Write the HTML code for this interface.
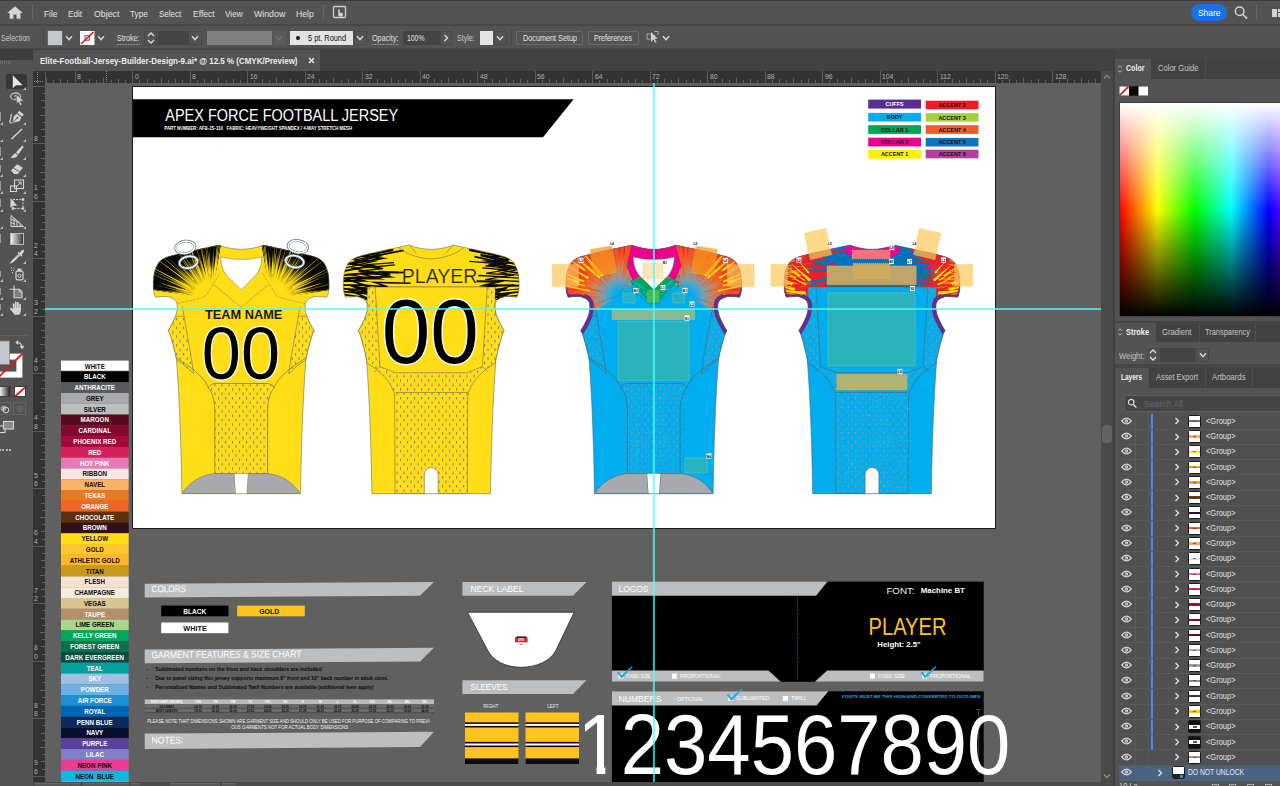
<!DOCTYPE html>
<html lang="en"><head><meta charset="utf-8"><title>Elite-Football-Jersey-Builder-Design-9.ai</title>
<style>
html,body{margin:0;padding:0}
body{width:1280px;height:786px;overflow:hidden;background:#535353;position:relative;font-family:"Liberation Sans",sans-serif}
.a{position:absolute;display:block}
.t{position:absolute;white-space:nowrap;transform-origin:0 50%;display:block}
svg{overflow:hidden}
svg text{white-space:pre}
</style></head>
<body>
<div class="a" style="left:0;top:0;width:1280px;height:1px;background:#3a3a3a"></div>
<div class="a" style="left:0;top:24px;width:1280px;height:2px;background:#474747"></div>
<div class="a" style="left:0;top:48px;width:1280px;height:1px;background:#484848"></div>
<svg class="a" style="left:6px;top:5px" width="18" height="15" viewBox="0 0 18 15"><path d="M9 1.2 L1.2 8 L3.6 8 L3.6 13.8 L7.4 13.8 L7.4 9.6 L10.6 9.6 L10.6 13.8 L14.4 13.8 L14.4 8 L16.8 8 Z" fill="#d6d6d6"/></svg>
<div class="a" style="left:32px;top:5px;width:1px;height:15px;background:#666"></div>
<span class="t" style="left:43.60px;top:7.56px;font-size:9.4px;line-height:11.28px;color:#e0e0e0;transform:scaleX(0.8847);">File</span>
<span class="t" style="left:68.30px;top:7.56px;font-size:9.4px;line-height:11.28px;color:#e0e0e0;transform:scaleX(0.8705);">Edit</span>
<span class="t" style="left:93.60px;top:7.56px;font-size:9.4px;line-height:11.28px;color:#e0e0e0;transform:scaleX(0.9349);">Object</span>
<span class="t" style="left:130.00px;top:7.56px;font-size:9.4px;line-height:11.28px;color:#e0e0e0;transform:scaleX(0.8833);">Type</span>
<span class="t" style="left:159.00px;top:7.56px;font-size:9.4px;line-height:11.28px;color:#e0e0e0;transform:scaleX(0.8574);">Select</span>
<span class="t" style="left:192.60px;top:7.56px;font-size:9.4px;line-height:11.28px;color:#e0e0e0;transform:scaleX(0.9094);">Effect</span>
<span class="t" style="left:225.00px;top:7.56px;font-size:9.4px;line-height:11.28px;color:#e0e0e0;transform:scaleX(0.8760);">View</span>
<span class="t" style="left:253.70px;top:7.56px;font-size:9.4px;line-height:11.28px;color:#e0e0e0;transform:scaleX(0.9362);">Window</span>
<span class="t" style="left:295.80px;top:7.56px;font-size:9.4px;line-height:11.28px;color:#e0e0e0;transform:scaleX(0.9207);">Help</span>
<div class="a" style="left:323px;top:5px;width:1px;height:15px;background:#666"></div>
<svg class="a" style="left:332px;top:5px" width="16" height="15" viewBox="0 0 16 15"><rect x="1.5" y="1.5" width="12" height="11" rx="1" fill="none" stroke="#cfcfcf" stroke-width="1.3"/><path d="M6.2 10.5 V5.2 q0-.9 .8-.9 q.8 0 .8 .9 V7.6 l2.3 .5 q.9 .2 .8 1.1 l-.3 2.3 H7.2 Z" fill="#cfcfcf"/></svg>
<div class="a" style="left:1190.5px;top:3.5px;width:36.5px;height:17.5px;border-radius:9px;background:#1473e6"></div>
<span class="t" style="left:1197.55px;top:7.24px;font-size:9.6px;line-height:11.52px;color:#fff;transform:scaleX(0.8783);">Share</span>
<svg class="a" style="left:1232px;top:4px" width="18" height="17" viewBox="0 0 18 17"><circle cx="7.6" cy="7.2" r="4.3" fill="none" stroke="#d0d0d0" stroke-width="1.5"/><path d="M10.8 10.5 L14.6 14.2" stroke="#d0d0d0" stroke-width="1.7" stroke-linecap="round"/></svg>
<div class="a" style="left:1256px;top:5px;width:1px;height:15px;background:#666"></div>
<div class="a" style="left:1272px;top:9px;width:5px;height:8px;background:#d0d0d0"></div>
<div class="a" style="left:1278px;top:9px;width:2px;height:3px;background:#d0d0d0"></div>
<div class="a" style="left:1278px;top:13px;width:2px;height:4px;background:#d0d0d0"></div>
<span class="t" style="left:1.00px;top:33.30px;font-size:9px;line-height:10.8px;color:#c8c8c8;transform:scaleX(0.7833);">Selection</span>
<div class="a" style="left:43px;top:29px;width:1px;height:17px;background:#484848"></div>
<div class="a" style="left:47.5px;top:30.5px;width:14.5px;height:14px;background:#c4c8cd;box-shadow:0 0 0 .5px #777"></div>
<svg class="a" style="left:64px;top:33px" width="10" height="10" viewBox="-5 -5 10 10"><path d="M-3.0 -1.7 L0 1.7 L3.0 -1.7" fill="none" stroke="#ddd" stroke-width="1.4"/></svg>
<svg class="a" style="left:80px;top:30.5px" width="14.5" height="14" viewBox="0 0 14.5 14"><rect width="14.5" height="14" fill="#fff"/><rect x="5" y="4.8" width="4.4" height="4.4" fill="none" stroke="#555" stroke-width="1"/><path d="M1 13 L13.5 1" stroke="#ee1111" stroke-width="1.6"/></svg>
<svg class="a" style="left:96px;top:33px" width="10" height="10" viewBox="-5 -5 10 10"><path d="M-3.0 -1.7 L0 1.7 L3.0 -1.7" fill="none" stroke="#ddd" stroke-width="1.4"/></svg>
<span class="t" style="left:116.70px;top:33.30px;font-size:9px;line-height:10.8px;color:#e0e0e0;transform:scaleX(0.7821);border-bottom:1px dotted #bbb;line-height:11px;">Stroke:</span>
<svg class="a" style="left:146px;top:30px" width="10" height="16" viewBox="0 0 10 16"><path d="M2 6 L5 3 L8 6 M2 10 L5 13 L8 10" fill="none" stroke="#ddd" stroke-width="1.3"/></svg>
<div class="a" style="left:144px;top:30.5px;width:13px;height:14px;border:1px solid #494949;box-sizing:border-box"></div>
<div class="a" style="left:157.5px;top:30.5px;width:31.5px;height:14px;background:#444"></div>
<div class="a" style="left:189.5px;top:30.5px;width:12px;height:14px;border:1px solid #494949;box-sizing:border-box"></div>
<svg class="a" style="left:190.4px;top:33px" width="10" height="10" viewBox="-5 -5 10 10"><path d="M-3.0 -1.7 L0 1.7 L3.0 -1.7" fill="none" stroke="#ddd" stroke-width="1.4"/></svg>
<div class="a" style="left:206.7px;top:30.5px;width:65.5px;height:14px;background:#808080"></div>
<div class="a" style="left:272.5px;top:30.5px;width:13px;height:14px;background:#5a5a5a"></div>
<svg class="a" style="left:274px;top:33px" width="10" height="10" viewBox="-5 -5 10 10"><path d="M-3.0 -1.7 L0 1.7 L3.0 -1.7" fill="none" stroke="#6e6e6e" stroke-width="1.4"/></svg>
<div class="a" style="left:290.2px;top:30.5px;width:62.5px;height:14px;background:#e2e2e2"></div>
<div class="a" style="left:296px;top:35.5px;width:4px;height:4px;border-radius:2px;background:#111"></div>
<span class="t" style="left:308.00px;top:33.30px;font-size:9px;line-height:10.8px;color:#111;transform:scaleX(0.8166);">5 pt. Round</span>
<div class="a" style="left:353.5px;top:30.5px;width:13px;height:14px;border:1px solid #494949;box-sizing:border-box"></div>
<svg class="a" style="left:355px;top:33px" width="10" height="10" viewBox="-5 -5 10 10"><path d="M-3.0 -1.7 L0 1.7 L3.0 -1.7" fill="none" stroke="#ddd" stroke-width="1.4"/></svg>
<span class="t" style="left:371.80px;top:33.30px;font-size:9px;line-height:10.8px;color:#e0e0e0;transform:scaleX(0.8027);border-bottom:1px dotted #bbb;line-height:11px;">Opacity:</span>
<div class="a" style="left:403.3px;top:30.5px;width:36.5px;height:14px;background:#444"></div>
<span class="t" style="left:406.50px;top:33.30px;font-size:9px;line-height:10.8px;color:#e0e0e0;transform:scaleX(0.7603);">100%</span>
<div class="a" style="left:440px;top:30.5px;width:12px;height:14px;border:1px solid #494949;box-sizing:border-box"></div>
<svg class="a" style="left:441px;top:33px" width="10" height="10" viewBox="-5 -5 10 10"><path d="M-1.5 -3 L1.5 0 L-1.5 3" fill="none" stroke="#ddd" stroke-width="1.4"/></svg>
<span class="t" style="left:457.30px;top:33.30px;font-size:9px;line-height:10.8px;color:#c8c8c8;transform:scaleX(0.7864);">Style:</span>
<div class="a" style="left:479.8px;top:30.5px;width:13.5px;height:14px;background:#e4e4e4"></div>
<div class="a" style="left:494px;top:30.5px;width:13px;height:14px;border:1px solid #494949;box-sizing:border-box"></div>
<svg class="a" style="left:495.3px;top:33px" width="10" height="10" viewBox="-5 -5 10 10"><path d="M-3.0 -1.7 L0 1.7 L3.0 -1.7" fill="none" stroke="#ddd" stroke-width="1.4"/></svg>
<div class="a" style="left:511px;top:29px;width:1px;height:17px;background:#484848"></div>
<div class="a" style="left:516.3px;top:30.5px;width:67px;height:14px;border:1px solid #6a6a6a;border-radius:2px;box-sizing:border-box"></div>
<span class="t" style="left:522.80px;top:33.30px;font-size:9px;line-height:10.8px;color:#e6e6e6;transform:scaleX(0.8055);">Document Setup</span>
<div class="a" style="left:587.5px;top:30.5px;width:51px;height:14px;border:1px solid #6a6a6a;border-radius:2px;box-sizing:border-box"></div>
<span class="t" style="left:594.00px;top:33.30px;font-size:9px;line-height:10.8px;color:#e6e6e6;transform:scaleX(0.7831);">Preferences</span>
<svg class="a" style="left:646px;top:31px" width="13" height="13" viewBox="0 0 13 13"><rect x="1" y="3" width="5" height="5" fill="none" stroke="#aaa" stroke-width="1"/><path d="M5 1 L5 11 L7.4 8.6 L9.4 12 L10.6 11.3 L8.8 8 L11.6 7.6 Z" fill="#cfcfcf"/><path d="M8.5 .5 h3.5 v3.5" fill="none" stroke="#aaa" stroke-width="1"/></svg>
<svg class="a" style="left:660.6px;top:33px" width="10" height="10" viewBox="-5 -5 10 10"><path d="M-3.0 -1.7 L0 1.7 L3.0 -1.7" fill="none" stroke="#ddd" stroke-width="1.4"/></svg>
<div class="a" style="left:0;top:49px;width:1280px;height:22px;background:#424242"></div>
<div class="a" style="left:0;top:49px;width:33px;height:11px;background:#3d3d3d"></div>
<div class="a" style="left:33px;top:50px;width:287px;height:21px;background:#535353"></div>
<span class="t" style="left:39.70px;top:55.50px;font-size:9px;line-height:10.8px;color:#ececec;font-weight:700;transform:scaleX(0.8869);">Elite-Football-Jersey-Builder-Design-9.ai* @ 12.5 % (CMYK/Preview)</span>
<svg class="a" style="left:307px;top:56px" width="9" height="9" viewBox="0 0 9 9"><path d="M2 2 L7 7 M7 2 L2 7" stroke="#e8e8e8" stroke-width="1.5"/></svg>
<div class="a" style="left:33px;top:71px;width:1068px;height:12px;background:#333"></div>
<div class="a" style="left:33px;top:83px;width:12px;height:699px;background:#333"></div>
<svg class="a" style="left:33px;top:71px" width="1068" height="12" viewBox="33 71 1068 12" shape-rendering="crispEdges"><path d="M46.3 78 V83" stroke="#626262" stroke-width="1"/><path d="M53.5 80 V83" stroke="#606060" stroke-width="1"/><path d="M60.7 79 V83" stroke="#626262" stroke-width="1"/><path d="M67.9 80 V83" stroke="#606060" stroke-width="1"/><path d="M75.1 71 V83" stroke="#5a5a5a" stroke-width="1"/><path d="M82.3 80 V83" stroke="#606060" stroke-width="1"/><path d="M89.5 79 V83" stroke="#626262" stroke-width="1"/><path d="M96.7 80 V83" stroke="#606060" stroke-width="1"/><path d="M103.8 78 V83" stroke="#626262" stroke-width="1"/><path d="M111.0 80 V83" stroke="#606060" stroke-width="1"/><path d="M118.2 79 V83" stroke="#626262" stroke-width="1"/><path d="M125.4 80 V83" stroke="#606060" stroke-width="1"/><path d="M132.6 71 V83" stroke="#5a5a5a" stroke-width="1"/><path d="M139.8 80 V83" stroke="#606060" stroke-width="1"/><path d="M147.0 79 V83" stroke="#626262" stroke-width="1"/><path d="M154.2 80 V83" stroke="#606060" stroke-width="1"/><path d="M161.3 78 V83" stroke="#626262" stroke-width="1"/><path d="M168.5 80 V83" stroke="#606060" stroke-width="1"/><path d="M175.7 79 V83" stroke="#626262" stroke-width="1"/><path d="M182.9 80 V83" stroke="#606060" stroke-width="1"/><path d="M190.1 71 V83" stroke="#5a5a5a" stroke-width="1"/><path d="M197.3 80 V83" stroke="#606060" stroke-width="1"/><path d="M204.5 79 V83" stroke="#626262" stroke-width="1"/><path d="M211.7 80 V83" stroke="#606060" stroke-width="1"/><path d="M218.8 78 V83" stroke="#626262" stroke-width="1"/><path d="M226.0 80 V83" stroke="#606060" stroke-width="1"/><path d="M233.2 79 V83" stroke="#626262" stroke-width="1"/><path d="M240.4 80 V83" stroke="#606060" stroke-width="1"/><path d="M247.6 71 V83" stroke="#5a5a5a" stroke-width="1"/><path d="M254.8 80 V83" stroke="#606060" stroke-width="1"/><path d="M262.0 79 V83" stroke="#626262" stroke-width="1"/><path d="M269.2 80 V83" stroke="#606060" stroke-width="1"/><path d="M276.4 78 V83" stroke="#626262" stroke-width="1"/><path d="M283.5 80 V83" stroke="#606060" stroke-width="1"/><path d="M290.7 79 V83" stroke="#626262" stroke-width="1"/><path d="M297.9 80 V83" stroke="#606060" stroke-width="1"/><path d="M305.1 71 V83" stroke="#5a5a5a" stroke-width="1"/><path d="M312.3 80 V83" stroke="#606060" stroke-width="1"/><path d="M319.5 79 V83" stroke="#626262" stroke-width="1"/><path d="M326.7 80 V83" stroke="#606060" stroke-width="1"/><path d="M333.9 78 V83" stroke="#626262" stroke-width="1"/><path d="M341.0 80 V83" stroke="#606060" stroke-width="1"/><path d="M348.2 79 V83" stroke="#626262" stroke-width="1"/><path d="M355.4 80 V83" stroke="#606060" stroke-width="1"/><path d="M362.6 71 V83" stroke="#5a5a5a" stroke-width="1"/><path d="M369.8 80 V83" stroke="#606060" stroke-width="1"/><path d="M377.0 79 V83" stroke="#626262" stroke-width="1"/><path d="M384.2 80 V83" stroke="#606060" stroke-width="1"/><path d="M391.4 78 V83" stroke="#626262" stroke-width="1"/><path d="M398.5 80 V83" stroke="#606060" stroke-width="1"/><path d="M405.7 79 V83" stroke="#626262" stroke-width="1"/><path d="M412.9 80 V83" stroke="#606060" stroke-width="1"/><path d="M420.1 71 V83" stroke="#5a5a5a" stroke-width="1"/><path d="M427.3 80 V83" stroke="#606060" stroke-width="1"/><path d="M434.5 79 V83" stroke="#626262" stroke-width="1"/><path d="M441.7 80 V83" stroke="#606060" stroke-width="1"/><path d="M448.9 78 V83" stroke="#626262" stroke-width="1"/><path d="M456.0 80 V83" stroke="#606060" stroke-width="1"/><path d="M463.2 79 V83" stroke="#626262" stroke-width="1"/><path d="M470.4 80 V83" stroke="#606060" stroke-width="1"/><path d="M477.6 71 V83" stroke="#5a5a5a" stroke-width="1"/><path d="M484.8 80 V83" stroke="#606060" stroke-width="1"/><path d="M492.0 79 V83" stroke="#626262" stroke-width="1"/><path d="M499.2 80 V83" stroke="#606060" stroke-width="1"/><path d="M506.4 78 V83" stroke="#626262" stroke-width="1"/><path d="M513.5 80 V83" stroke="#606060" stroke-width="1"/><path d="M520.7 79 V83" stroke="#626262" stroke-width="1"/><path d="M527.9 80 V83" stroke="#606060" stroke-width="1"/><path d="M535.1 71 V83" stroke="#5a5a5a" stroke-width="1"/><path d="M542.3 80 V83" stroke="#606060" stroke-width="1"/><path d="M549.5 79 V83" stroke="#626262" stroke-width="1"/><path d="M556.7 80 V83" stroke="#606060" stroke-width="1"/><path d="M563.9 78 V83" stroke="#626262" stroke-width="1"/><path d="M571.0 80 V83" stroke="#606060" stroke-width="1"/><path d="M578.2 79 V83" stroke="#626262" stroke-width="1"/><path d="M585.4 80 V83" stroke="#606060" stroke-width="1"/><path d="M592.6 71 V83" stroke="#5a5a5a" stroke-width="1"/><path d="M599.8 80 V83" stroke="#606060" stroke-width="1"/><path d="M607.0 79 V83" stroke="#626262" stroke-width="1"/><path d="M614.2 80 V83" stroke="#606060" stroke-width="1"/><path d="M621.4 78 V83" stroke="#626262" stroke-width="1"/><path d="M628.5 80 V83" stroke="#606060" stroke-width="1"/><path d="M635.7 79 V83" stroke="#626262" stroke-width="1"/><path d="M642.9 80 V83" stroke="#606060" stroke-width="1"/><path d="M650.1 71 V83" stroke="#5a5a5a" stroke-width="1"/><path d="M657.3 80 V83" stroke="#606060" stroke-width="1"/><path d="M664.5 79 V83" stroke="#626262" stroke-width="1"/><path d="M671.7 80 V83" stroke="#606060" stroke-width="1"/><path d="M678.9 78 V83" stroke="#626262" stroke-width="1"/><path d="M686.0 80 V83" stroke="#606060" stroke-width="1"/><path d="M693.2 79 V83" stroke="#626262" stroke-width="1"/><path d="M700.4 80 V83" stroke="#606060" stroke-width="1"/><path d="M707.6 71 V83" stroke="#5a5a5a" stroke-width="1"/><path d="M714.8 80 V83" stroke="#606060" stroke-width="1"/><path d="M722.0 79 V83" stroke="#626262" stroke-width="1"/><path d="M729.2 80 V83" stroke="#606060" stroke-width="1"/><path d="M736.4 78 V83" stroke="#626262" stroke-width="1"/><path d="M743.5 80 V83" stroke="#606060" stroke-width="1"/><path d="M750.7 79 V83" stroke="#626262" stroke-width="1"/><path d="M757.9 80 V83" stroke="#606060" stroke-width="1"/><path d="M765.1 71 V83" stroke="#5a5a5a" stroke-width="1"/><path d="M772.3 80 V83" stroke="#606060" stroke-width="1"/><path d="M779.5 79 V83" stroke="#626262" stroke-width="1"/><path d="M786.7 80 V83" stroke="#606060" stroke-width="1"/><path d="M793.9 78 V83" stroke="#626262" stroke-width="1"/><path d="M801.0 80 V83" stroke="#606060" stroke-width="1"/><path d="M808.2 79 V83" stroke="#626262" stroke-width="1"/><path d="M815.4 80 V83" stroke="#606060" stroke-width="1"/><path d="M822.6 71 V83" stroke="#5a5a5a" stroke-width="1"/><path d="M829.8 80 V83" stroke="#606060" stroke-width="1"/><path d="M837.0 79 V83" stroke="#626262" stroke-width="1"/><path d="M844.2 80 V83" stroke="#606060" stroke-width="1"/><path d="M851.4 78 V83" stroke="#626262" stroke-width="1"/><path d="M858.5 80 V83" stroke="#606060" stroke-width="1"/><path d="M865.7 79 V83" stroke="#626262" stroke-width="1"/><path d="M872.9 80 V83" stroke="#606060" stroke-width="1"/><path d="M880.1 71 V83" stroke="#5a5a5a" stroke-width="1"/><path d="M887.3 80 V83" stroke="#606060" stroke-width="1"/><path d="M894.5 79 V83" stroke="#626262" stroke-width="1"/><path d="M901.7 80 V83" stroke="#606060" stroke-width="1"/><path d="M908.9 78 V83" stroke="#626262" stroke-width="1"/><path d="M916.0 80 V83" stroke="#606060" stroke-width="1"/><path d="M923.2 79 V83" stroke="#626262" stroke-width="1"/><path d="M930.4 80 V83" stroke="#606060" stroke-width="1"/><path d="M937.6 71 V83" stroke="#5a5a5a" stroke-width="1"/><path d="M944.8 80 V83" stroke="#606060" stroke-width="1"/><path d="M952.0 79 V83" stroke="#626262" stroke-width="1"/><path d="M959.2 80 V83" stroke="#606060" stroke-width="1"/><path d="M966.4 78 V83" stroke="#626262" stroke-width="1"/><path d="M973.5 80 V83" stroke="#606060" stroke-width="1"/><path d="M980.7 79 V83" stroke="#626262" stroke-width="1"/><path d="M987.9 80 V83" stroke="#606060" stroke-width="1"/><path d="M995.1 71 V83" stroke="#5a5a5a" stroke-width="1"/><path d="M1002.3 80 V83" stroke="#606060" stroke-width="1"/><path d="M1009.5 79 V83" stroke="#626262" stroke-width="1"/><path d="M1016.7 80 V83" stroke="#606060" stroke-width="1"/><path d="M1023.9 78 V83" stroke="#626262" stroke-width="1"/><path d="M1031.0 80 V83" stroke="#606060" stroke-width="1"/><path d="M1038.2 79 V83" stroke="#626262" stroke-width="1"/><path d="M1045.4 80 V83" stroke="#606060" stroke-width="1"/><path d="M1052.6 71 V83" stroke="#5a5a5a" stroke-width="1"/><path d="M1059.8 80 V83" stroke="#606060" stroke-width="1"/><path d="M1067.0 79 V83" stroke="#626262" stroke-width="1"/><path d="M1074.2 80 V83" stroke="#606060" stroke-width="1"/><path d="M1081.3 78 V83" stroke="#626262" stroke-width="1"/><path d="M1088.5 80 V83" stroke="#606060" stroke-width="1"/><path d="M1095.7 79 V83" stroke="#626262" stroke-width="1"/><path d="M34 81.5 H44 M37.5 72 V83" stroke="#8a8a8a" stroke-width="1" stroke-dasharray="1 1"/><path d="M45.5 71 V83" stroke="#555" stroke-width="1"/><path d="M106.5 71 V83" stroke="#888" stroke-width="1" stroke-dasharray="1 1"/></svg>
<span class="t" style="left:77.30px;top:71.84px;font-size:7.6px;line-height:9.12px;color:#b0b0b0;transform:scaleX(0.9000);">8</span>
<span class="t" style="left:134.80px;top:71.84px;font-size:7.6px;line-height:9.12px;color:#b0b0b0;transform:scaleX(0.9000);">0</span>
<span class="t" style="left:192.30px;top:71.84px;font-size:7.6px;line-height:9.12px;color:#b0b0b0;transform:scaleX(0.9000);">8</span>
<span class="t" style="left:249.80px;top:71.84px;font-size:7.6px;line-height:9.12px;color:#b0b0b0;transform:scaleX(0.9000);">16</span>
<span class="t" style="left:307.30px;top:71.84px;font-size:7.6px;line-height:9.12px;color:#b0b0b0;transform:scaleX(0.9000);">24</span>
<span class="t" style="left:364.80px;top:71.84px;font-size:7.6px;line-height:9.12px;color:#b0b0b0;transform:scaleX(0.9000);">32</span>
<span class="t" style="left:422.30px;top:71.84px;font-size:7.6px;line-height:9.12px;color:#b0b0b0;transform:scaleX(0.9000);">40</span>
<span class="t" style="left:479.80px;top:71.84px;font-size:7.6px;line-height:9.12px;color:#b0b0b0;transform:scaleX(0.9000);">48</span>
<span class="t" style="left:537.30px;top:71.84px;font-size:7.6px;line-height:9.12px;color:#b0b0b0;transform:scaleX(0.9000);">56</span>
<span class="t" style="left:594.80px;top:71.84px;font-size:7.6px;line-height:9.12px;color:#b0b0b0;transform:scaleX(0.9000);">64</span>
<span class="t" style="left:652.30px;top:71.84px;font-size:7.6px;line-height:9.12px;color:#b0b0b0;transform:scaleX(0.9000);">72</span>
<span class="t" style="left:709.80px;top:71.84px;font-size:7.6px;line-height:9.12px;color:#b0b0b0;transform:scaleX(0.9000);">80</span>
<span class="t" style="left:767.30px;top:71.84px;font-size:7.6px;line-height:9.12px;color:#b0b0b0;transform:scaleX(0.9000);">88</span>
<span class="t" style="left:824.80px;top:71.84px;font-size:7.6px;line-height:9.12px;color:#b0b0b0;transform:scaleX(0.9000);">96</span>
<span class="t" style="left:882.30px;top:71.84px;font-size:7.6px;line-height:9.12px;color:#b0b0b0;transform:scaleX(0.9000);">104</span>
<span class="t" style="left:939.80px;top:71.84px;font-size:7.6px;line-height:9.12px;color:#b0b0b0;transform:scaleX(0.9000);">112</span>
<span class="t" style="left:997.30px;top:71.84px;font-size:7.6px;line-height:9.12px;color:#b0b0b0;transform:scaleX(0.9000);">120</span>
<span class="t" style="left:1054.80px;top:71.84px;font-size:7.6px;line-height:9.12px;color:#b0b0b0;transform:scaleX(0.9000);">128</span>
<svg class="a" style="left:33px;top:83px" width="12" height="699" viewBox="33 83 12 699" shape-rendering="crispEdges"><path d="M33 86.2 H45" stroke="#5a5a5a" stroke-width="1"/><path d="M42 93.4 H45" stroke="#606060" stroke-width="1"/><path d="M41 100.6 H45" stroke="#626262" stroke-width="1"/><path d="M42 107.8 H45" stroke="#606060" stroke-width="1"/><path d="M40 115.0 H45" stroke="#626262" stroke-width="1"/><path d="M42 122.1 H45" stroke="#606060" stroke-width="1"/><path d="M41 129.3 H45" stroke="#626262" stroke-width="1"/><path d="M42 136.5 H45" stroke="#606060" stroke-width="1"/><path d="M33 143.7 H45" stroke="#5a5a5a" stroke-width="1"/><path d="M42 150.9 H45" stroke="#606060" stroke-width="1"/><path d="M41 158.1 H45" stroke="#626262" stroke-width="1"/><path d="M42 165.3 H45" stroke="#606060" stroke-width="1"/><path d="M40 172.4 H45" stroke="#626262" stroke-width="1"/><path d="M42 179.6 H45" stroke="#606060" stroke-width="1"/><path d="M41 186.8 H45" stroke="#626262" stroke-width="1"/><path d="M42 194.0 H45" stroke="#606060" stroke-width="1"/><path d="M33 201.2 H45" stroke="#5a5a5a" stroke-width="1"/><path d="M42 208.4 H45" stroke="#606060" stroke-width="1"/><path d="M41 215.6 H45" stroke="#626262" stroke-width="1"/><path d="M42 222.8 H45" stroke="#606060" stroke-width="1"/><path d="M40 229.9 H45" stroke="#626262" stroke-width="1"/><path d="M42 237.1 H45" stroke="#606060" stroke-width="1"/><path d="M41 244.3 H45" stroke="#626262" stroke-width="1"/><path d="M42 251.5 H45" stroke="#606060" stroke-width="1"/><path d="M33 258.7 H45" stroke="#5a5a5a" stroke-width="1"/><path d="M42 265.9 H45" stroke="#606060" stroke-width="1"/><path d="M41 273.1 H45" stroke="#626262" stroke-width="1"/><path d="M42 280.3 H45" stroke="#606060" stroke-width="1"/><path d="M40 287.4 H45" stroke="#626262" stroke-width="1"/><path d="M42 294.6 H45" stroke="#606060" stroke-width="1"/><path d="M41 301.8 H45" stroke="#626262" stroke-width="1"/><path d="M42 309.0 H45" stroke="#606060" stroke-width="1"/><path d="M33 316.2 H45" stroke="#5a5a5a" stroke-width="1"/><path d="M42 323.4 H45" stroke="#606060" stroke-width="1"/><path d="M41 330.6 H45" stroke="#626262" stroke-width="1"/><path d="M42 337.8 H45" stroke="#606060" stroke-width="1"/><path d="M40 344.9 H45" stroke="#626262" stroke-width="1"/><path d="M42 352.1 H45" stroke="#606060" stroke-width="1"/><path d="M41 359.3 H45" stroke="#626262" stroke-width="1"/><path d="M42 366.5 H45" stroke="#606060" stroke-width="1"/><path d="M33 373.7 H45" stroke="#5a5a5a" stroke-width="1"/><path d="M42 380.9 H45" stroke="#606060" stroke-width="1"/><path d="M41 388.1 H45" stroke="#626262" stroke-width="1"/><path d="M42 395.3 H45" stroke="#606060" stroke-width="1"/><path d="M40 402.4 H45" stroke="#626262" stroke-width="1"/><path d="M42 409.6 H45" stroke="#606060" stroke-width="1"/><path d="M41 416.8 H45" stroke="#626262" stroke-width="1"/><path d="M42 424.0 H45" stroke="#606060" stroke-width="1"/><path d="M33 431.2 H45" stroke="#5a5a5a" stroke-width="1"/><path d="M42 438.4 H45" stroke="#606060" stroke-width="1"/><path d="M41 445.6 H45" stroke="#626262" stroke-width="1"/><path d="M42 452.8 H45" stroke="#606060" stroke-width="1"/><path d="M40 459.9 H45" stroke="#626262" stroke-width="1"/><path d="M42 467.1 H45" stroke="#606060" stroke-width="1"/><path d="M41 474.3 H45" stroke="#626262" stroke-width="1"/><path d="M42 481.5 H45" stroke="#606060" stroke-width="1"/><path d="M33 488.7 H45" stroke="#5a5a5a" stroke-width="1"/><path d="M42 495.9 H45" stroke="#606060" stroke-width="1"/><path d="M41 503.1 H45" stroke="#626262" stroke-width="1"/><path d="M42 510.3 H45" stroke="#606060" stroke-width="1"/><path d="M40 517.5 H45" stroke="#626262" stroke-width="1"/><path d="M42 524.6 H45" stroke="#606060" stroke-width="1"/><path d="M41 531.8 H45" stroke="#626262" stroke-width="1"/><path d="M42 539.0 H45" stroke="#606060" stroke-width="1"/><path d="M33 546.2 H45" stroke="#5a5a5a" stroke-width="1"/><path d="M42 553.4 H45" stroke="#606060" stroke-width="1"/><path d="M41 560.6 H45" stroke="#626262" stroke-width="1"/><path d="M42 567.8 H45" stroke="#606060" stroke-width="1"/><path d="M40 575.0 H45" stroke="#626262" stroke-width="1"/><path d="M42 582.1 H45" stroke="#606060" stroke-width="1"/><path d="M41 589.3 H45" stroke="#626262" stroke-width="1"/><path d="M42 596.5 H45" stroke="#606060" stroke-width="1"/><path d="M33 603.7 H45" stroke="#5a5a5a" stroke-width="1"/><path d="M42 610.9 H45" stroke="#606060" stroke-width="1"/><path d="M41 618.1 H45" stroke="#626262" stroke-width="1"/><path d="M42 625.3 H45" stroke="#606060" stroke-width="1"/><path d="M40 632.5 H45" stroke="#626262" stroke-width="1"/><path d="M42 639.6 H45" stroke="#606060" stroke-width="1"/><path d="M41 646.8 H45" stroke="#626262" stroke-width="1"/><path d="M42 654.0 H45" stroke="#606060" stroke-width="1"/><path d="M33 661.2 H45" stroke="#5a5a5a" stroke-width="1"/><path d="M42 668.4 H45" stroke="#606060" stroke-width="1"/><path d="M41 675.6 H45" stroke="#626262" stroke-width="1"/><path d="M42 682.8 H45" stroke="#606060" stroke-width="1"/><path d="M40 690.0 H45" stroke="#626262" stroke-width="1"/><path d="M42 697.1 H45" stroke="#606060" stroke-width="1"/><path d="M41 704.3 H45" stroke="#626262" stroke-width="1"/><path d="M42 711.5 H45" stroke="#606060" stroke-width="1"/><path d="M33 718.7 H45" stroke="#5a5a5a" stroke-width="1"/><path d="M42 725.9 H45" stroke="#606060" stroke-width="1"/><path d="M41 733.1 H45" stroke="#626262" stroke-width="1"/><path d="M42 740.3 H45" stroke="#606060" stroke-width="1"/><path d="M40 747.5 H45" stroke="#626262" stroke-width="1"/><path d="M42 754.6 H45" stroke="#606060" stroke-width="1"/><path d="M41 761.8 H45" stroke="#626262" stroke-width="1"/><path d="M42 769.0 H45" stroke="#606060" stroke-width="1"/><path d="M33 776.2 H45" stroke="#5a5a5a" stroke-width="1"/></svg>
<span class="t" style="left:33.80px;top:134.44px;font-size:7.6px;line-height:9.12px;color:#b0b0b0;transform:scaleX(0.9000);">8</span>
<span class="t" style="left:33.80px;top:183.14px;font-size:7.6px;line-height:9.12px;color:#b0b0b0;transform:scaleX(0.9000);">1</span>
<span class="t" style="left:33.80px;top:191.94px;font-size:7.6px;line-height:9.12px;color:#b0b0b0;transform:scaleX(0.9000);">6</span>
<span class="t" style="left:33.80px;top:240.64px;font-size:7.6px;line-height:9.12px;color:#b0b0b0;transform:scaleX(0.9000);">2</span>
<span class="t" style="left:33.80px;top:249.44px;font-size:7.6px;line-height:9.12px;color:#b0b0b0;transform:scaleX(0.9000);">4</span>
<span class="t" style="left:33.80px;top:298.14px;font-size:7.6px;line-height:9.12px;color:#b0b0b0;transform:scaleX(0.9000);">3</span>
<span class="t" style="left:33.80px;top:306.94px;font-size:7.6px;line-height:9.12px;color:#b0b0b0;transform:scaleX(0.9000);">2</span>
<span class="t" style="left:33.80px;top:355.64px;font-size:7.6px;line-height:9.12px;color:#b0b0b0;transform:scaleX(0.9000);">4</span>
<span class="t" style="left:33.80px;top:364.44px;font-size:7.6px;line-height:9.12px;color:#b0b0b0;transform:scaleX(0.9000);">0</span>
<span class="t" style="left:33.80px;top:413.14px;font-size:7.6px;line-height:9.12px;color:#b0b0b0;transform:scaleX(0.9000);">4</span>
<span class="t" style="left:33.80px;top:421.94px;font-size:7.6px;line-height:9.12px;color:#b0b0b0;transform:scaleX(0.9000);">8</span>
<span class="t" style="left:33.80px;top:470.64px;font-size:7.6px;line-height:9.12px;color:#b0b0b0;transform:scaleX(0.9000);">5</span>
<span class="t" style="left:33.80px;top:479.44px;font-size:7.6px;line-height:9.12px;color:#b0b0b0;transform:scaleX(0.9000);">6</span>
<span class="t" style="left:33.80px;top:528.14px;font-size:7.6px;line-height:9.12px;color:#b0b0b0;transform:scaleX(0.9000);">6</span>
<span class="t" style="left:33.80px;top:536.94px;font-size:7.6px;line-height:9.12px;color:#b0b0b0;transform:scaleX(0.9000);">4</span>
<span class="t" style="left:33.80px;top:585.64px;font-size:7.6px;line-height:9.12px;color:#b0b0b0;transform:scaleX(0.9000);">7</span>
<span class="t" style="left:33.80px;top:594.44px;font-size:7.6px;line-height:9.12px;color:#b0b0b0;transform:scaleX(0.9000);">2</span>
<span class="t" style="left:33.80px;top:643.14px;font-size:7.6px;line-height:9.12px;color:#b0b0b0;transform:scaleX(0.9000);">8</span>
<span class="t" style="left:33.80px;top:651.94px;font-size:7.6px;line-height:9.12px;color:#b0b0b0;transform:scaleX(0.9000);">0</span>
<span class="t" style="left:33.80px;top:700.64px;font-size:7.6px;line-height:9.12px;color:#b0b0b0;transform:scaleX(0.9000);">8</span>
<span class="t" style="left:33.80px;top:709.44px;font-size:7.6px;line-height:9.12px;color:#b0b0b0;transform:scaleX(0.9000);">8</span>
<span class="t" style="left:33.80px;top:758.14px;font-size:7.6px;line-height:9.12px;color:#b0b0b0;transform:scaleX(0.9000);">9</span>
<span class="t" style="left:33.80px;top:766.94px;font-size:7.6px;line-height:9.12px;color:#b0b0b0;transform:scaleX(0.9000);">6</span>
<svg class="a" id="cv" style="left:45px;top:83px" width="1056" height="699" viewBox="45 83 1056 699" font-family="Liberation Sans, sans-serif">
<defs><pattern id="mY" width="7" height="8.8" patternUnits="userSpaceOnUse"><rect width="7" height="8.8" fill="#ffde17"/><rect x="1" y="1" width="1.15" height="2.4" fill="#7b7f9e"/><rect x="4.5" y="5.4" width="1.15" height="2.4" fill="#7b7f9e"/></pattern><pattern id="mB" width="7" height="8.8" patternUnits="userSpaceOnUse"><rect width="7" height="8.8" fill="#00aeef"/><rect x="1" y="1" width="1.3" height="2" rx=".5" fill="#c0896a"/><rect x="4.5" y="5.4" width="1.3" height="2" rx=".5" fill="#c0896a"/></pattern></defs>
<rect x="45" y="83" width="1056" height="699" fill="#606060"/>
<rect x="132.5" y="86.5" width="863" height="442" fill="#fff" stroke="#1c1c1c" stroke-width="1"/>
<path d="M133 99.2H573.6L543 137.3H133Z" fill="#000"/>
<text transform="translate(165.30 121.00) scale(0.8945 1)" font-size="16.2" fill="#fff" >APEX FORCE FOOTBALL JERSEY</text>
<text transform="translate(164.30 129.70) scale(0.8392 1)" font-size="5.2" fill="#fff" font-weight="700" >PART NUMBER: AFB-JS-110   FABRIC: HEAVYWEIGHT SPANDEX / 4-WAY STRETCH MESH</text>
<rect x="868.2" y="99.6" width="52.8" height="9.0" fill="#5c2d91"/>
<text transform="translate(885.46 106.20) scale(0.9300 1)" font-size="5.9" fill="#fff" font-weight="700" >CUFFS</text>
<rect x="868.2" y="112.9" width="52.8" height="8.6" fill="#00aeef"/>
<text transform="translate(886.67 119.30) scale(0.9300 1)" font-size="5.9" fill="#111" font-weight="700" >BODY</text>
<rect x="868.2" y="125.2" width="52.8" height="8.7" fill="#00a651"/>
<text transform="translate(880.88 131.65) scale(0.9300 1)" font-size="5.9" fill="#111" font-weight="700" >COLLAR 1</text>
<rect x="868.2" y="137.7" width="52.8" height="8.7" fill="#ec008c"/>
<text transform="translate(880.88 144.15) scale(0.9300 1)" font-size="5.9" fill="#111" font-weight="700" >COLLAR 2</text>
<rect x="868.2" y="150" width="52.8" height="8.7" fill="#fff200"/>
<text transform="translate(880.88 156.45) scale(0.9300 1)" font-size="5.9" fill="#111" font-weight="700" >ACCENT 1</text>
<rect x="925.7" y="100.7" width="52.8" height="8.6" fill="#ed1c24"/>
<text transform="translate(938.38 107.10) scale(0.9300 1)" font-size="5.9" fill="#111" font-weight="700" >ACCENT 2</text>
<rect x="925.7" y="113.2" width="52.8" height="8.4" fill="#a6ce39"/>
<text transform="translate(938.38 119.50) scale(0.9300 1)" font-size="5.9" fill="#111" font-weight="700" >ACCENT 3</text>
<rect x="925.7" y="125.2" width="52.8" height="8.7" fill="#f15a29"/>
<text transform="translate(938.38 131.65) scale(0.9300 1)" font-size="5.9" fill="#111" font-weight="700" >ACCENT 4</text>
<rect x="925.7" y="137.9" width="52.8" height="8.6" fill="#0e76bc"/>
<text transform="translate(938.38 144.30) scale(0.9300 1)" font-size="5.9" fill="#111" font-weight="700" >ACCENT 5</text>
<rect x="925.7" y="149.7" width="52.8" height="8.6" fill="#b0409a"/>
<text transform="translate(938.38 156.10) scale(0.9300 1)" font-size="5.9" fill="#111" font-weight="700" >ACCENT 6</text>
<clipPath id="cba"><path d="M241.2 249.3C233.2 249.3 225.2 247.6 219.1 245.1C211.2 246.8 201.2 249 194 250.4C183.2 252.6 173.2 255 166 257.4C161.2 259.5 158.7 262 157.6 264.4C155.2 268.5 154 273 153.7 277C153.3 281 153.2 285 153.4 288.8C153.7 292 154.4 295 155.5 297.2C159.2 296.8 163.2 296.4 167.4 296.5C169.2 297 171.2 297.8 173 298.6C175.7 300 177 302.5 177.2 305C177.4 310 176.6 314 175 317.5C173.2 322 170.7 326.5 168 330.8L169.5 333C170.8 337 172 341 173 345C174.4 350 175.6 355 176.5 360C179.7 400 181.2 450 181.9 493.7L300.5 493.7C301.2 450 302.7 400 305.9 360C306.8 355 308 350 309.4 345C310.4 341 311.6 337 312.9 333L314.4 330.8C311.7 326.5 309.2 322 307.4 317.5C305.8 314 305 310 305.2 305C305.4 302.5 306.7 300 309.4 298.6C311.2 297.8 313.2 297 315 296.5C319.2 296.4 323.2 296.8 326.9 297.2C328 295 328.7 292 329 288.8C329.2 285 329.1 281 328.7 277C328.4 273 327.2 268.5 324.8 264.4C323.7 262 321.2 259.5 316.4 257.4C309.2 255 299.2 252.6 288.4 250.4C281.2 249 271.2 246.8 263.3 245.1C257.2 247.6 249.2 249.3 241.2 249.3Z"/></clipPath>
<path d="M241.2 249.3C233.2 249.3 225.2 247.6 219.1 245.1C211.2 246.8 201.2 249 194 250.4C183.2 252.6 173.2 255 166 257.4C161.2 259.5 158.7 262 157.6 264.4C155.2 268.5 154 273 153.7 277C153.3 281 153.2 285 153.4 288.8C153.7 292 154.4 295 155.5 297.2C159.2 296.8 163.2 296.4 167.4 296.5C169.2 297 171.2 297.8 173 298.6C175.7 300 177 302.5 177.2 305C177.4 310 176.6 314 175 317.5C173.2 322 170.7 326.5 168 330.8L169.5 333C170.8 337 172 341 173 345C174.4 350 175.6 355 176.5 360C179.7 400 181.2 450 181.9 493.7L300.5 493.7C301.2 450 302.7 400 305.9 360C306.8 355 308 350 309.4 345C310.4 341 311.6 337 312.9 333L314.4 330.8C311.7 326.5 309.2 322 307.4 317.5C305.8 314 305 310 305.2 305C305.4 302.5 306.7 300 309.4 298.6C311.2 297.8 313.2 297 315 296.5C319.2 296.4 323.2 296.8 326.9 297.2C328 295 328.7 292 329 288.8C329.2 285 329.1 281 328.7 277C328.4 273 327.2 268.5 324.8 264.4C323.7 262 321.2 259.5 316.4 257.4C309.2 255 299.2 252.6 288.4 250.4C281.2 249 271.2 246.8 263.3 245.1C257.2 247.6 249.2 249.3 241.2 249.3Z" fill="#ffde17"/>
<g clip-path="url(#cba)">
<radialGradient id="rgal" gradientUnits="userSpaceOnUse" cx="211.2" cy="299" r="66"><stop offset="0" stop-color="#1a1a10" stop-opacity="0"/><stop offset="0.27" stop-color="#1a1a10" stop-opacity="0"/><stop offset="0.5" stop-color="#15150f" stop-opacity="0.6"/><stop offset="0.72" stop-color="#000" stop-opacity="1"/><stop offset="1" stop-color="#000" stop-opacity="1"/></radialGradient>
<path d="M211.2 299 L102.6 281.8 L105.5 268.7 L109.9 256 L115.9 244 L123.4 232.8 L132.1 222.6 L142 213.5 L152.9 205.7 L164.7 199.3 L177.2 194.4 L190.2 191 L203.5 189.3 L217 189.2 L230.3 190.7Z" fill="url(#rgal)"/>
<g clip-path="url(#csa0)">
<clipPath id="csa0"><path d="M211.2 299 L102.6 281.8 L105.5 268.7 L109.9 256 L115.9 244 L123.4 232.8 L132.1 222.6 L142 213.5 L152.9 205.7 L164.7 199.3 L177.2 194.4 L190.2 191 L203.5 189.3 L217 189.2 L230.3 190.7Z"/></clipPath>
<path d="M176.5 293L102 286.2L104 274.2ZM177.9 291.3L103 279.4L105.3 269.2ZM178.2 290L103.8 275.3L106.6 264.9ZM186.9 290.1L106.5 265.4L109.6 256.8ZM173.7 284.5L106.8 264.5L110.7 254.2ZM171.4 281.2L108.5 259.7L113.5 248.5ZM179.5 281.4L113.1 249.3L117.2 241.9ZM181.3 281.6L114.2 247.1L118.2 240.2ZM187.3 282.9L117.7 241L122.1 234.5ZM185.3 278.9L120.8 236.3L128 227.1ZM183.4 274.8L125 230.6L131.6 223ZM187.6 275.7L129.8 225.1L136.1 218.6ZM182.2 266L134.3 220.4L143.1 212.6ZM192.1 275.5L138.5 216.4L145.3 210.9ZM195.8 278.8L140.2 215L149.3 208.1ZM188.4 265L146.1 210.3L154 205ZM191.3 263.2L154.5 204.7L161.2 201ZM191.3 261.8L154.9 204.5L163.7 199.8ZM198.8 269.5L165 199.2L172.4 196.1ZM197.2 262L168.1 197.8L176.5 194.6ZM201.1 270.1L169.2 197.3L180.8 193.3ZM204.8 273.4L180.1 193.5L188.7 191.3ZM205.5 274.4L180.9 193.3L192.1 190.7ZM205.3 264.3L187.9 191.5L197.6 189.8ZM206.8 260.6L194.6 190.3L202.8 189.3ZM210.2 272.7L202.4 189.4L212.1 189ZM211.1 269.6L204.5 189.2L216.9 189.1ZM213.6 269L214.1 189L226 190ZM214.5 267.3L216.7 189.1L228.4 190.4ZM215.9 273.4L224.8 189.8L237 192.1ZM217.3 270.5L228.7 190.4L239.9 192.8Z" fill="#0a0a0a" opacity="1"/>
<path d="M202.4 275.8L184.2 233.7L201 276.4ZM207.7 280.2L195.9 223.3L207.1 280.3ZM214 284.3L220.2 232.2L212.4 284.1ZM199.4 282.3L179.4 256.7L198.4 283ZM187.2 294.2L160.2 289.8L187 295.1ZM209.6 283.8L203.4 249.9L208 284.1ZM202.1 276.8L192.3 254.3L201.6 277ZM190.6 286.7L165.8 274.2L189.7 288.3ZM194.1 285.7L147.8 252.6L193.3 286.7ZM189.4 286.5L142.6 262.1L188.7 287.7ZM212.5 283.5L214.1 244.3L211.5 283.4ZM192.2 290.5L168.4 281.1L191.8 291.4ZM194.2 295.7L143.7 287.9L194.1 296.7ZM210.3 279.7L206.9 237.8L209.3 279.8ZM208.5 285.4L199.5 254.5L206.8 285.8ZM207.3 276.4L197.6 225.8L206.7 276.5ZM201.1 289L164.1 254.4L200.7 289.5ZM191.1 288.7L140.8 264.6L190.7 289.5ZM213.7 281.3L219.9 221.6L212.7 281.2ZM199.7 279.7L173.4 237.8L199.1 280ZM208.9 274.2L203.3 224.5L208.3 274.3ZM188 291L157.6 282L187.6 292.2ZM198.5 287.2L152.8 248.4L197.7 288.1ZM199.4 289.1L171.9 267.4L199 289.6ZM207.6 285.3L188.9 222.3L206.9 285.5ZM215.1 283L224.1 237.1L214 282.8ZM203.8 281.9L179.8 232.3L202.8 282.4ZM192.4 293.9L136.6 280.1L192.2 294.5ZM211 274.1L209.3 250.3L209.5 274.1ZM204.6 281.4L184.4 231.8L203.9 281.7ZM193.9 291.1L142.7 269.9L193.5 292ZM216.3 280.7L227.9 226.2L214.6 280.3ZM201.9 284.7L170.8 241.5L200.9 285.4ZM194.3 280.1L177.6 263L193.5 280.8ZM214.6 281.7L221.9 233.3L213.4 281.5ZM188.6 291.1L159.9 282.9L188.1 292.6Z" fill="#ffde17"/>
</g>
<radialGradient id="rgar" gradientUnits="userSpaceOnUse" cx="271.2" cy="299" r="66"><stop offset="0" stop-color="#1a1a10" stop-opacity="0"/><stop offset="0.27" stop-color="#1a1a10" stop-opacity="0"/><stop offset="0.5" stop-color="#15150f" stop-opacity="0.6"/><stop offset="0.72" stop-color="#000" stop-opacity="1"/><stop offset="1" stop-color="#000" stop-opacity="1"/></radialGradient>
<path d="M271.2 299 L379.8 281.8 L376.9 268.7 L372.5 256 L366.5 244 L359 232.8 L350.3 222.6 L340.4 213.5 L329.5 205.7 L317.7 199.3 L305.2 194.4 L292.2 191 L278.9 189.3 L265.4 189.2 L252.1 190.7Z" fill="url(#rgar)"/>
<g clip-path="url(#csa1)">
<clipPath id="csa1"><path d="M271.2 299 L379.8 281.8 L376.9 268.7 L372.5 256 L366.5 244 L359 232.8 L350.3 222.6 L340.4 213.5 L329.5 205.7 L317.7 199.3 L305.2 194.4 L292.2 191 L278.9 189.3 L265.4 189.2 L252.1 190.7Z"/></clipPath>
<path d="M305.9 293L380.4 286.2L378.4 274.2ZM304.5 291.3L379.4 279.4L377.1 269.2ZM304.2 290L378.6 275.3L375.8 264.9ZM295.5 290.1L375.9 265.4L372.8 256.8ZM308.7 284.5L375.6 264.5L371.7 254.2ZM311 281.2L373.9 259.7L368.9 248.5ZM302.9 281.4L369.3 249.3L365.2 241.9ZM301.1 281.6L368.2 247.1L364.2 240.2ZM295.1 282.9L364.7 241L360.3 234.5ZM297.1 278.9L361.6 236.3L354.4 227.1ZM299 274.8L357.4 230.6L350.8 223ZM294.8 275.7L352.6 225.1L346.3 218.6ZM300.2 266L348.1 220.4L339.3 212.6ZM290.3 275.5L343.9 216.4L337.1 210.9ZM286.6 278.8L342.2 215L333.1 208.1ZM294 265L336.3 210.3L328.4 205ZM291.1 263.2L327.9 204.7L321.2 201ZM291.1 261.8L327.5 204.5L318.7 199.8ZM283.6 269.5L317.4 199.2L310 196.1ZM285.2 262L314.3 197.8L305.9 194.6ZM281.3 270.1L313.2 197.3L301.6 193.3ZM277.6 273.4L302.3 193.5L293.7 191.3ZM276.9 274.4L301.5 193.3L290.3 190.7ZM277.1 264.3L294.5 191.5L284.8 189.8ZM275.6 260.6L287.8 190.3L279.6 189.3ZM272.2 272.7L280 189.4L270.3 189ZM271.3 269.6L277.9 189.2L265.5 189.1ZM268.8 269L268.3 189L256.4 190ZM267.9 267.3L265.7 189.1L254 190.4ZM266.5 273.4L257.6 189.8L245.4 192.1ZM265.1 270.5L253.7 190.4L242.5 192.8Z" fill="#0a0a0a" opacity="1"/>
<path d="M280 275.8L298.2 233.7L281.4 276.4ZM274.7 280.2L286.5 223.3L275.3 280.3ZM268.4 284.3L262.2 232.2L270 284.1ZM283 282.3L303 256.7L284 283ZM295.2 294.2L322.2 289.8L295.4 295.1ZM272.8 283.8L279 249.9L274.4 284.1ZM280.3 276.8L290.1 254.3L280.8 277ZM291.8 286.7L316.6 274.2L292.7 288.3ZM288.3 285.7L334.6 252.6L289.1 286.7ZM293 286.5L339.8 262.1L293.7 287.7ZM269.9 283.5L268.3 244.3L270.9 283.4ZM290.2 290.5L314 281.1L290.6 291.4ZM288.2 295.7L338.7 287.9L288.3 296.7ZM272.1 279.7L275.5 237.8L273.1 279.8ZM273.9 285.4L282.9 254.5L275.6 285.8ZM275.1 276.4L284.8 225.8L275.7 276.5ZM281.3 289L318.3 254.4L281.7 289.5ZM291.3 288.7L341.6 264.6L291.7 289.5ZM268.7 281.3L262.5 221.6L269.7 281.2ZM282.7 279.7L309 237.8L283.3 280ZM273.5 274.2L279.1 224.5L274.1 274.3ZM294.4 291L324.8 282L294.8 292.2ZM283.9 287.2L329.6 248.4L284.7 288.1ZM283 289.1L310.5 267.4L283.4 289.6ZM274.8 285.3L293.5 222.3L275.5 285.5ZM267.3 283L258.3 237.1L268.4 282.8ZM278.6 281.9L302.6 232.3L279.6 282.4ZM290 293.9L345.8 280.1L290.2 294.5ZM271.4 274.1L273.1 250.3L272.9 274.1ZM277.8 281.4L298 231.8L278.5 281.7ZM288.5 291.1L339.7 269.9L288.9 292ZM266.1 280.7L254.5 226.2L267.8 280.3ZM280.5 284.7L311.6 241.5L281.5 285.4ZM288.1 280.1L304.8 263L288.9 280.8ZM267.8 281.7L260.5 233.3L269 281.5ZM293.8 291.1L322.5 282.9L294.3 292.6Z" fill="#ffde17"/>
</g>
<path d="M175.6 316.2C173.2 322 170.7 326.5 168 330.8L169.5 333C170.8 337 172 341 173 345C174.4 350 175.6 355 176.5 360C183.2 364 189.2 369 193.7 374L191.2 357L184 316.2Z" fill="url(#mY)" stroke="#6f6f5a" stroke-width=".6"/>
<path d="M306.8 316.2C309.2 322 311.7 326.5 314.4 330.8L312.9 333C311.6 337 310.4 341 309.4 345C308 350 306.8 355 305.9 360C299.2 364 293.2 369 288.7 374L291.2 357L298.4 316.2Z" fill="url(#mY)" stroke="#6f6f5a" stroke-width=".6"/>
<path d="M214.8 473.6L214.8 410C214.6 400 212.2 392 208.4 388C209.2 385 212.2 383.5 215.2 383.5L267.2 383.5C270.2 383.5 273.2 385 274 388C270.2 392 267.8 400 267.6 410L267.6 473.6Z" fill="url(#mY)" stroke="#6f6f5a" stroke-width=".7"/>
<path d="M176.5 358C191.2 367 205.2 378 208.4 388" fill="none" stroke="#6f6f5a" stroke-width=".7"/>
<path d="M177.2 303.5C186.2 302 197.2 299 205.2 296.5L220.2 273" fill="none" stroke="#6f6f5a" stroke-width=".5" stroke-dasharray="3 1" opacity=".8"/>
<path d="M182.2 306.5L184 316.2" fill="none" stroke="#6f6f5a" stroke-width=".6"/>
<path d="M213.2 284L241.2 307.5" fill="none" stroke="#6f6f5a" stroke-width=".5" opacity=".8"/>
<path d="M305.9 358C291.2 367 277.2 378 274 388" fill="none" stroke="#6f6f5a" stroke-width=".7"/>
<path d="M305.2 303.5C296.2 302 285.2 299 277.2 296.5L262.2 273" fill="none" stroke="#6f6f5a" stroke-width=".5" stroke-dasharray="3 1" opacity=".8"/>
<path d="M300.2 306.5L298.4 316.2" fill="none" stroke="#6f6f5a" stroke-width=".6"/>
<path d="M269.2 284L241.2 307.5" fill="none" stroke="#6f6f5a" stroke-width=".5" opacity=".8"/>
<path d="M181.9 493.7C189.2 482 201.2 475 214.2 473.6L234.4 473.6C234.6 480 235.2 487 235.9 493.7Z" fill="#a7a9ac" stroke="#6f6f5a" stroke-width=".5"/>
<path d="M300.5 493.7C293.2 482 281.2 475 268.2 473.6L248 473.6C247.8 480 247.2 487 246.5 493.7Z" fill="#a7a9ac" stroke="#6f6f5a" stroke-width=".5"/>
<path d="M234.6 473.8L247.8 473.8L246.4 494.5L236 494.5Z" fill="#fff"/>
<path d="M220.6 257C220.9 264 222.2 270 227.2 276L241.2 289.7L255.2 276C260.2 270 261.5 264 261.8 257Q241.2 262 220.6 257Z" fill="#fff" stroke="#6f6f5a" stroke-width=".5"/>
</g>
<path d="M241.2 249.3C233.2 249.3 225.2 247.6 219.1 245.1C211.2 246.8 201.2 249 194 250.4C183.2 252.6 173.2 255 166 257.4C161.2 259.5 158.7 262 157.6 264.4C155.2 268.5 154 273 153.7 277C153.3 281 153.2 285 153.4 288.8C153.7 292 154.4 295 155.5 297.2C159.2 296.8 163.2 296.4 167.4 296.5C169.2 297 171.2 297.8 173 298.6C175.7 300 177 302.5 177.2 305C177.4 310 176.6 314 175 317.5C173.2 322 170.7 326.5 168 330.8L169.5 333C170.8 337 172 341 173 345C174.4 350 175.6 355 176.5 360C179.7 400 181.2 450 181.9 493.7L300.5 493.7C301.2 450 302.7 400 305.9 360C306.8 355 308 350 309.4 345C310.4 341 311.6 337 312.9 333L314.4 330.8C311.7 326.5 309.2 322 307.4 317.5C305.8 314 305 310 305.2 305C305.4 302.5 306.7 300 309.4 298.6C311.2 297.8 313.2 297 315 296.5C319.2 296.4 323.2 296.8 326.9 297.2C328 295 328.7 292 329 288.8C329.2 285 329.1 281 328.7 277C328.4 273 327.2 268.5 324.8 264.4C323.7 262 321.2 259.5 316.4 257.4C309.2 255 299.2 252.6 288.4 250.4C281.2 249 271.2 246.8 263.3 245.1C257.2 247.6 249.2 249.3 241.2 249.3Z" fill="none" stroke="#6f6f5a" stroke-width=".6"/>
<clipPath id="cbb"><path d="M431.2 249.3C423.2 249.3 415.2 247.6 409.1 245.1C401.2 246.8 391.2 249 384 250.4C373.2 252.6 363.2 255 356 257.4C351.2 259.5 348.7 262 347.6 264.4C345.2 268.5 344 273 343.7 277C343.3 281 343.2 285 343.4 288.8C343.7 292 344.4 295 345.5 297.2C349.2 296.8 353.2 296.4 357.4 296.5C359.2 297 361.2 297.8 363 298.6C365.7 300 367 302.5 367.2 305C367.4 310 366.6 314 365 317.5C363.2 322 360.7 326.5 358 330.8L359.5 333C360.8 337 362 341 363 345C364.4 350 365.6 355 366.5 360C369.7 400 371.2 450 371.9 493.7L490.5 493.7C491.2 450 492.7 400 495.9 360C496.8 355 498 350 499.4 345C500.4 341 501.6 337 502.9 333L504.4 330.8C501.7 326.5 499.2 322 497.4 317.5C495.8 314 495 310 495.2 305C495.4 302.5 496.7 300 499.4 298.6C501.2 297.8 503.2 297 505 296.5C509.2 296.4 513.2 296.8 516.9 297.2C518 295 518.7 292 519 288.8C519.2 285 519.1 281 518.7 277C518.4 273 517.2 268.5 514.8 264.4C513.7 262 511.2 259.5 506.4 257.4C499.2 255 489.2 252.6 478.4 250.4C471.2 249 461.2 246.8 453.3 245.1C447.2 247.6 439.2 249.3 431.2 249.3Z"/></clipPath>
<path d="M431.2 249.3C423.2 249.3 415.2 247.6 409.1 245.1C401.2 246.8 391.2 249 384 250.4C373.2 252.6 363.2 255 356 257.4C351.2 259.5 348.7 262 347.6 264.4C345.2 268.5 344 273 343.7 277C343.3 281 343.2 285 343.4 288.8C343.7 292 344.4 295 345.5 297.2C349.2 296.8 353.2 296.4 357.4 296.5C359.2 297 361.2 297.8 363 298.6C365.7 300 367 302.5 367.2 305C367.4 310 366.6 314 365 317.5C363.2 322 360.7 326.5 358 330.8L359.5 333C360.8 337 362 341 363 345C364.4 350 365.6 355 366.5 360C369.7 400 371.2 450 371.9 493.7L490.5 493.7C491.2 450 492.7 400 495.9 360C496.8 355 498 350 499.4 345C500.4 341 501.6 337 502.9 333L504.4 330.8C501.7 326.5 499.2 322 497.4 317.5C495.8 314 495 310 495.2 305C495.4 302.5 496.7 300 499.4 298.6C501.2 297.8 503.2 297 505 296.5C509.2 296.4 513.2 296.8 516.9 297.2C518 295 518.7 292 519 288.8C519.2 285 519.1 281 518.7 277C518.4 273 517.2 268.5 514.8 264.4C513.7 262 511.2 259.5 506.4 257.4C499.2 255 489.2 252.6 478.4 250.4C471.2 249 461.2 246.8 453.3 245.1C447.2 247.6 439.2 249.3 431.2 249.3Z" fill="#ffde17"/>
<g clip-path="url(#cbb)">
<clipPath id="czb"><path d="M331.2 240H531.2V300H495.2V287H367.2V300H331.2Z"/></clipPath>
<path d="M366.7 287L367.2 305C367.4 310 366.6 314 365 317.5C363.2 322 360.7 326.5 358 330.8L359.5 333C360.8 337 362 341 363 345C364.4 350 365.6 355 367 363C379.2 370 392.2 382 394.7 396L395 493.7L467.4 493.7L467.7 396C470.2 382 483.2 370 495.4 363C496.8 355 498 350 499.4 345C500.4 341 501.6 337 502.9 333L504.4 330.8C501.7 326.5 499.2 322 497.4 317.5C495.8 314 495 310 495.2 305L495.7 287Z" fill="url(#mY)" stroke="#6f6f5a" stroke-width=".6"/>
<path d="M431.2 287L375.2 287L380 366.5L395.2 372.7L431.2 372.7L431.2 372.7L467.2 372.7L482.4 366.5L487.2 287L431.2 287Z" fill="#ffde17" stroke="#6f6f5a" stroke-width=".6"/>
<g clip-path="url(#czb)" fill="none" stroke="#0a0a0a" stroke-linejoin="miter" stroke-miterlimit="8"><path d="M339.2 257.6L360.6 248.8L345.1 251.3L373.3 240.7L357.2 243.3L378.9 234.5L358.9 237.6L382.5 227.6L361.2 230.3L387 218.6L374.6 219.9L399.5 210.4L386.4 212.3L419.1 199.6" stroke-width="1.6"/><path d="M339.2 261.3L361.2 254.4L347.1 255.2L374.5 246.2L356.7 247.5L381.8 238.2L362.9 239.9L392.4 229.6L371.6 230.8L396.5 221.2L383.3 222.3L415.8 211.9" stroke-width="1.5"/><path d="M339.2 263.1L369 253.9L353.9 253.9L384.2 245.3L367.6 245L403.4 235.1" stroke-width="1.7"/><path d="M339.2 266.1L375.9 256.7L361.1 256.4L393.2 250L376.5 249.9L400 245.2L380.3 245L405.6 239.4" stroke-width="1.9"/><path d="M339.2 269.2L374.4 261.1L353.8 260.2L381.9 254.7L361.1 252.8L385.2 248.4L370.9 247.8L400 241.6" stroke-width="1.3"/><path d="M339.2 272L369.7 266L350.9 264.1L382.2 258.5L369.8 256.9L403.7 250.4" stroke-width="1.8"/><path d="M339.2 275.8L371.2 272.8L358.6 271.3L383.1 268.5L370.6 267.2L394.9 264.9" stroke-width="1.4"/><path d="M339.2 278.1L363.6 277.3L348.4 274.2L372.3 272.4L350.9 267.8L380.6 267.2L367.8 264.6L394 262.7" stroke-width="1.2"/><path d="M339.2 281L363.5 280.9L351.7 277.7L389.3 276.7L370.9 272.2L398.8 272.7" stroke-width="1.8"/><path d="M339.2 285.1L364.8 285.2L344 278.5L378.9 278.7L360.2 273.5L390.4 274.6L378.6 271.5L405 272.7" stroke-width="1.7"/><path d="M339.2 288.9L377 289.5L362 285L387.6 286.7L374.2 282.4L410.6 283.2" stroke-width="1.5"/><path d="M339.2 291.3L371.7 294L353.3 286.5L382.7 290.4" stroke-width="1.8"/><path d="M339.2 293.7L367.2 298.2L347.7 289.2L372 293.6L359.8 287.8L394.1 294" stroke-width="1.8"/><path d="M339.2 298L369.3 304.4L358.5 298.8L390.4 304.7" stroke-width="1.9"/></g>
<g clip-path="url(#czb)" fill="none" stroke="#0a0a0a" stroke-linejoin="miter" stroke-miterlimit="8"><path d="M523.2 257.6L501.8 248.8L517.3 251.3L489.1 240.7L505.2 243.3L483.5 234.5L503.5 237.6L479.9 227.6L501.2 230.3L475.4 218.6L487.8 219.9L462.9 210.4L476 212.3L443.3 199.6" stroke-width="1.6"/><path d="M523.2 261.3L501.2 254.4L515.3 255.2L487.9 246.2L505.7 247.5L480.6 238.2L499.5 239.9L470 229.6L490.8 230.8L465.9 221.2L479.1 222.3L446.6 211.9" stroke-width="1.5"/><path d="M523.2 263.1L493.4 253.9L508.5 253.9L478.2 245.3L494.8 245L459 235.1" stroke-width="1.7"/><path d="M523.2 266.1L486.5 256.7L501.3 256.4L469.2 250L485.9 249.9L462.4 245.2L482.1 245L456.8 239.4" stroke-width="1.9"/><path d="M523.2 269.2L488 261.1L508.6 260.2L480.5 254.7" stroke-width="1.9"/><path d="M523.2 273.9L497.8 269.7L514.6 268.3L488.7 264.4L504.9 263.3L474.5 256.7" stroke-width="1.7"/><path d="M523.2 276L500.5 272.9L520 269.4L485.4 265.9L501.3 263.9L469.3 261.4" stroke-width="1.1"/><path d="M523.2 278.4L500.4 277L513.8 275.1L486 273.3L506.5 269.8L482.2 267.8" stroke-width="1.3"/><path d="M523.2 281.7L485.4 279.6L502 276.7L478.4 275.5" stroke-width="1.3"/><path d="M523.2 285.7L486 285L499 281.7L476.6 281.3" stroke-width="2.0"/><path d="M523.2 288.7L495.4 291.1L514.1 284.8L479.7 287.4" stroke-width="1.2"/><path d="M523.2 291.6L488.5 295.2L506.6 288.2L476.6 292.3L488.1 288.1L461.9 291.8" stroke-width="1.7"/><path d="M523.2 294.9L485.6 298.6L500.1 292.9L474.8 296.8L487.7 291.3L451.5 295.1" stroke-width="1.5"/><path d="M523.2 297.3L491.1 302.7L508.7 293.7L479.8 300.1" stroke-width="1.8"/></g>
<path d="M394.9 392.5 H467.5" stroke="#6f6f5a" stroke-width=".6"/>
<path d="M380 366.5L374.2 372" stroke="#6f6f5a" stroke-width=".6"/>
<path d="M482.4 366.5L488.2 372" stroke="#6f6f5a" stroke-width=".6"/>
<path d="M398.3 247.4C407.2 255 421.2 258.8 431.2 258.8C441.2 258.8 455.2 255 464.1 247.4" fill="none" stroke="#6f6f5a" stroke-width=".6"/>
<path d="M409.1 245.1L416.7 253.5" fill="none" stroke="#6f6f5a" stroke-width=".6"/>
<path d="M453.3 245.1L445.7 253.5" fill="none" stroke="#6f6f5a" stroke-width=".6"/>
<path d="M424.3 495 V474.5 A6.9 6.9 0 0 1 438.09999999999997 474.5 V495 Z" fill="#fff" stroke="#6f6f5a" stroke-width=".6"/>
</g>
<path d="M431.2 249.3C423.2 249.3 415.2 247.6 409.1 245.1C401.2 246.8 391.2 249 384 250.4C373.2 252.6 363.2 255 356 257.4C351.2 259.5 348.7 262 347.6 264.4C345.2 268.5 344 273 343.7 277C343.3 281 343.2 285 343.4 288.8C343.7 292 344.4 295 345.5 297.2C349.2 296.8 353.2 296.4 357.4 296.5C359.2 297 361.2 297.8 363 298.6C365.7 300 367 302.5 367.2 305C367.4 310 366.6 314 365 317.5C363.2 322 360.7 326.5 358 330.8L359.5 333C360.8 337 362 341 363 345C364.4 350 365.6 355 366.5 360C369.7 400 371.2 450 371.9 493.7L490.5 493.7C491.2 450 492.7 400 495.9 360C496.8 355 498 350 499.4 345C500.4 341 501.6 337 502.9 333L504.4 330.8C501.7 326.5 499.2 322 497.4 317.5C495.8 314 495 310 495.2 305C495.4 302.5 496.7 300 499.4 298.6C501.2 297.8 503.2 297 505 296.5C509.2 296.4 513.2 296.8 516.9 297.2C518 295 518.7 292 519 288.8C519.2 285 519.1 281 518.7 277C518.4 273 517.2 268.5 514.8 264.4C513.7 262 511.2 259.5 506.4 257.4C499.2 255 489.2 252.6 478.4 250.4C471.2 249 461.2 246.8 453.3 245.1C447.2 247.6 439.2 249.3 431.2 249.3Z" fill="none" stroke="#6f6f5a" stroke-width=".6"/>
<clipPath id="cbc"><path d="M653.8 249.3C645.8 249.3 637.8 247.6 631.7 245.1C623.8 246.8 613.8 249 606.6 250.4C595.8 252.6 585.8 255 578.6 257.4C573.8 259.5 571.3 262 570.2 264.4C567.8 268.5 566.6 273 566.3 277C565.9 281 565.8 285 566 288.8C566.3 292 567 295 568.1 297.2C571.8 296.8 575.8 296.4 580 296.5C581.8 297 583.8 297.8 585.6 298.6C588.3 300 589.6 302.5 589.8 305C590 310 589.2 314 587.6 317.5C585.8 322 583.3 326.5 580.6 330.8L582.1 333C583.4 337 584.6 341 585.6 345C587 350 588.2 355 589.1 360C592.3 400 593.8 450 594.5 493.7L713.1 493.7C713.8 450 715.3 400 718.5 360C719.4 355 720.6 350 722 345C723 341 724.2 337 725.5 333L727 330.8C724.3 326.5 721.8 322 720 317.5C718.4 314 717.6 310 717.8 305C718 302.5 719.3 300 722 298.6C723.8 297.8 725.8 297 727.6 296.5C731.8 296.4 735.8 296.8 739.5 297.2C740.6 295 741.3 292 741.6 288.8C741.8 285 741.7 281 741.3 277C741 273 739.8 268.5 737.4 264.4C736.3 262 733.8 259.5 729 257.4C721.8 255 711.8 252.6 701 250.4C693.8 249 683.8 246.8 675.9 245.1C669.8 247.6 661.8 249.3 653.8 249.3Z"/></clipPath>
<path d="M653.8 249.3C645.8 249.3 637.8 247.6 631.7 245.1C623.8 246.8 613.8 249 606.6 250.4C595.8 252.6 585.8 255 578.6 257.4C573.8 259.5 571.3 262 570.2 264.4C567.8 268.5 566.6 273 566.3 277C565.9 281 565.8 285 566 288.8C566.3 292 567 295 568.1 297.2C571.8 296.8 575.8 296.4 580 296.5C581.8 297 583.8 297.8 585.6 298.6C588.3 300 589.6 302.5 589.8 305C590 310 589.2 314 587.6 317.5C585.8 322 583.3 326.5 580.6 330.8L582.1 333C583.4 337 584.6 341 585.6 345C587 350 588.2 355 589.1 360C592.3 400 593.8 450 594.5 493.7L713.1 493.7C713.8 450 715.3 400 718.5 360C719.4 355 720.6 350 722 345C723 341 724.2 337 725.5 333L727 330.8C724.3 326.5 721.8 322 720 317.5C718.4 314 717.6 310 717.8 305C718 302.5 719.3 300 722 298.6C723.8 297.8 725.8 297 727.6 296.5C731.8 296.4 735.8 296.8 739.5 297.2C740.6 295 741.3 292 741.6 288.8C741.8 285 741.7 281 741.3 277C741 273 739.8 268.5 737.4 264.4C736.3 262 733.8 259.5 729 257.4C721.8 255 711.8 252.6 701 250.4C693.8 249 683.8 246.8 675.9 245.1C669.8 247.6 661.8 249.3 653.8 249.3Z" fill="#00aeef"/>
<g clip-path="url(#cbc)">
<radialGradient id="rgcl" gradientUnits="userSpaceOnUse" cx="619.8" cy="296" r="60"><stop offset="0" stop-color="#5aa6cc" stop-opacity="0"/><stop offset="0.08" stop-color="#5aa6cc" stop-opacity="0.0"/><stop offset="0.26" stop-color="#7f9cae" stop-opacity="0.95"/><stop offset="0.46" stop-color="#c48a64" stop-opacity="1"/><stop offset="0.6" stop-color="#f26522" stop-opacity="1"/><stop offset="0.76" stop-color="#ed1c24" stop-opacity="1"/><stop offset="1" stop-color="#ed1c24" stop-opacity="1"/></radialGradient>
<path d="M619.8 296 L524.5 351 L518.5 339 L514.1 326.3 L511.2 313.2 L509.9 299.8 L510.2 286.4 L512.2 273.1 L515.8 260.2 L520.9 247.8 L527.5 236.1 L535.5 225.3 L544.8 215.6 L555.1 207 L566.5 199.8 L578.6 194 L591.3 189.7 L604.5 187.1 L617.9 186 L631.3 186.6 L644.5 188.8 L657.4 192.6 L669.7 198 L681.3 204.8 L692 213 L701.5 222.4Z" fill="url(#rgcl)"/>
<g clip-path="url(#csc0)">
<clipPath id="csc0"><path d="M619.8 296 L524.5 351 L518.5 339 L514.1 326.3 L511.2 313.2 L509.9 299.8 L510.2 286.4 L512.2 273.1 L515.8 260.2 L520.9 247.8 L527.5 236.1 L535.5 225.3 L544.8 215.6 L555.1 207 L566.5 199.8 L578.6 194 L591.3 189.7 L604.5 187.1 L617.9 186 L631.3 186.6 L644.5 188.8 L657.4 192.6 L669.7 198 L681.3 204.8 L692 213 L701.5 222.4Z"/></clipPath>
<path d="M600.5 306.8L526.8 354.8L520.9 344.2ZM600.8 305.3L523.3 348.9L518.7 339.5ZM600.4 304.5L521.4 345.1L517.1 335.3ZM606.8 300.4L517.2 335.8L514.3 327.1ZM594.5 304.1L516.9 334.9L513.5 324.4ZM591.1 303.6L515.2 330.1L512.1 318.2ZM597.1 300L512.3 319.1L510.8 310.8ZM598.5 299.3L511.8 316.7L510.5 308.8ZM603.5 297.5L510.7 309.7L510 301.9ZM599.9 296.4L510.1 304.2L509.9 292.5ZM596.3 295.2L509.8 297.1L510.2 287ZM599.7 294L510 289.8L510.9 280.8ZM590.3 291L510.5 283.3L512.5 271.7ZM602.5 292.3L511.4 277.6L513.2 269ZM606.9 292.8L511.8 275.4L514.5 264.3ZM593.8 287.9L513.4 268.1L516.2 258.9ZM594.5 285.8L516.4 258.4L519.3 251.3ZM593.6 285L516.6 257.9L520.4 248.8ZM602.9 286.9L521.1 247.5L524.9 240.4ZM597.3 282.9L522.6 244.4L527.2 236.7ZM604.5 286.5L523.2 243.4L529.7 233ZM608.5 287.5L529.2 233.6L534.5 226.5ZM609.5 287.9L529.7 232.9L536.8 223.8ZM603.2 281.4L534 227.1L540.5 219.7ZM601.8 278.4L538.5 222L544.3 216ZM610.5 285.4L543.9 216.3L551.3 210ZM609.1 282.9L545.5 214.9L555.1 207.1ZM609.9 281.6L552.8 208.7L562.7 202ZM609.4 280L554.9 207.2L564.8 200.7ZM613.2 283.9L561.7 202.6L572.6 196.7ZM612.3 281.1L565.1 200.6L575.2 195.4ZM612.9 280.1L572.4 196.7L579.8 193.5ZM611.7 275L576.2 195L584.5 191.8ZM614.5 278.1L584.1 192L593.5 189.2ZM615.4 275.8L591.4 189.7L601.6 187.5ZM617.3 280.9L597.7 188.2L606 186.9ZM616.9 269.4L603.6 187.2L612.4 186.2ZM617.5 270.8L603.7 187.2L615.9 186.1ZM618.7 266.9L609.8 186.5L621.7 186ZM620.6 276.4L620 186L628.1 186.3ZM621.6 266.7L622.3 186L631.1 186.6ZM622.3 279.6L630.7 186.5L642.2 188.3ZM623.2 279.1L637.5 187.4L645.9 189.1ZM623.2 283.2L643.9 188.7L652.4 190.9ZM628.1 269.9L647.9 189.7L658 192.9ZM629.5 269.2L653 191.1L661.2 194.1ZM626.2 280.4L656.7 192.4L665.8 196.1ZM626.3 282.3L662.6 194.7L671.2 198.7ZM627 283.6L670.7 198.5L678.9 203.2ZM636.4 271.4L676.9 202L685.8 208ZM633.2 277.9L681.9 205.2L688.7 210.2ZM627.3 286.3L682.2 205.4L691.7 212.8ZM639.7 274.5L691.6 212.7L697.3 218ZM634.6 281.6L694.5 215.3L702.3 223.3ZM642 275.9L698.6 219.3L704 225.2Z" fill="#f15a29" opacity=".9"/>
<path d="M576.3 318.9L524.7 351.4L520.3 342.9ZM580.4 314.5L521.9 346.2L518.6 339.2ZM585.6 307.6L516.8 334.5L514.6 328ZM583.4 305L514 326.2L512.1 318.5ZM585 302.2L512.3 319.5L510.8 310.8ZM577.7 298.8L510.4 307.6L509.8 298.7ZM584.9 295.3L509.8 298.3L510 289.2ZM575.6 290.6L510.2 286.9L511.2 278.4ZM581 286.9L511.8 275.3L513.8 266.5ZM578.4 283.7L513.2 268.9L515.6 260.6ZM586.9 283.1L516 259.5L518.9 252.1ZM581.3 275.8L520.7 248.3L524.3 241.3ZM588.7 276.1L525.4 239.6L529 233.8ZM582.1 267.8L529.7 232.9L533.8 227.4ZM593 272.5L535 225.9L539.2 221.1ZM590.3 264.5L541.2 219L548 212.7ZM595.3 264.5L549.4 211.5L555.1 207ZM594.6 257L556.7 205.9L563.6 201.5ZM603.1 264.4L564.3 201L572.4 196.7ZM602.5 252L576.3 195L582.8 192.4ZM605.7 249.4L583.9 192L591.9 189.6ZM613.1 259.9L594.8 188.9L604.5 187.1ZM614 255.7L601.2 187.6L607.3 186.7ZM619.2 251L613.4 186.2L623.3 186.1ZM623.5 247L624 186.1L632.2 186.7ZM627.8 250.7L635.1 187.1L642.5 188.4ZM630.2 257.3L645 188.9L651.6 190.7ZM632.2 256.4L649.4 190.1L656 192.1ZM640.7 251.4L663.3 195L669.6 197.9ZM639.5 258.4L667.9 197.1L673.9 200.2ZM646.2 257.1L678.5 203L684.4 207ZM650.2 258.3L685.7 207.9L691.8 212.9ZM653.2 261.1L692.4 213.4L699.1 219.8ZM654.5 267.4L702.2 223.1L707.1 229Z" fill="#ed1c24"/>
<path d="M585.1 269.2L561 253.1L583.8 271.1ZM594.6 273.4L561.1 244.9L594 274.2ZM603.7 275.1L574.3 242.5L601.8 276.7ZM588.9 277.3L568.6 266.8L588 279ZM577.4 287.4L562.7 285.4L577.2 288.8ZM600.6 277.1L577.9 258.1L599.1 278.8ZM585.8 270.8L574.8 263.4L585.3 271.5ZM580.2 281.1L564.9 277.3L579.3 283.6ZM584.7 280.7L546.7 266.2L584 282.5ZM578.2 280.9L545.5 271L577.5 282.9ZM601.8 275.2L579 251.5L600.7 276.2ZM584.8 285.1L568.1 281.1L584.4 286.5ZM589.9 289.9L549.9 283.5L589.6 291.4Z" fill="#ffe600"/>
</g>
<radialGradient id="rgcr" gradientUnits="userSpaceOnUse" cx="687.8" cy="296" r="60"><stop offset="0" stop-color="#5aa6cc" stop-opacity="0"/><stop offset="0.08" stop-color="#5aa6cc" stop-opacity="0.0"/><stop offset="0.26" stop-color="#7f9cae" stop-opacity="0.95"/><stop offset="0.46" stop-color="#c48a64" stop-opacity="1"/><stop offset="0.6" stop-color="#f26522" stop-opacity="1"/><stop offset="0.76" stop-color="#ed1c24" stop-opacity="1"/><stop offset="1" stop-color="#ed1c24" stop-opacity="1"/></radialGradient>
<path d="M687.8 296 L783.1 351 L789.1 339 L793.5 326.3 L796.4 313.2 L797.7 299.8 L797.4 286.4 L795.4 273.1 L791.8 260.2 L786.7 247.8 L780.1 236.1 L772.1 225.3 L762.8 215.6 L752.5 207 L741.1 199.8 L729 194 L716.3 189.7 L703.1 187.1 L689.7 186 L676.3 186.6 L663.1 188.8 L650.2 192.6 L637.9 198 L626.3 204.8 L615.6 213 L606.1 222.4Z" fill="url(#rgcr)"/>
<g clip-path="url(#csc1)">
<clipPath id="csc1"><path d="M687.8 296 L783.1 351 L789.1 339 L793.5 326.3 L796.4 313.2 L797.7 299.8 L797.4 286.4 L795.4 273.1 L791.8 260.2 L786.7 247.8 L780.1 236.1 L772.1 225.3 L762.8 215.6 L752.5 207 L741.1 199.8 L729 194 L716.3 189.7 L703.1 187.1 L689.7 186 L676.3 186.6 L663.1 188.8 L650.2 192.6 L637.9 198 L626.3 204.8 L615.6 213 L606.1 222.4Z"/></clipPath>
<path d="M707.1 306.8L780.8 354.8L786.7 344.2ZM706.8 305.3L784.3 348.9L788.9 339.5ZM707.2 304.5L786.2 345.1L790.5 335.3ZM700.8 300.4L790.4 335.8L793.3 327.1ZM713.1 304.1L790.7 334.9L794.1 324.4ZM716.5 303.6L792.4 330.1L795.5 318.2ZM710.5 300L795.3 319.1L796.8 310.8ZM709.1 299.3L795.8 316.7L797.1 308.8ZM704.1 297.5L796.9 309.7L797.6 301.9ZM707.7 296.4L797.5 304.2L797.7 292.5ZM711.3 295.2L797.8 297.1L797.4 287ZM707.9 294L797.6 289.8L796.7 280.8ZM717.3 291L797.1 283.3L795.1 271.7ZM705.1 292.3L796.2 277.6L794.4 269ZM700.7 292.8L795.8 275.4L793.1 264.3ZM713.8 287.9L794.2 268.1L791.4 258.9ZM713.1 285.8L791.2 258.4L788.3 251.3ZM714 285L791 257.9L787.2 248.8ZM704.7 286.9L786.5 247.5L782.7 240.4ZM710.3 282.9L785 244.4L780.4 236.7ZM703.1 286.5L784.4 243.4L777.9 233ZM699.1 287.5L778.4 233.6L773.1 226.5ZM698.1 287.9L777.9 232.9L770.8 223.8ZM704.4 281.4L773.6 227.1L767.1 219.7ZM705.8 278.4L769.1 222L763.3 216ZM697.1 285.4L763.7 216.3L756.3 210ZM698.5 282.9L762.1 214.9L752.5 207.1ZM697.7 281.6L754.8 208.7L744.9 202ZM698.2 280L752.7 207.2L742.8 200.7ZM694.4 283.9L745.9 202.6L735 196.7ZM695.3 281.1L742.5 200.6L732.4 195.4ZM694.7 280.1L735.2 196.7L727.8 193.5ZM695.9 275L731.4 195L723.1 191.8ZM693.1 278.1L723.5 192L714.1 189.2ZM692.2 275.8L716.2 189.7L706 187.5ZM690.3 280.9L709.9 188.2L701.6 186.9ZM690.7 269.4L704 187.2L695.2 186.2ZM690.1 270.8L703.9 187.2L691.7 186.1ZM688.9 266.9L697.8 186.5L685.9 186ZM687 276.4L687.6 186L679.5 186.3ZM686 266.7L685.3 186L676.5 186.6ZM685.3 279.6L676.9 186.5L665.4 188.3ZM684.4 279.1L670.1 187.4L661.7 189.1ZM684.4 283.2L663.7 188.7L655.2 190.9ZM679.5 269.9L659.7 189.7L649.6 192.9ZM678.1 269.2L654.6 191.1L646.4 194.1ZM681.4 280.4L650.9 192.4L641.8 196.1ZM681.3 282.3L645 194.7L636.4 198.7ZM680.6 283.6L636.9 198.5L628.7 203.2ZM671.2 271.4L630.7 202L621.8 208ZM674.4 277.9L625.7 205.2L618.9 210.2ZM680.3 286.3L625.4 205.4L615.9 212.8ZM667.9 274.5L616 212.7L610.3 218ZM673 281.6L613.1 215.3L605.3 223.3ZM665.6 275.9L609 219.3L603.6 225.2Z" fill="#f15a29" opacity=".9"/>
<path d="M731.3 318.9L782.9 351.4L787.3 342.9ZM727.2 314.5L785.7 346.2L789 339.2ZM722 307.6L790.8 334.5L793 328ZM724.2 305L793.6 326.2L795.5 318.5ZM722.6 302.2L795.3 319.5L796.8 310.8ZM729.9 298.8L797.2 307.6L797.8 298.7ZM722.7 295.3L797.8 298.3L797.6 289.2ZM732 290.6L797.4 286.9L796.4 278.4ZM726.6 286.9L795.8 275.3L793.8 266.5ZM729.2 283.7L794.4 268.9L792 260.6ZM720.7 283.1L791.6 259.5L788.7 252.1ZM726.3 275.8L786.9 248.3L783.3 241.3ZM718.9 276.1L782.2 239.6L778.6 233.8ZM725.5 267.8L777.9 232.9L773.8 227.4ZM714.6 272.5L772.6 225.9L768.4 221.1ZM717.3 264.5L766.4 219L759.6 212.7ZM712.3 264.5L758.2 211.5L752.5 207ZM713 257L750.9 205.9L744 201.5ZM704.5 264.4L743.3 201L735.2 196.7ZM705.1 252L731.3 195L724.8 192.4ZM701.9 249.4L723.7 192L715.7 189.6ZM694.5 259.9L712.8 188.9L703.1 187.1ZM693.6 255.7L706.4 187.6L700.3 186.7ZM688.4 251L694.2 186.2L684.3 186.1ZM684.1 247L683.6 186.1L675.4 186.7ZM679.8 250.7L672.5 187.1L665.1 188.4ZM677.4 257.3L662.6 188.9L656 190.7ZM675.4 256.4L658.2 190.1L651.6 192.1ZM666.9 251.4L644.3 195L638 197.9ZM668.1 258.4L639.7 197.1L633.7 200.2ZM661.4 257.1L629.1 203L623.2 207ZM657.4 258.3L621.9 207.9L615.8 212.9ZM654.4 261.1L615.2 213.4L608.5 219.8ZM653.1 267.4L605.4 223.1L600.5 229Z" fill="#ed1c24"/>
<path d="M722.5 269.2L746.6 253.1L723.8 271.1ZM713 273.4L746.5 244.9L713.6 274.2ZM703.9 275.1L733.3 242.5L705.8 276.7ZM718.7 277.3L739 266.8L719.6 279ZM730.2 287.4L744.9 285.4L730.4 288.8ZM707 277.1L729.7 258.1L708.5 278.8ZM721.8 270.8L732.8 263.4L722.3 271.5ZM727.4 281.1L742.7 277.3L728.3 283.6ZM722.9 280.7L760.9 266.2L723.6 282.5ZM729.4 280.9L762.1 271L730.1 282.9ZM705.8 275.2L728.6 251.5L706.9 276.2ZM722.8 285.1L739.5 281.1L723.2 286.5ZM717.7 289.9L757.7 283.5L718 291.4Z" fill="#ffe600"/>
</g>
<path d="M588.2 316.2C585.8 322 583.3 326.5 580.6 330.8L582.1 333C583.4 337 584.6 341 585.6 345C587 350 588.2 355 589.1 360C595.8 364 601.8 369 606.3 374L603.8 357L596.6 316.2Z" fill="url(#mB)" stroke="#4d6470" stroke-width=".6"/>
<path d="M719.4 316.2C721.8 322 724.3 326.5 727 330.8L725.5 333C724.2 337 723 341 722 345C720.6 350 719.4 355 718.5 360C711.8 364 705.8 369 701.3 374L703.8 357L711 316.2Z" fill="url(#mB)" stroke="#4d6470" stroke-width=".6"/>
<path d="M627.4 473.6L627.4 410C627.2 400 624.8 392 621 388C621.8 385 624.8 383.5 627.8 383.5L679.8 383.5C682.8 383.5 685.8 385 686.6 388C682.8 392 680.4 400 680.2 410L680.2 473.6Z" fill="url(#mB)" stroke="#4d6470" stroke-width=".7"/>
<path d="M589.1 358C603.8 367 617.8 378 621 388" fill="none" stroke="#4d6470" stroke-width=".7"/>
<path d="M589.8 303.5C598.8 302 609.8 299 617.8 296.5L632.8 273" fill="none" stroke="#4d6470" stroke-width=".5" stroke-dasharray="3 1" opacity=".8"/>
<path d="M594.8 306.5L596.6 316.2" fill="none" stroke="#4d6470" stroke-width=".6"/>
<path d="M625.8 284L653.8 307.5" fill="none" stroke="#4d6470" stroke-width=".5" opacity=".8"/>
<path d="M718.5 358C703.8 367 689.8 378 686.6 388" fill="none" stroke="#4d6470" stroke-width=".7"/>
<path d="M717.8 303.5C708.8 302 697.8 299 689.8 296.5L674.8 273" fill="none" stroke="#4d6470" stroke-width=".5" stroke-dasharray="3 1" opacity=".8"/>
<path d="M712.8 306.5L711 316.2" fill="none" stroke="#4d6470" stroke-width=".6"/>
<path d="M681.8 284L653.8 307.5" fill="none" stroke="#4d6470" stroke-width=".5" opacity=".8"/>
<path d="M564.3 287C565.3 292 566.3 295 568.1 297.2C571.8 296.8 575.8 296.4 580 296.5C581.8 297 583.8 297.8 585.6 298.6C587.3 299.5 588.3 300.5 589 301.8" fill="none" stroke="#662d91" stroke-width="4.6"/><path d="M583.3 297.6C584.3 298 584.8 298.2 585.6 298.6C588.3 300 589.6 302.5 589.8 305C590 310 589.2 314 587.6 317.5C585.8 322 583.3 326.5 579.6 332.3" fill="none" stroke="#662d91" stroke-width="8"/>
<path d="M743.3 287C742.3 292 741.3 295 739.5 297.2C735.8 296.8 731.8 296.4 727.6 296.5C725.8 297 723.8 297.8 722 298.6C720.3 299.5 719.3 300.5 718.6 301.8" fill="none" stroke="#662d91" stroke-width="4.6"/><path d="M724.3 297.6C723.3 298 722.8 298.2 722 298.6C719.3 300 718 302.5 717.8 305C717.6 310 718.4 314 720 317.5C721.8 322 724.3 326.5 728 332.3" fill="none" stroke="#662d91" stroke-width="8"/>
<path d="M594.5 493.7C601.8 482 613.8 475 626.8 473.6L647 473.6C647.2 480 647.8 487 648.5 493.7Z" fill="#a7a9ac" stroke="#4d6470" stroke-width=".5"/>
<path d="M713.1 493.7C705.8 482 693.8 475 680.8 473.6L660.6 473.6C660.4 480 659.8 487 659.1 493.7Z" fill="#a7a9ac" stroke="#4d6470" stroke-width=".5"/>
<path d="M647.2 473.8L660.4 473.8L659 494.5L648.6 494.5Z" fill="#fff"/>
<path d="M653.8 249.3C645.8 249.3 637.8 247.6 631.7 245.1L626.3 266L632.8 281L639.8 276C634.8 270 633.5 264 633.2 257Q653.8 262 674.4 257C674.1 264 672.8 270 667.8 276L674.8 281L681.3 266L675.9 245.1C669.8 247.6 661.8 249.3 653.8 249.3Z" fill="#ec008c"/>
<path d="M629.8 281L641.8 277L653.8 289.7L665.8 277L677.8 281L653.8 306.8Z" fill="#00a651"/>
<g fill="#00a651"><circle cx="638.1" cy="281.4" r="0.8"/><circle cx="627.7" cy="264.4" r="1.2"/><circle cx="639.4" cy="271.5" r="1.3"/><circle cx="632.8" cy="284.3" r="1.2"/><circle cx="669.3" cy="282.9" r="0.7"/><circle cx="625.7" cy="291.7" r="0.9"/><circle cx="666.9" cy="292.1" r="1.1"/><circle cx="679.1" cy="276.6" r="1.1"/><circle cx="676.5" cy="267.1" r="0.6"/><circle cx="636.8" cy="294.9" r="0.8"/><circle cx="644.9" cy="282.7" r="1.0"/><circle cx="678.1" cy="285.8" r="1.2"/><circle cx="675.2" cy="295.7" r="1.0"/><circle cx="633.6" cy="291.5" r="1.3"/></g><g fill="#ec008c"><circle cx="678.1" cy="282.2" r="1.1"/><circle cx="636.5" cy="290.6" r="1.0"/><circle cx="675" cy="295.7" r="0.6"/></g>
<g fill="#00aeef"><ellipse cx="635.9" cy="284.9" rx="0.6" ry="0.9" transform="rotate(-40 635.9 284.9)"/><ellipse cx="654.5" cy="297.5" rx="0.9" ry="1.1" transform="rotate(40 654.5 297.5)"/><ellipse cx="642.6" cy="289.7" rx="0.5" ry="0.9" transform="rotate(-40 642.6 289.7)"/><ellipse cx="641.9" cy="288.4" rx="0.6" ry="1.6" transform="rotate(-40 641.9 288.4)"/><ellipse cx="639" cy="284.9" rx="0.7" ry="0.7" transform="rotate(-40 639 284.9)"/><ellipse cx="657.1" cy="296.1" rx="0.6" ry="1.7" transform="rotate(40 657.1 296.1)"/><ellipse cx="663.6" cy="291.1" rx="0.9" ry="1.3" transform="rotate(40 663.6 291.1)"/><ellipse cx="643.1" cy="288" rx="0.6" ry="1.3" transform="rotate(-40 643.1 288)"/><ellipse cx="644.2" cy="292.4" rx="1.3" ry="1.2" transform="rotate(-40 644.2 292.4)"/><ellipse cx="670.2" cy="282.2" rx="1.1" ry="1.6" transform="rotate(40 670.2 282.2)"/><ellipse cx="657.1" cy="298.9" rx="0.8" ry="0.9" transform="rotate(40 657.1 298.9)"/><ellipse cx="633.1" cy="281.5" rx="1.3" ry="0.8" transform="rotate(-40 633.1 281.5)"/><ellipse cx="668.6" cy="289.1" rx="0.5" ry="1.8" transform="rotate(40 668.6 289.1)"/><ellipse cx="669.6" cy="283.8" rx="0.8" ry="0.8" transform="rotate(40 669.6 283.8)"/><ellipse cx="664.6" cy="288.5" rx="0.9" ry="0.7" transform="rotate(40 664.6 288.5)"/><ellipse cx="671.5" cy="281.4" rx="1.2" ry="1.2" transform="rotate(40 671.5 281.4)"/><ellipse cx="636.8" cy="284.7" rx="0.6" ry="0.6" transform="rotate(-40 636.8 284.7)"/><ellipse cx="636.3" cy="280.2" rx="0.8" ry="1.0" transform="rotate(-40 636.3 280.2)"/><ellipse cx="639" cy="288.6" rx="0.5" ry="1.8" transform="rotate(-40 639 288.6)"/><ellipse cx="658.4" cy="297.2" rx="0.9" ry="0.7" transform="rotate(40 658.4 297.2)"/><ellipse cx="646.1" cy="293.1" rx="0.8" ry="0.7" transform="rotate(-40 646.1 293.1)"/><ellipse cx="661.3" cy="294.1" rx="0.6" ry="1.7" transform="rotate(40 661.3 294.1)"/><ellipse cx="643.9" cy="288.6" rx="0.5" ry="0.7" transform="rotate(-40 643.9 288.6)"/><ellipse cx="671.4" cy="284.1" rx="0.5" ry="1.0" transform="rotate(40 671.4 284.1)"/><ellipse cx="668.1" cy="289.3" rx="1.0" ry="1.6" transform="rotate(40 668.1 289.3)"/><ellipse cx="662.7" cy="290.3" rx="1.0" ry="0.8" transform="rotate(40 662.7 290.3)"/><ellipse cx="640.3" cy="286.4" rx="1.3" ry="1.8" transform="rotate(-40 640.3 286.4)"/><ellipse cx="635.6" cy="283.4" rx="1.2" ry="1.6" transform="rotate(-40 635.6 283.4)"/><ellipse cx="647.6" cy="295.1" rx="1.4" ry="1.5" transform="rotate(-40 647.6 295.1)"/><ellipse cx="667.6" cy="284.6" rx="1.4" ry="1.6" transform="rotate(40 667.6 284.6)"/><ellipse cx="638.7" cy="285" rx="1.3" ry="1.2" transform="rotate(-40 638.7 285)"/><ellipse cx="647.9" cy="294" rx="0.8" ry="1.1" transform="rotate(-40 647.9 294)"/><ellipse cx="664.1" cy="287.1" rx="1.2" ry="0.9" transform="rotate(40 664.1 287.1)"/><ellipse cx="666.9" cy="289.5" rx="1.4" ry="0.9" transform="rotate(40 666.9 289.5)"/></g>
<path d="M633.2 257C633.5 264 634.8 270 639.8 276L653.8 289.7L667.8 276C672.8 270 674.1 264 674.4 257Q653.8 262 633.2 257Z" fill="#fff" stroke="#4d6470" stroke-width=".5"/>
</g>
<path d="M653.8 249.3C645.8 249.3 637.8 247.6 631.7 245.1C623.8 246.8 613.8 249 606.6 250.4C595.8 252.6 585.8 255 578.6 257.4C573.8 259.5 571.3 262 570.2 264.4C567.8 268.5 566.6 273 566.3 277C565.9 281 565.8 285 566 288.8C566.3 292 567 295 568.1 297.2C571.8 296.8 575.8 296.4 580 296.5C581.8 297 583.8 297.8 585.6 298.6C588.3 300 589.6 302.5 589.8 305C590 310 589.2 314 587.6 317.5C585.8 322 583.3 326.5 580.6 330.8L582.1 333C583.4 337 584.6 341 585.6 345C587 350 588.2 355 589.1 360C592.3 400 593.8 450 594.5 493.7L713.1 493.7C713.8 450 715.3 400 718.5 360C719.4 355 720.6 350 722 345C723 341 724.2 337 725.5 333L727 330.8C724.3 326.5 721.8 322 720 317.5C718.4 314 717.6 310 717.8 305C718 302.5 719.3 300 722 298.6C723.8 297.8 725.8 297 727.6 296.5C731.8 296.4 735.8 296.8 739.5 297.2C740.6 295 741.3 292 741.6 288.8C741.8 285 741.7 281 741.3 277C741 273 739.8 268.5 737.4 264.4C736.3 262 733.8 259.5 729 257.4C721.8 255 711.8 252.6 701 250.4C693.8 249 683.8 246.8 675.9 245.1C669.8 247.6 661.8 249.3 653.8 249.3Z" fill="none" stroke="#4d6470" stroke-width=".6"/>
<clipPath id="cbd"><path d="M872 249.3C864 249.3 856 247.6 849.9 245.1C842 246.8 832 249 824.8 250.4C814 252.6 804 255 796.8 257.4C792 259.5 789.5 262 788.4 264.4C786 268.5 784.8 273 784.5 277C784.1 281 784 285 784.2 288.8C784.5 292 785.2 295 786.3 297.2C790 296.8 794 296.4 798.2 296.5C800 297 802 297.8 803.8 298.6C806.5 300 807.8 302.5 808 305C808.2 310 807.4 314 805.8 317.5C804 322 801.5 326.5 798.8 330.8L800.3 333C801.6 337 802.8 341 803.8 345C805.2 350 806.4 355 807.3 360C810.5 400 812 450 812.7 493.7L931.3 493.7C932 450 933.5 400 936.7 360C937.6 355 938.8 350 940.2 345C941.2 341 942.4 337 943.7 333L945.2 330.8C942.5 326.5 940 322 938.2 317.5C936.6 314 935.8 310 936 305C936.2 302.5 937.5 300 940.2 298.6C942 297.8 944 297 945.8 296.5C950 296.4 954 296.8 957.7 297.2C958.8 295 959.5 292 959.8 288.8C960 285 959.9 281 959.5 277C959.2 273 958 268.5 955.6 264.4C954.5 262 952 259.5 947.2 257.4C940 255 930 252.6 919.2 250.4C912 249 902 246.8 894.1 245.1C888 247.6 880 249.3 872 249.3Z"/></clipPath>
<path d="M872 249.3C864 249.3 856 247.6 849.9 245.1C842 246.8 832 249 824.8 250.4C814 252.6 804 255 796.8 257.4C792 259.5 789.5 262 788.4 264.4C786 268.5 784.8 273 784.5 277C784.1 281 784 285 784.2 288.8C784.5 292 785.2 295 786.3 297.2C790 296.8 794 296.4 798.2 296.5C800 297 802 297.8 803.8 298.6C806.5 300 807.8 302.5 808 305C808.2 310 807.4 314 805.8 317.5C804 322 801.5 326.5 798.8 330.8L800.3 333C801.6 337 802.8 341 803.8 345C805.2 350 806.4 355 807.3 360C810.5 400 812 450 812.7 493.7L931.3 493.7C932 450 933.5 400 936.7 360C937.6 355 938.8 350 940.2 345C941.2 341 942.4 337 943.7 333L945.2 330.8C942.5 326.5 940 322 938.2 317.5C936.6 314 935.8 310 936 305C936.2 302.5 937.5 300 940.2 298.6C942 297.8 944 297 945.8 296.5C950 296.4 954 296.8 957.7 297.2C958.8 295 959.5 292 959.8 288.8C960 285 959.9 281 959.5 277C959.2 273 958 268.5 955.6 264.4C954.5 262 952 259.5 947.2 257.4C940 255 930 252.6 919.2 250.4C912 249 902 246.8 894.1 245.1C888 247.6 880 249.3 872 249.3Z" fill="#00aeef"/>
<g clip-path="url(#cbd)">
<rect x="777" y="240" width="190" height="47" fill="#0072bc"/>
<linearGradient id="lgd0" x1="0" x2="1" y1="0" y2="0"><stop offset="0" stop-color="#ed1c24"/><stop offset=".35" stop-color="#f7941d"/><stop offset=".75" stop-color="#f15a29"/><stop offset="1" stop-color="#f15a29" stop-opacity="0"/></linearGradient>
<rect x="777" y="244" width="37" height="60" fill="url(#lgd0)"/>
<linearGradient id="lgd1" x1="1" x2="0" y1="0" y2="0"><stop offset="0" stop-color="#ed1c24"/><stop offset=".35" stop-color="#f7941d"/><stop offset=".75" stop-color="#f15a29"/><stop offset="1" stop-color="#f15a29" stop-opacity="0"/></linearGradient>
<rect x="930" y="244" width="37" height="60" fill="url(#lgd1)"/>
<clipPath id="czd"><path d="M772 240H972V300H936V287H808V300H772Z"/></clipPath>
<path d="M807.5 287L808 305C808.2 310 807.4 314 805.8 317.5C804 322 801.5 326.5 798.8 330.8L800.3 333C801.6 337 802.8 341 803.8 345C805.2 350 806.4 355 807.8 363C820 370 833 382 835.5 396L835.8 493.7L908.2 493.7L908.5 396C911 382 924 370 936.2 363C937.6 355 938.8 350 940.2 345C941.2 341 942.4 337 943.7 333L945.2 330.8C942.5 326.5 940 322 938.2 317.5C936.6 314 935.8 310 936 305L936.5 287Z" fill="url(#mB)" stroke="#4d6470" stroke-width=".6"/>
<path d="M872 287L816 287L820.8 366.5L836 372.7L872 372.7L872 372.7L908 372.7L923.2 366.5L928 287L872 287Z" fill="#00aeef" stroke="#4d6470" stroke-width=".6"/>
<g clip-path="url(#czd)" fill="none" stroke="#e8212a" stroke-linejoin="miter" stroke-miterlimit="8"><path d="M780 257.6L801.4 248.8L785.9 251.3L814.1 240.7L798 243.3L819.7 234.5L799.7 237.6L823.3 227.6L802 230.3L827.8 218.6L815.4 219.9L840.3 210.4L827.2 212.3L859.9 199.6" stroke-width="1.6"/><path d="M780 261.3L802 254.4L787.9 255.2L815.3 246.2L797.5 247.5L822.6 238.2L803.7 239.9L833.2 229.6L812.4 230.8L837.3 221.2L824.1 222.3L856.6 211.9" stroke-width="1.5"/><path d="M780 263.1L809.8 253.9L794.7 253.9L825 245.3L808.4 245L844.2 235.1" stroke-width="1.7"/><path d="M780 266.1L816.7 256.7L801.9 256.4L834 250L817.3 249.9L840.8 245.2L821.1 245L846.4 239.4" stroke-width="1.9"/><path d="M780 269.2L815.2 261.1L794.6 260.2L822.7 254.7L801.9 252.8L826 248.4L811.7 247.8L840.8 241.6" stroke-width="1.3"/><path d="M780 272L810.5 266L791.7 264.1L823 258.5L810.6 256.9L844.5 250.4" stroke-width="1.8"/><path d="M780 275.8L812 272.8L799.4 271.3L823.9 268.5L811.4 267.2L835.7 264.9" stroke-width="1.4"/><path d="M780 278.1L804.4 277.3L789.2 274.2L813.1 272.4L791.7 267.8L821.4 267.2L808.6 264.6L834.8 262.7" stroke-width="1.2"/><path d="M780 281L804.3 280.9L792.5 277.7L830.1 276.7L811.7 272.2L839.6 272.7" stroke-width="1.8"/><path d="M780 285.1L805.6 285.2L784.8 278.5L819.7 278.7L801 273.5L831.2 274.6L819.4 271.5L845.8 272.7" stroke-width="1.7"/><path d="M780 288.9L817.8 289.5L802.8 285L828.4 286.7L815 282.4L851.4 283.2" stroke-width="1.5"/><path d="M780 291.3L812.5 294L794.1 286.5L823.5 290.4" stroke-width="1.8"/><path d="M780 293.7L808 298.2L788.5 289.2L812.8 293.6L800.6 287.8L834.9 294" stroke-width="1.8"/><path d="M780 298L810.1 304.4L799.3 298.8L831.2 304.7" stroke-width="1.9"/></g>
<g clip-path="url(#czd)"><path d="M796.4 277.6L783.9 271.4L795.7 278.8ZM806 292L776.3 290.3L805.7 295.1ZM805.3 280.1L783.6 266.4L804.6 281.1ZM811.1 279.4L789.3 262.1L809.3 281.4ZM792.5 283.4L783 281.5L791.9 285.5ZM800.6 275.2L783 263.9L799.5 276.8ZM794.9 288.2L779.4 286.5L794.4 290.7ZM806.5 284L786.1 274.6L805.7 285.5ZM793.6 282.6L775.7 276.9L793 284.1ZM809.6 272.6L798 260.3L808.1 273.8ZM805.5 291.6L777.3 289.6L805.1 294.7Z" fill="#ffe600"/></g>
<g clip-path="url(#czd)" fill="none" stroke="#e8212a" stroke-linejoin="miter" stroke-miterlimit="8"><path d="M964 257.6L942.6 248.8L958.1 251.3L929.9 240.7L946 243.3L924.3 234.5L944.3 237.6L920.7 227.6L942 230.3L916.2 218.6L928.6 219.9L903.7 210.4L916.8 212.3L884.1 199.6" stroke-width="1.6"/><path d="M964 261.3L942 254.4L956.1 255.2L928.7 246.2L946.5 247.5L921.4 238.2L940.3 239.9L910.8 229.6L931.6 230.8L906.7 221.2L919.9 222.3L887.4 211.9" stroke-width="1.5"/><path d="M964 263.1L934.2 253.9L949.3 253.9L919 245.3L935.6 245L899.8 235.1" stroke-width="1.7"/><path d="M964 266.1L927.3 256.7L942.1 256.4L910 250L926.7 249.9L903.2 245.2L922.9 245L897.6 239.4" stroke-width="1.9"/><path d="M964 269.2L928.8 261.1L949.4 260.2L921.3 254.7" stroke-width="1.9"/><path d="M964 273.9L938.6 269.7L955.4 268.3L929.5 264.4L945.7 263.3L915.3 256.7" stroke-width="1.7"/><path d="M964 276L941.3 272.9L960.8 269.4L926.2 265.9L942.1 263.9L910.1 261.4" stroke-width="1.1"/><path d="M964 278.4L941.2 277L954.6 275.1L926.8 273.3L947.3 269.8L923 267.8" stroke-width="1.3"/><path d="M964 281.7L926.2 279.6L942.8 276.7L919.2 275.5" stroke-width="1.3"/><path d="M964 285.7L926.8 285L939.8 281.7L917.4 281.3" stroke-width="2.0"/><path d="M964 288.7L936.2 291.1L954.9 284.8L920.5 287.4" stroke-width="1.2"/><path d="M964 291.6L929.3 295.2L947.4 288.2L917.4 292.3L928.9 288.1L902.7 291.8" stroke-width="1.7"/><path d="M964 294.9L926.4 298.6L940.9 292.9L915.6 296.8L928.5 291.3L892.3 295.1" stroke-width="1.5"/><path d="M964 297.3L931.9 302.7L949.5 293.7L920.6 300.1" stroke-width="1.8"/></g>
<g clip-path="url(#czd)"><path d="M947.6 277.6L960.1 271.4L948.3 278.8ZM938 292L967.7 290.3L938.3 295.1ZM938.7 280.1L960.4 266.4L939.4 281.1ZM932.9 279.4L954.7 262.1L934.7 281.4ZM951.5 283.4L961 281.5L952.1 285.5ZM943.4 275.2L961 263.9L944.5 276.8ZM949.1 288.2L964.6 286.5L949.6 290.7ZM937.5 284L957.9 274.6L938.3 285.5ZM950.4 282.6L968.3 276.9L951 284.1ZM934.4 272.6L946 260.3L935.9 273.8ZM938.5 291.6L966.7 289.6L938.9 294.7Z" fill="#ffe600"/></g>
<path d="M835.7 392.5 H908.3" stroke="#4d6470" stroke-width=".6"/>
<path d="M820.8 366.5L815 372" stroke="#4d6470" stroke-width=".6"/>
<path d="M923.2 366.5L929 372" stroke="#4d6470" stroke-width=".6"/>
<path d="M782.5 287C783.5 292 784.5 295 786.3 297.2C790 296.8 794 296.4 798.2 296.5C800 297 802 297.8 803.8 298.6C805.5 299.5 806.5 300.5 807.2 301.8" fill="none" stroke="#662d91" stroke-width="4.6"/><path d="M801.5 297.6C802.5 298 803 298.2 803.8 298.6C806.5 300 807.8 302.5 808 305C808.2 310 807.4 314 805.8 317.5C804 322 801.5 326.5 797.8 332.3" fill="none" stroke="#662d91" stroke-width="8"/>
<path d="M961.5 287C960.5 292 959.5 295 957.7 297.2C954 296.8 950 296.4 945.8 296.5C944 297 942 297.8 940.2 298.6C938.5 299.5 937.5 300.5 936.8 301.8" fill="none" stroke="#662d91" stroke-width="4.6"/><path d="M942.5 297.6C941.5 298 941 298.2 940.2 298.6C937.5 300 936.2 302.5 936 305C935.8 310 936.6 314 938.2 317.5C940 322 942.5 326.5 946.2 332.3" fill="none" stroke="#662d91" stroke-width="8"/>
<path d="M872 249.3C864 249.3 856 247.6 849.9 245.1L842 250L852 257L892 257L902 250L894.1 245.1C888 247.6 880 249.3 872 249.3Z" fill="#ec008c"/>
<path d="M865.1 495 V474.5 A6.9 6.9 0 0 1 878.9 474.5 V495 Z" fill="#fff" stroke="#4d6470" stroke-width=".6"/>
</g>
<path d="M872 249.3C864 249.3 856 247.6 849.9 245.1C842 246.8 832 249 824.8 250.4C814 252.6 804 255 796.8 257.4C792 259.5 789.5 262 788.4 264.4C786 268.5 784.8 273 784.5 277C784.1 281 784 285 784.2 288.8C784.5 292 785.2 295 786.3 297.2C790 296.8 794 296.4 798.2 296.5C800 297 802 297.8 803.8 298.6C806.5 300 807.8 302.5 808 305C808.2 310 807.4 314 805.8 317.5C804 322 801.5 326.5 798.8 330.8L800.3 333C801.6 337 802.8 341 803.8 345C805.2 350 806.4 355 807.3 360C810.5 400 812 450 812.7 493.7L931.3 493.7C932 450 933.5 400 936.7 360C937.6 355 938.8 350 940.2 345C941.2 341 942.4 337 943.7 333L945.2 330.8C942.5 326.5 940 322 938.2 317.5C936.6 314 935.8 310 936 305C936.2 302.5 937.5 300 940.2 298.6C942 297.8 944 297 945.8 296.5C950 296.4 954 296.8 957.7 297.2C958.8 295 959.5 292 959.8 288.8C960 285 959.9 281 959.5 277C959.2 273 958 268.5 955.6 264.4C954.5 262 952 259.5 947.2 257.4C940 255 930 252.6 919.2 250.4C912 249 902 246.8 894.1 245.1C888 247.6 880 249.3 872 249.3Z" fill="none" stroke="#4d6470" stroke-width=".6"/>
<ellipse cx="185.3" cy="247.3" rx="9.6" ry="6" transform="rotate(-8 185.3 247.3)" fill="none" stroke="#64788a" stroke-width="3"/>
<ellipse cx="185.3" cy="247.3" rx="9.6" ry="6" transform="rotate(-8 185.3 247.3)" fill="none" stroke="#fff" stroke-width="1.5"/>
<ellipse cx="188.5" cy="262.2" rx="9.2" ry="5.8" transform="rotate(-10 188.5 262.2)" fill="none" stroke="#64788a" stroke-width="3"/>
<ellipse cx="188.5" cy="262.2" rx="9.2" ry="5.8" transform="rotate(-10 188.5 262.2)" fill="none" stroke="#fff" stroke-width="1.5"/>
<ellipse cx="297.8" cy="246.6" rx="9.6" ry="6" transform="rotate(8 297.8 246.6)" fill="none" stroke="#64788a" stroke-width="3"/>
<ellipse cx="297.8" cy="246.6" rx="9.6" ry="6" transform="rotate(8 297.8 246.6)" fill="none" stroke="#fff" stroke-width="1.5"/>
<ellipse cx="294.6" cy="261.5" rx="9.2" ry="5.8" transform="rotate(10 294.6 261.5)" fill="none" stroke="#64788a" stroke-width="3"/>
<ellipse cx="294.6" cy="261.5" rx="9.2" ry="5.8" transform="rotate(10 294.6 261.5)" fill="none" stroke="#fff" stroke-width="1.5"/>
<ellipse cx="185.3" cy="247.3" rx="8.3" ry="4.7" transform="rotate(-8 185.3 247.3)" fill="#fff"/>
<ellipse cx="297.8" cy="246.6" rx="8.3" ry="4.7" transform="rotate(8 297.8 246.6)" fill="#fff"/>
<text transform="translate(205.00 319.40) scale(0.9845 1)" font-size="13" fill="#131a22" font-weight="700" >TEAM NAME</text>
<text transform="translate(201.8 378.7) scale(0.955 1)" font-size="73.6" fill="#000" stroke="#fff" stroke-width="2.4" paint-order="stroke" >00</text>
<text transform="translate(401.80 283.40) scale(0.9399 1)" font-size="20.8" fill="#1e2328" stroke="#ffde17" stroke-width=".25">PLAYER</text>
<text transform="translate(381.7 363.2) scale(0.957 1)" font-size="91.3" fill="#000" stroke="#fff" stroke-width="2.8" paint-order="stroke" >00</text>
<rect x="552.1" y="264.4" width="26.6" height="22.1" fill="#fdc75a" fill-opacity="0.7" stroke="#f7c84a" stroke-width=".6" stroke-dasharray="1 1"/>
<rect x="727.3" y="264.4" width="26.7" height="22.1" fill="#fdc75a" fill-opacity="0.7" stroke="#f7c84a" stroke-width=".6" stroke-dasharray="1 1"/>
<rect x="592.2" y="247.4" width="21.9" height="27.0" fill="#f7941d" fill-opacity="0.72" stroke="#f7c84a" stroke-width=".6" stroke-dasharray="1 1" transform="rotate(-9 603.2 260.9)"/>
<rect x="693.5" y="247.4" width="21.9" height="27.0" fill="#f7941d" fill-opacity="0.72" stroke="#f7c84a" stroke-width=".6" stroke-dasharray="1 1" transform="rotate(9 704.4 260.9)"/>
<rect x="643.0" y="263.4" width="20.0" height="15.2" fill="#fdc75a" fill-opacity="0.45" stroke="#f7c84a" stroke-width=".6" stroke-dasharray="1 1"/>
<rect x="623.0" y="293.0" width="12.0" height="10.0" fill="#3fb6b0" fill-opacity="0.6" stroke="#c8d86a" stroke-width=".6" stroke-dasharray="1 1"/>
<rect x="672.7" y="293.0" width="11.8" height="10.0" fill="#3fb6b0" fill-opacity="0.6" stroke="#c8d86a" stroke-width=".6" stroke-dasharray="1 1"/>
<rect x="647.5" y="290.0" width="11.5" height="12.0" fill="#6cbf4b" fill-opacity="0.7" stroke="#8cc63f" stroke-width=".6" stroke-dasharray="1 1"/>
<rect x="612.0" y="309.4" width="82.8" height="10.2" fill="#a9bd7a" fill-opacity="0.8" stroke="#d8d070" stroke-width=".6" stroke-dasharray="1 1"/>
<rect x="618.3" y="321.6" width="70.7" height="58.7" fill="#2ab3b8" fill-opacity="0.95" stroke="#b8d880" stroke-width=".6" stroke-dasharray="1 1"/>
<rect x="685.0" y="458.0" width="22.0" height="14.8" fill="#2ab3b8" fill-opacity="0.9" stroke="#b8d880" stroke-width=".6" stroke-dasharray="1 1"/>
<rect x="609.6" y="240.9" width="4.8" height="5.2" fill="#fff"/><text transform="translate(610.10 245.10) scale(0.7753 1)" font-size="4.2" fill="#000" font-weight="700" >L4</text>
<rect x="578.6" y="257.9" width="4.8" height="5.2" fill="#fff"/><text transform="translate(579.10 262.10) scale(0.7753 1)" font-size="4.2" fill="#000" font-weight="700" >L3</text>
<rect x="662.6" y="259.9" width="4.8" height="5.2" fill="#fff"/><text transform="translate(663.10 264.10) scale(0.7078 1)" font-size="4.2" fill="#000" font-weight="700" >B1</text>
<rect x="660.6" y="284.9" width="4.8" height="5.2" fill="#fff"/><text transform="translate(661.10 289.10) scale(0.7753 1)" font-size="4.2" fill="#000" font-weight="700" >L1</text>
<rect x="633.6" y="287.9" width="4.8" height="5.2" fill="#fff"/><text transform="translate(634.10 292.10) scale(0.7078 1)" font-size="4.2" fill="#000" font-weight="700" >B2</text>
<rect x="682.6" y="287.9" width="4.8" height="5.2" fill="#fff"/><text transform="translate(683.10 292.10) scale(0.7078 1)" font-size="4.2" fill="#000" font-weight="700" >B3</text>
<rect x="689.6" y="301.4" width="4.8" height="5.2" fill="#fff"/><text transform="translate(690.10 305.60) scale(0.7753 1)" font-size="4.2" fill="#000" font-weight="700" >L2</text>
<rect x="684.6" y="315.4" width="4.8" height="5.2" fill="#fff"/><text transform="translate(685.10 319.60) scale(0.7078 1)" font-size="4.2" fill="#000" font-weight="700" >N1</text>
<rect x="693.1" y="240.9" width="4.8" height="5.2" fill="#fff"/><text transform="translate(693.60 245.10) scale(0.7753 1)" font-size="4.2" fill="#000" font-weight="700" >L5</text>
<rect x="723.1" y="257.9" width="4.8" height="5.2" fill="#fff"/><text transform="translate(723.60 262.10) scale(0.7753 1)" font-size="4.2" fill="#000" font-weight="700" >L6</text>
<rect x="706.6" y="453.4" width="4.8" height="5.2" fill="#fff"/><text transform="translate(707.10 457.60) scale(0.7078 1)" font-size="4.2" fill="#000" font-weight="700" >B4</text>
<rect x="771.0" y="264.5" width="16.5" height="21.7" fill="#fdc75a" fill-opacity="0.7" stroke="#f7c84a" stroke-width=".6" stroke-dasharray="1 1"/>
<rect x="954.4" y="264.5" width="18.3" height="21.7" fill="#fdc75a" fill-opacity="0.7" stroke="#f7c84a" stroke-width=".6" stroke-dasharray="1 1"/>
<rect x="807.0" y="230.5" width="22.0" height="27.0" fill="#fdc75a" fill-opacity="0.7" stroke="#f7c84a" stroke-width=".6" stroke-dasharray="1 1" transform="rotate(-13 818.0 244.0)"/>
<rect x="916.3" y="230.5" width="22.0" height="27.0" fill="#fdc75a" fill-opacity="0.7" stroke="#f7c84a" stroke-width=".6" stroke-dasharray="1 1" transform="rotate(13 927.3 244.0)"/>
<rect x="852.0" y="250.0" width="38.0" height="8.8" fill="#f7777f" fill-opacity="0.95" stroke="#fbb03b" stroke-width=".6" stroke-dasharray="1 1"/>
<rect x="827.0" y="265.9" width="89.3" height="18.9" fill="#c9a766" fill-opacity="0.95" stroke="#fbb03b" stroke-width=".6" stroke-dasharray="1 1"/>
<rect x="853.0" y="263.4" width="37.0" height="15.1" fill="#d2ac5c" fill-opacity="0.9" stroke="#fbb03b" stroke-width=".6" stroke-dasharray="1 1"/>
<rect x="828.0" y="293.0" width="87.0" height="72.6" fill="#2ab3b8" fill-opacity="0.95" stroke="#d8c860" stroke-width=".6" stroke-dasharray="1 1"/>
<rect x="836.7" y="374.3" width="70.3" height="15.7" fill="#c9b662" fill-opacity="0.85" stroke="#fbb03b" stroke-width=".6" stroke-dasharray="1 1"/>
<rect x="827.6" y="240.9" width="4.8" height="5.2" fill="#fff"/><text transform="translate(828.10 245.10) scale(0.7753 1)" font-size="4.2" fill="#000" font-weight="700" >L5</text>
<rect x="796.6" y="257.4" width="4.8" height="5.2" fill="#fff"/><text transform="translate(797.10 261.60) scale(0.7753 1)" font-size="4.2" fill="#000" font-weight="700" >L6</text>
<rect x="889.6" y="244.9" width="4.8" height="5.2" fill="#fff"/><text transform="translate(890.10 249.10) scale(0.7753 1)" font-size="4.2" fill="#000" font-weight="700" >L9</text>
<rect x="889.1" y="258.9" width="4.8" height="5.2" fill="#fff"/><text transform="translate(889.60 263.10) scale(0.7078 1)" font-size="4.2" fill="#000" font-weight="700" >B5</text>
<rect x="907.1" y="258.9" width="4.8" height="5.2" fill="#fff"/><text transform="translate(907.60 263.10) scale(0.7753 1)" font-size="4.2" fill="#000" font-weight="700" >L7</text>
<rect x="912.1" y="240.9" width="4.8" height="5.2" fill="#fff"/><text transform="translate(912.60 245.10) scale(0.7753 1)" font-size="4.2" fill="#000" font-weight="700" >L4</text>
<rect x="941.1" y="257.4" width="4.8" height="5.2" fill="#fff"/><text transform="translate(941.60 261.60) scale(0.7753 1)" font-size="4.2" fill="#000" font-weight="700" >L3</text>
<rect x="910.1" y="285.9" width="4.8" height="5.2" fill="#fff"/><text transform="translate(910.60 290.10) scale(0.7078 1)" font-size="4.2" fill="#000" font-weight="700" >N2</text>
<rect x="897.6" y="368.9" width="4.8" height="5.2" fill="#fff"/><text transform="translate(898.10 373.10) scale(0.7753 1)" font-size="4.2" fill="#000" font-weight="700" >L8</text>
<rect x="61" y="360.60" width="67.7" height="10.14" fill="#ffffff"/>
<text transform="translate(84.76 368.50) scale(0.9300 1)" font-size="6.7" fill="#0a0a0a" font-weight="700" >WHITE</text>
<rect x="61" y="371.39" width="67.7" height="10.84" fill="#000000"/>
<text transform="translate(83.90 379.29) scale(0.9300 1)" font-size="6.7" fill="#fff" font-weight="700" >BLACK</text>
<rect x="61" y="382.18" width="67.7" height="10.84" fill="#58595b"/>
<text transform="translate(74.55 390.07) scale(0.9300 1)" font-size="6.7" fill="#fff" font-weight="700" >ANTHRACITE</text>
<rect x="61" y="392.97" width="67.7" height="10.84" fill="#a7a9ac"/>
<text transform="translate(85.97 400.87) scale(0.9300 1)" font-size="6.7" fill="#0a0a0a" font-weight="700" >GREY</text>
<rect x="61" y="403.76" width="67.7" height="10.84" fill="#bcbec0"/>
<text transform="translate(83.78 411.65) scale(0.9300 1)" font-size="6.7" fill="#0a0a0a" font-weight="700" >SILVER</text>
<rect x="61" y="414.55" width="67.7" height="10.84" fill="#5a0a1f"/>
<text transform="translate(80.61 422.44) scale(0.9300 1)" font-size="6.7" fill="#fff" font-weight="700" >MAROON</text>
<rect x="61" y="425.34" width="67.7" height="10.84" fill="#85082e"/>
<text transform="translate(78.53 433.24) scale(0.9300 1)" font-size="6.7" fill="#fff" font-weight="700" >CARDINAL</text>
<rect x="61" y="436.13" width="67.7" height="10.84" fill="#a30a3c"/>
<text transform="translate(73.33 444.02) scale(0.9300 1)" font-size="6.7" fill="#fff" font-weight="700" >PHOENIX RED</text>
<rect x="61" y="446.92" width="67.7" height="10.84" fill="#d71f5c"/>
<text transform="translate(88.22 454.81) scale(0.9300 1)" font-size="6.7" fill="#fff" font-weight="700" >RED</text>
<rect x="61" y="457.71" width="67.7" height="10.84" fill="#e47ab6"/>
<text transform="translate(79.91 465.61) scale(0.9300 1)" font-size="6.7" fill="#fff" font-weight="700" >HOT PINK</text>
<rect x="61" y="468.50" width="67.7" height="10.84" fill="#fce4e8"/>
<text transform="translate(82.51 476.39) scale(0.9300 1)" font-size="6.7" fill="#0a0a0a" font-weight="700" >RIBBON</text>
<rect x="61" y="479.29" width="67.7" height="10.84" fill="#fbb263"/>
<text transform="translate(84.47 487.19) scale(0.9300 1)" font-size="6.7" fill="#0a0a0a" font-weight="700" >NAVEL</text>
<rect x="61" y="490.08" width="67.7" height="10.84" fill="#e87a24"/>
<text transform="translate(84.41 497.98) scale(0.9300 1)" font-size="6.7" fill="#fff" font-weight="700" >TEXAS</text>
<rect x="61" y="500.87" width="67.7" height="10.84" fill="#f26522"/>
<text transform="translate(81.13 508.76) scale(0.9300 1)" font-size="6.7" fill="#fff" font-weight="700" >ORANGE</text>
<rect x="61" y="511.66" width="67.7" height="10.84" fill="#5d3010"/>
<text transform="translate(75.30 519.56) scale(0.9300 1)" font-size="6.7" fill="#fff" font-weight="700" >CHOCOLATE</text>
<rect x="61" y="522.45" width="67.7" height="10.84" fill="#341016"/>
<text transform="translate(82.69 530.35) scale(0.9300 1)" font-size="6.7" fill="#fff" font-weight="700" >BROWN</text>
<rect x="61" y="533.24" width="67.7" height="10.84" fill="#ffde17"/>
<text transform="translate(81.47 541.13) scale(0.9300 1)" font-size="6.7" fill="#0a0a0a" font-weight="700" >YELLOW</text>
<rect x="61" y="544.03" width="67.7" height="10.84" fill="#fdc82f"/>
<text transform="translate(85.80 551.92) scale(0.9300 1)" font-size="6.7" fill="#0a0a0a" font-weight="700" >GOLD</text>
<rect x="61" y="554.82" width="67.7" height="10.84" fill="#fdb92a"/>
<text transform="translate(69.76 562.71) scale(0.9300 1)" font-size="6.7" fill="#0a0a0a" font-weight="700" >ATHLETIC GOLD</text>
<rect x="61" y="565.61" width="67.7" height="10.84" fill="#c99b1d"/>
<text transform="translate(85.86 573.50) scale(0.9300 1)" font-size="6.7" fill="#0a0a0a" font-weight="700" >TITAN</text>
<rect x="61" y="576.40" width="67.7" height="10.84" fill="#f5e2ce"/>
<text transform="translate(84.59 584.29) scale(0.9300 1)" font-size="6.7" fill="#0a0a0a" font-weight="700" >FLESH</text>
<rect x="61" y="587.19" width="67.7" height="10.84" fill="#f3ebdb"/>
<text transform="translate(74.61 595.09) scale(0.9300 1)" font-size="6.7" fill="#0a0a0a" font-weight="700" >CHAMPAGNE</text>
<rect x="61" y="597.98" width="67.7" height="10.84" fill="#d9c591"/>
<text transform="translate(83.89 605.88) scale(0.9300 1)" font-size="6.7" fill="#0a0a0a" font-weight="700" >VEGAS</text>
<rect x="61" y="608.77" width="67.7" height="10.84" fill="#b48f6c"/>
<text transform="translate(84.47 616.66) scale(0.9300 1)" font-size="6.7" fill="#fff" font-weight="700" >TAUPE</text>
<rect x="61" y="619.56" width="67.7" height="10.84" fill="#a9d68b"/>
<text transform="translate(75.41 627.45) scale(0.9300 1)" font-size="6.7" fill="#0a0a0a" font-weight="700" >LIME GREEN</text>
<rect x="61" y="630.35" width="67.7" height="10.84" fill="#00a85a"/>
<text transform="translate(72.99 638.25) scale(0.9300 1)" font-size="6.7" fill="#fff" font-weight="700" >KELLY GREEN</text>
<rect x="61" y="641.14" width="67.7" height="10.84" fill="#0b6f50"/>
<text transform="translate(70.22 649.03) scale(0.9300 1)" font-size="6.7" fill="#fff" font-weight="700" >FOREST GREEN</text>
<rect x="61" y="651.93" width="67.7" height="10.84" fill="#0d4b40"/>
<text transform="translate(65.37 659.83) scale(0.9300 1)" font-size="6.7" fill="#fff" font-weight="700" >DARK EVERGREEN</text>
<rect x="61" y="662.72" width="67.7" height="10.84" fill="#00a29b"/>
<text transform="translate(86.67 670.62) scale(0.9300 1)" font-size="6.7" fill="#fff" font-weight="700" >TEAL</text>
<rect x="61" y="673.51" width="67.7" height="10.84" fill="#9ec0e1"/>
<text transform="translate(88.39 681.40) scale(0.9300 1)" font-size="6.7" fill="#fff" font-weight="700" >SKY</text>
<rect x="61" y="684.30" width="67.7" height="10.84" fill="#6db1e1"/>
<text transform="translate(80.78 692.19) scale(0.9300 1)" font-size="6.7" fill="#fff" font-weight="700" >POWDER</text>
<rect x="61" y="695.09" width="67.7" height="10.84" fill="#1c90d3"/>
<text transform="translate(77.66 702.98) scale(0.9300 1)" font-size="6.7" fill="#fff" font-weight="700" >AIR FORCE</text>
<rect x="61" y="705.88" width="67.7" height="10.84" fill="#0066b3"/>
<text transform="translate(84.18 713.77) scale(0.9300 1)" font-size="6.7" fill="#fff" font-weight="700" >ROYAL</text>
<rect x="61" y="716.67" width="67.7" height="10.84" fill="#0a2b5d"/>
<text transform="translate(76.80 724.57) scale(0.9300 1)" font-size="6.7" fill="#fff" font-weight="700" >PENN BLUE</text>
<rect x="61" y="727.46" width="67.7" height="10.84" fill="#0a0f2d"/>
<text transform="translate(86.38 735.36) scale(0.9300 1)" font-size="6.7" fill="#fff" font-weight="700" >NAVY</text>
<rect x="61" y="738.25" width="67.7" height="10.84" fill="#5b409d"/>
<text transform="translate(82.16 746.14) scale(0.9300 1)" font-size="6.7" fill="#fff" font-weight="700" >PURPLE</text>
<rect x="61" y="749.04" width="67.7" height="10.84" fill="#8080c4"/>
<text transform="translate(85.63 756.93) scale(0.9300 1)" font-size="6.7" fill="#fff" font-weight="700" >LILAC</text>
<rect x="61" y="759.83" width="67.7" height="10.84" fill="#ec3c95"/>
<text transform="translate(77.49 767.72) scale(0.9300 1)" font-size="6.7" fill="#0a0a0a" font-weight="700" >NEON PINK</text>
<rect x="61" y="770.62" width="67.7" height="10.84" fill="#13b6de"/>
<text transform="translate(75.59 778.51) scale(0.9300 1)" font-size="6.7" fill="#0a0a0a" font-weight="700" >NEON  BLUE</text>
<rect x="61" y="781.41" width="67.7" height="0.94" fill="#b5d334"/>
<g transform="rotate(-0.37 144.7 590.5)">
<path d="M144.7 583.8H434L420 597.5H144.7Z" fill="#bcbec0"/>
<text transform="translate(151.50 592.40) scale(0.8336 1)" font-size="9.8" fill="#fff" >COLORS</text>
</g>
<rect x="161.2" y="605.6" width="67.2" height="10.7" fill="#000"/>
<rect x="237.2" y="605.6" width="67.6" height="10.7" fill="#fdc41f"/>
<rect x="161.2" y="622.5" width="67.2" height="10.7" fill="#fff"/>
<text transform="translate(183.30 613.80) scale(0.8648 1)" font-size="7.6" fill="#fff" font-weight="700" >BLACK</text>
<text transform="translate(259.20 613.80) scale(0.9110 1)" font-size="7.6" fill="#111" font-weight="700" >GOLD</text>
<text transform="translate(183.30 630.70) scale(0.9598 1)" font-size="7.6" fill="#111" font-weight="700" >WHITE</text>
<g transform="rotate(-0.37 144.7 656)">
<path d="M144.7 649.6H434L420 663.2H144.7Z" fill="#bcbec0"/>
<text transform="translate(151.50 658.30) scale(0.8663 1)" font-size="9.8" fill="#fff" >GARMENT FEATURES &amp; SIZE CHART</text>
</g>
<circle cx="147.2" cy="669.6" r=".55" fill="#111"/>
<text transform="translate(155.20 671.20) scale(1.0157 1)" font-size="5.2" fill="#0c0c0c" font-weight="700" >Sublimated numbers on the front and back shoulders are included</text>
<circle cx="147.2" cy="678.5" r=".55" fill="#111"/>
<text x="155.20" y="680.05" font-size="5.2" fill="#0c0c0c" font-weight="700" >Due to panel sizing this jersey supports maximum 8" front and 10" back number in adult sizes.</text>
<circle cx="147.2" cy="687.3" r=".55" fill="#111"/>
<text transform="translate(155.20 688.90) scale(1.0100 1)" font-size="5.2" fill="#0c0c0c" font-weight="700" >Personalized Names and Sublimated Twill Numbers are available (additional fees apply)</text>
<rect x="144.7" y="699.4" width="289.3" height="4.6" fill="#b9bbbd"/>
<rect x="144.7" y="704" width="289.3" height="8.6" fill="#6a6a6a"/>
<path d="M144.7 708.2H434M144.7 712.6H434" stroke="#333" stroke-width=".5"/>
<text transform="translate(150.78 703.20) scale(0.9000 1)" font-size="3.3" fill="#fff" font-weight="700" >SIZE CHART (INCHES)</text>
<text transform="translate(195.03 703.20) scale(0.9000 1)" font-size="3.3" fill="#fff" font-weight="700" >YXS</text>
<text transform="translate(213.47 703.20) scale(0.9000 1)" font-size="3.3" fill="#fff" font-weight="700" >YS</text>
<text transform="translate(230.67 703.20) scale(0.9000 1)" font-size="3.3" fill="#fff" font-weight="700" >YM</text>
<text transform="translate(248.45 703.20) scale(0.9000 1)" font-size="3.3" fill="#fff" font-weight="700" >YL</text>
<text transform="translate(264.91 703.20) scale(0.9000 1)" font-size="3.3" fill="#fff" font-weight="700" >YXL</text>
<text transform="translate(283.27 703.20) scale(0.9000 1)" font-size="3.3" fill="#fff" font-weight="700" >XS</text>
<text transform="translate(301.71 703.20) scale(0.9000 1)" font-size="3.3" fill="#fff" font-weight="700" >S</text>
<text transform="translate(318.91 703.20) scale(0.9000 1)" font-size="3.3" fill="#fff" font-weight="700" >M</text>
<text transform="translate(336.69 703.20) scale(0.9000 1)" font-size="3.3" fill="#fff" font-weight="700" >L</text>
<text transform="translate(353.15 703.20) scale(0.9000 1)" font-size="3.3" fill="#fff" font-weight="700" >XL</text>
<text transform="translate(369.78 703.20) scale(0.9000 1)" font-size="3.3" fill="#fff" font-weight="700" >2XL</text>
<text transform="translate(387.23 703.20) scale(0.9000 1)" font-size="3.3" fill="#fff" font-weight="700" >3XL</text>
<text transform="translate(404.68 703.20) scale(0.9000 1)" font-size="3.3" fill="#fff" font-weight="700" >4XL</text>
<text transform="translate(422.13 703.20) scale(0.9000 1)" font-size="3.3" fill="#fff" font-weight="700" >5XL</text>
<text transform="translate(159.19 707.60) scale(0.9000 1)" font-size="3.3" fill="#0a0a0a" font-weight="700" >1/2 CHEST</text>
<text transform="translate(194.28 707.60) scale(0.9000 1)" font-size="3.3" fill="#0a0a0a" font-weight="700" >14.75</text>
<text transform="translate(211.73 707.60) scale(0.9000 1)" font-size="3.3" fill="#0a0a0a" font-weight="700" >15.50</text>
<text transform="translate(229.18 707.60) scale(0.9000 1)" font-size="3.3" fill="#0a0a0a" font-weight="700" >16.25</text>
<text transform="translate(246.63 707.60) scale(0.9000 1)" font-size="3.3" fill="#0a0a0a" font-weight="700" >17.25</text>
<text transform="translate(264.08 707.60) scale(0.9000 1)" font-size="3.3" fill="#0a0a0a" font-weight="700" >18.00</text>
<text transform="translate(281.53 707.60) scale(0.9000 1)" font-size="3.3" fill="#0a0a0a" font-weight="700" >18.25</text>
<text transform="translate(298.98 707.60) scale(0.9000 1)" font-size="3.3" fill="#0a0a0a" font-weight="700" >19.75</text>
<text transform="translate(316.43 707.60) scale(0.9000 1)" font-size="3.3" fill="#0a0a0a" font-weight="700" >21.25</text>
<text transform="translate(333.88 707.60) scale(0.9000 1)" font-size="3.3" fill="#0a0a0a" font-weight="700" >22.75</text>
<text transform="translate(351.33 707.60) scale(0.9000 1)" font-size="3.3" fill="#0a0a0a" font-weight="700" >24.50</text>
<text transform="translate(368.78 707.60) scale(0.9000 1)" font-size="3.3" fill="#0a0a0a" font-weight="700" >26.75</text>
<text transform="translate(386.23 707.60) scale(0.9000 1)" font-size="3.3" fill="#0a0a0a" font-weight="700" >28.25</text>
<text transform="translate(403.68 707.60) scale(0.9000 1)" font-size="3.3" fill="#0a0a0a" font-weight="700" >29.50</text>
<text transform="translate(421.13 707.60) scale(0.9000 1)" font-size="3.3" fill="#0a0a0a" font-weight="700" >31.25</text>
<text transform="translate(155.92 711.90) scale(0.9000 1)" font-size="3.3" fill="#0a0a0a" font-weight="700" >BODY LENGTH</text>
<text transform="translate(194.28 711.90) scale(0.9000 1)" font-size="3.3" fill="#0a0a0a" font-weight="700" >18.50</text>
<text transform="translate(211.73 711.90) scale(0.9000 1)" font-size="3.3" fill="#0a0a0a" font-weight="700" >20.25</text>
<text transform="translate(229.18 711.90) scale(0.9000 1)" font-size="3.3" fill="#0a0a0a" font-weight="700" >22.00</text>
<text transform="translate(246.63 711.90) scale(0.9000 1)" font-size="3.3" fill="#0a0a0a" font-weight="700" >23.50</text>
<text transform="translate(264.08 711.90) scale(0.9000 1)" font-size="3.3" fill="#0a0a0a" font-weight="700" >24.50</text>
<text transform="translate(281.53 711.90) scale(0.9000 1)" font-size="3.3" fill="#0a0a0a" font-weight="700" >26.25</text>
<text transform="translate(298.98 711.90) scale(0.9000 1)" font-size="3.3" fill="#0a0a0a" font-weight="700" >27.25</text>
<text transform="translate(316.43 711.90) scale(0.9000 1)" font-size="3.3" fill="#0a0a0a" font-weight="700" >28.25</text>
<text transform="translate(333.88 711.90) scale(0.9000 1)" font-size="3.3" fill="#0a0a0a" font-weight="700" >29.25</text>
<text transform="translate(351.33 711.90) scale(0.9000 1)" font-size="3.3" fill="#0a0a0a" font-weight="700" >30.25</text>
<text transform="translate(368.78 711.90) scale(0.9000 1)" font-size="3.3" fill="#0a0a0a" font-weight="700" >31.25</text>
<text transform="translate(386.23 711.90) scale(0.9000 1)" font-size="3.3" fill="#0a0a0a" font-weight="700" >32.25</text>
<text transform="translate(403.68 711.90) scale(0.9000 1)" font-size="3.3" fill="#0a0a0a" font-weight="700" >33.00</text>
<text transform="translate(421.13 711.90) scale(0.9000 1)" font-size="3.3" fill="#0a0a0a" font-weight="700" >34.00</text>
<text transform="translate(147.20 722.60) scale(0.9417 1)" font-size="4.6" fill="#f4f4f4" >PLEASE NOTE THAT DIMENSIONS SHOWN ARE GARMENT SIZE AND SHOULD ONLY BE USED FOR PURPOSE OF COMPARING TO PREVI-</text>
<text transform="translate(231.30 728.60) scale(0.9523 1)" font-size="4.6" fill="#f4f4f4" >OUS GARMENTS NOT FOR ACTUAL BODY DIMENSIONS</text>
<g transform="rotate(-0.37 144.7 741)">
<path d="M144.7 733.6H434L420 748.9H144.7Z" fill="#bcbec0"/>
<text transform="translate(151.50 743.60) scale(0.8771 1)" font-size="9.8" fill="#fff" >NOTES:</text>
</g>
<path d="M462.4 582H586.5L573 595.7H462.4Z" fill="#bcbec0"/>
<text transform="translate(470.50 591.90) scale(0.8766 1)" font-size="9.8" fill="#fff" >NECK LABEL</text>
<path d="M467.5 612.2H574.2L555.8 650.5C550.5 661 536.5 667.3 521 667.3C506 667.3 493.2 661 487.8 650.5Z" fill="#fff" stroke="#1e2a36" stroke-width=".8"/>
<rect x="515" y="637.3" width="12.6" height="5" fill="#e0222a"/>
<rect x="516.3" y="636.4" width="10" height="1.6" fill="#222"/>
<text transform="translate(518.20 641.20) scale(0.7115 1)" font-size="3.2" fill="#fff" font-weight="700" >APEX</text>
<text transform="translate(519.40 645.40) scale(0.7042 1)" font-size="2.3" fill="#111" font-weight="700" >SIZE</text>
<path d="M462.4 680.2H586.5L573 694H462.4Z" fill="#bcbec0"/>
<text transform="translate(470.50 690.10) scale(0.8283 1)" font-size="9.8" fill="#fff" >SLEEVES</text>
<text transform="translate(483.20 708.00) scale(1.0832 1)" font-size="4.6" fill="#e8e8e8" >RIGHT</text>
<text transform="translate(547.20 708.00) scale(1.0226 1)" font-size="4.6" fill="#e8e8e8" >LEFT</text>
<rect x="465" y="712.5" width="53.5" height="51.5" fill="#fdc41f"/>
<rect x="465" y="722.3" width="53.5" height="5.2" fill="#0a0a0a"/><rect x="465" y="723.9" width="53.5" height="2" fill="#fff"/>
<rect x="465" y="741.9" width="53.5" height="5.2" fill="#0a0a0a"/><rect x="465" y="743.5" width="53.5" height="2" fill="#fff"/>
<rect x="465" y="758.4" width="53.5" height="5.6" fill="#0a0a0a"/>
<rect x="525.5" y="712.5" width="53.5" height="51.5" fill="#fdc41f"/>
<rect x="525.5" y="722.3" width="53.5" height="5.2" fill="#0a0a0a"/><rect x="525.5" y="723.9" width="53.5" height="2" fill="#fff"/>
<rect x="525.5" y="741.9" width="53.5" height="5.2" fill="#0a0a0a"/><rect x="525.5" y="743.5" width="53.5" height="2" fill="#fff"/>
<rect x="525.5" y="758.4" width="53.5" height="5.6" fill="#0a0a0a"/>
<rect x="611.9" y="581.6" width="371.8" height="100.2" fill="#000"/>
<path d="M611.9 581.6H827.6L816 595.7H611.9Z" fill="#bcbec0"/>
<text transform="translate(618.50 592.40) scale(0.8607 1)" font-size="9.8" fill="#fff" >LOGOS</text>
<path d="M611.9 670.6H768.4L780.8 681.8H611.9Z" fill="#bcbec0"/>
<path d="M827.2 670.6H983.7V681.8H814.8Z" fill="#bcbec0"/>
<path d="M797.4 597V681" stroke="#2f9fc4" stroke-width=".7" stroke-dasharray="1.2 1.2"/>
<text transform="translate(886.40 594.20) scale(1.0169 1)" font-size="9.6" fill="#f2f2f2" >FONT:</text>
<text transform="translate(920.80 593.40) scale(1.0644 1)" font-size="7.4" fill="#fff" font-weight="700" >Machine BT</text>
<text transform="translate(868.60 635.40) scale(0.8598 1)" font-size="23.4" fill="#fdc41f" >PLAYER</text>
<text transform="translate(877.30 646.90) scale(1.0816 1)" font-size="7.2" fill="#fff" font-weight="700" >Height: 2.5"</text>
<rect x="618.3" y="673.6" width="5" height="5" fill="#fff"/><path d="M616.9 672.7L618.9 671.6L621.5 675.2L631.9 666.2L632.6999999999999 667.0L621.5 678.6Z" fill="#27a9e1"/><text transform="translate(626.30 677.80) scale(0.9581 1)" font-size="4.6" fill="#fff" >FIXED SIZE</text>
<rect x="672" y="673.6" width="5" height="5" fill="#fff"/><text transform="translate(680.00 677.80) scale(1.1243 1)" font-size="4.6" fill="#fff" >PROPORTIONAL</text>
<rect x="870" y="673.6" width="5" height="5" fill="#fff"/><text transform="translate(878.00 677.80) scale(1.0779 1)" font-size="4.6" fill="#fff" >FIXED SIZE</text>
<rect x="922" y="673.6" width="5" height="5" fill="#fff"/><path d="M920.6 672.7L922.6 671.6L925.2 675.2L935.6 666.2L936.4 667.0L925.2 678.6Z" fill="#27a9e1"/><text transform="translate(930.00 677.80) scale(1.1243 1)" font-size="4.6" fill="#fff" >PROPORTIONAL</text>
<rect x="611.9" y="691.3" width="371.8" height="91" fill="#000"/>
<path d="M611.9 691.3H828.4L816.5 705.4H611.9Z" fill="#bcbec0"/>
<text transform="translate(618.50 702.30) scale(0.8775 1)" font-size="9.8" fill="#fff" >NUMBERS</text>
<text transform="translate(674.00 700.70) scale(1.1315 1)" font-size="4.6" fill="#fff" >- OPTIONAL</text>
<rect x="728" y="696" width="5" height="5" fill="#fff"/><path d="M726.6 695.1L728.6 694L731.2 697.6L741.6 688.6L742.4 689.4L731.2 701Z" fill="#27a9e1"/><text transform="translate(736.00 700.20) scale(1.1530 1)" font-size="4.6" fill="#fff" >SUBLIMATED</text>
<rect x="783" y="696" width="5" height="5" fill="#fff"/><text transform="translate(791.00 700.20) scale(1.1442 1)" font-size="4.6" fill="#fff" >TWILL</text>
<text transform="translate(842.00 698.20) scale(1.0969 1)" font-size="4.3" fill="#27a9e1" font-weight="700" font-style="italic" >FONTS MUST BE THIS HIGH AND CONVERTED TO OUTLINES</text>
<path d="M976 709.5H981.5M978.7 709.5V775" stroke="#3f7f9f" stroke-width=".6"/>
<text transform="translate(577.5 774.4) scale(0.917 1)" font-size="84.9" fill="#fff">1234567890</text>
<rect x="580" y="766.4" width="16.6" height="9.6" fill="#606060"/><rect x="605.3" y="766.4" width="6.6" height="9.6" fill="#606060"/><rect x="611.9" y="766.4" width="7" height="9.6" fill="#000"/>
<text transform="translate(619.00 791.00) scale(0.9891 1)" font-size="9.8" fill="#fff" >FONT:</text>
<path d="M45 308.95H1101" stroke="#4affff" stroke-opacity=".72" stroke-width="2.1"/>
<path d="M653.9 83V782" stroke="#4affff" stroke-opacity=".72" stroke-width="2.1"/>
</svg>
<div class="a" style="left:33px;top:782.3px;width:1068px;height:4px;background:#4c4c4c"></div>
<div class="a" style="left:35px;top:783.3px;width:35px;height:3px;background:#585858;border-top:1px solid #666"></div>
<div class="a" style="left:71px;top:783.3px;width:9px;height:3px;background:#585858;border-top:1px solid #666"></div>
<div class="a" style="left:83px;top:783.3px;width:46px;height:3px;background:#585858;border-top:1px solid #666"></div>
<div class="a" style="left:131px;top:783.3px;width:9px;height:3px;background:#585858;border-top:1px solid #666"></div>
<div class="a" style="left:170px;top:783.3px;width:50px;height:3px;background:#585858;border-top:1px solid #666"></div>
<div class="a" style="left:222px;top:783.3px;width:14px;height:3px;background:#585858;border-top:1px solid #666"></div>
<div class="a" style="left:0;top:60px;width:33px;height:726px;background:#535353"></div>
<div class="a" style="left:0;top:61px;width:12px;height:3px;background:repeating-linear-gradient(90deg,#6a6a6a 0 1px,transparent 1px 2px)"></div>
<div class="a" style="left:6px;top:74px;width:20.5px;height:15px;background:#383838;border-radius:2px"></div>
<svg class="a" style="left:6.5px;top:72.6px" width="20" height="18" viewBox="-10.0 -9.0 20 18"><path d="M-4.2 -6.7 L-4.2 6.3 L-1 3.3 L5.6 3.3 Z" fill="#e6e6e6"/></svg>
<svg class="a" style="left:6.5px;top:90.4px" width="20" height="18" viewBox="-10.0 -9.0 20 18"><ellipse cx="-1.4" cy="-2.6" rx="5" ry="3.4" fill="none" stroke="#b8b8b8" stroke-width="1.3"/><path d="M-2.6 -2.6 q1.6 -1.6 2.6 0 q.4 1.8 -1.6 2.2" fill="none" stroke="#b8b8b8" stroke-width="1.1"/><path d="M-0.3 -4.4 L6.6 2 L3.2 2.2 L4.9 5.8 L3.3 6.5 L1.6 2.9 L-0.3 5 Z" fill="#d4d4d4" stroke="#535353" stroke-width=".5"/></svg>
<svg class="a" style="left:6.5px;top:107.5px" width="20" height="18" viewBox="-10.0 -9.0 20 18"><path d="M2.2 -6.2 L6.8 -2.6 L5 -.4 L.4 -4 Z" fill="#d4d4d4"/><path d="M-.2 -3.2 L4.4 .4 L2.4 4.2 L-4.4 5.8 L-3.2 -.8 Z" fill="#d4d4d4"/><path d="M-4 5.4 L.2 1" stroke="#535353" stroke-width=".9"/><circle cx=".5" cy=".7" r="1" fill="#535353"/><path d="M-4.4 5.8 C-7 6.6 -8 4.6 -6.6 2.6 C-5.6 1 -6.6 -1.6 -5.4 -3" fill="none" stroke="#d4d4d4" stroke-width="1.2"/></svg>
<svg class="a" style="left:6.5px;top:124.80000000000001px" width="20" height="18" viewBox="-10.0 -9.0 20 18"><path d="M-5.5 5 L5 -5" stroke="#d4d4d4" stroke-width="1.5"/></svg>
<svg class="a" style="left:6.5px;top:142.6px" width="20" height="18" viewBox="-10.0 -9.0 20 18"><path d="M5.2 -6.6 Q6.8 -6.4 6.4 -4.8 L1.4 2.4 L-1 .6 Z" fill="#d4d4d4"/><path d="M-1.6 1.3 L.9 3.2 C-.4 6 -4 6.6 -6.4 5.4 C-4.4 4.6 -4 1.8 -1.6 1.3 Z" fill="#d4d4d4"/></svg>
<svg class="a" style="left:6.5px;top:160.0px" width="20" height="18" viewBox="-10.0 -9.0 20 18"><path d="M-6 1.5 L0 -4.8 L6 -1.2 L0.8 5 L-3 5 Z" fill="#d4d4d4"/><path d="M-3.6 -1 L2.5 2.8" stroke="#535353" stroke-width="1"/></svg>
<svg class="a" style="left:6.5px;top:177.0px" width="20" height="18" viewBox="-10.0 -9.0 20 18"><rect x="-6.5" y="0" width="6" height="5.5" fill="none" stroke="#d4d4d4" stroke-width="1.1"/><rect x="-2.5" y="-6" width="9" height="8.5" fill="none" stroke="#d4d4d4" stroke-width="1.1"/><path d="M0 0 L4 -3.8 M1.2 -3.9 H4.1 V-1" stroke="#d4d4d4" stroke-width="1" fill="none"/></svg>
<svg class="a" style="left:6.5px;top:194.8px" width="20" height="18" viewBox="-10.0 -9.0 20 18"><rect x="-4" y="-4.5" width="10" height="9" fill="none" stroke="#d4d4d4" stroke-width="1" stroke-dasharray="2 1.2"/><path d="M-6.5 -6 L-6.5 4 L-4 1.8 L.3 1.8 Z" fill="#d4d4d4"/><rect x="4.8" y="-5.7" width="2.4" height="2.4" fill="#d4d4d4"/><rect x="4.8" y="3.3" width="2.4" height="2.4" fill="#d4d4d4"/><rect x="-5.2" y="3.3" width="2.4" height="2.4" fill="#d4d4d4"/></svg>
<svg class="a" style="left:6.5px;top:212.0px" width="20" height="18" viewBox="-10.0 -9.0 20 18"><path d="M-6 -5.5 V5.5 H6.5 Z M-6 -2 L2.4 1.8 M-6 1.6 L-1.6 3.2 M-3 -2.8 V5.5 M0 -0.2 V5.5 M3 2.4 V5.5" fill="none" stroke="#d4d4d4" stroke-width="1"/></svg>
<div class="a" style="left:10.5px;top:233.5px;width:12px;height:10.5px;background:linear-gradient(90deg,#f2f2f2,#3a3a3a);box-shadow:0 0 0 1px #bbb"></div>
<svg class="a" style="left:6.5px;top:247.0px" width="20" height="18" viewBox="-10.0 -9.0 20 18"><path d="M2 -2.5 L5 -6 Q7 -7 7.3 -5 L4.3 -.4 Z" fill="#d4d4d4"/><path d="M1.2 -3.6 L5 .2" stroke="#d4d4d4" stroke-width="1.6"/><path d="M1.8 -1.6 L-5 5.2 L-6 6.6 L-4.4 6 L2.6 -.6" fill="none" stroke="#d4d4d4" stroke-width="1.1"/></svg>
<svg class="a" style="left:6.5px;top:265.0px" width="20" height="18" viewBox="-10.0 -9.0 20 18"><rect x="-1" y="-2.8" width="7" height="8.6" rx="1.2" fill="none" stroke="#d4d4d4" stroke-width="1.2"/><rect x=".5" y="-5.5" width="4" height="2.5" fill="#d4d4d4"/><circle cx="2.5" cy="1.8" r="1.6" fill="none" stroke="#d4d4d4" stroke-width="1"/><path d="M-6 -6 h1 M-3.5 -6 h1 M-6 -3.5 h1 M-3.8 -3.8 h1 M-5 -1.4 h1" stroke="#d4d4d4" stroke-width="1.1"/></svg>
<svg class="a" style="left:6.5px;top:282.8px" width="20" height="18" viewBox="-10.0 -9.0 20 18"><path d="M-3 -2.8 H2.4 L5 -.2 V5.8 H-3 Z" fill="#7d7d7d" stroke="#d4d4d4" stroke-width="1.1"/><path d="M2.2 -2.8 V0 H5" fill="none" stroke="#d4d4d4" stroke-width=".9"/><path d="M-7.4 -2.8 H-3 M-3 -6.6 V-2.8" stroke="#d4d4d4" stroke-width="1.1"/></svg>
<svg class="a" style="left:6.5px;top:299.3px" width="20" height="18" viewBox="-10.0 -9.0 20 18"><g stroke="#d4d4d4" stroke-width="1.75" stroke-linecap="round" fill="none"><path d="M-3.3 1 V-3.8"/><path d="M-1.2 1 V-5.6"/><path d="M.9 1 V-5.2"/><path d="M3 1.4 V-3.4"/><path d="M-3.6 3.6 L-6 .6"/></g><path d="M-4.2 0 H3.9 V2.2 C3.9 4.6 3 5.8 2.2 6.8 H-2.4 C-3.4 5.4 -4.6 4 -4.9 2.4 Z" fill="#d4d4d4"/></svg>
<svg class="a" style="left:23.0px;top:86.6px" width="3" height="3" viewBox="0 0 3 3"><path d="M3 0 V3 H0 Z" fill="#bbb"/></svg>
<svg class="a" style="left:23.0px;top:121.5px" width="3" height="3" viewBox="0 0 3 3"><path d="M3 0 V3 H0 Z" fill="#bbb"/></svg>
<svg class="a" style="left:23.0px;top:138.8px" width="3" height="3" viewBox="0 0 3 3"><path d="M3 0 V3 H0 Z" fill="#bbb"/></svg>
<svg class="a" style="left:23.0px;top:156.6px" width="3" height="3" viewBox="0 0 3 3"><path d="M3 0 V3 H0 Z" fill="#bbb"/></svg>
<svg class="a" style="left:23.0px;top:174px" width="3" height="3" viewBox="0 0 3 3"><path d="M3 0 V3 H0 Z" fill="#bbb"/></svg>
<svg class="a" style="left:23.0px;top:191px" width="3" height="3" viewBox="0 0 3 3"><path d="M3 0 V3 H0 Z" fill="#bbb"/></svg>
<svg class="a" style="left:23.0px;top:208.8px" width="3" height="3" viewBox="0 0 3 3"><path d="M3 0 V3 H0 Z" fill="#bbb"/></svg>
<svg class="a" style="left:23.0px;top:226px" width="3" height="3" viewBox="0 0 3 3"><path d="M3 0 V3 H0 Z" fill="#bbb"/></svg>
<svg class="a" style="left:23.0px;top:261px" width="3" height="3" viewBox="0 0 3 3"><path d="M3 0 V3 H0 Z" fill="#bbb"/></svg>
<svg class="a" style="left:23.0px;top:279px" width="3" height="3" viewBox="0 0 3 3"><path d="M3 0 V3 H0 Z" fill="#bbb"/></svg>
<svg class="a" style="left:23.0px;top:296.8px" width="3" height="3" viewBox="0 0 3 3"><path d="M3 0 V3 H0 Z" fill="#bbb"/></svg>
<svg class="a" style="left:23.0px;top:313.3px" width="3" height="3" viewBox="0 0 3 3"><path d="M3 0 V3 H0 Z" fill="#bbb"/></svg>
<svg class="a" style="left:0;top:121.5px" width="3" height="3" viewBox="0 0 3 3"><path d="M3 0 V3 H0 Z" fill="#bbb"/></svg>
<svg class="a" style="left:0;top:138.8px" width="3" height="3" viewBox="0 0 3 3"><path d="M3 0 V3 H0 Z" fill="#bbb"/></svg>
<svg class="a" style="left:0;top:156.6px" width="3" height="3" viewBox="0 0 3 3"><path d="M3 0 V3 H0 Z" fill="#bbb"/></svg>
<svg class="a" style="left:0;top:174px" width="3" height="3" viewBox="0 0 3 3"><path d="M3 0 V3 H0 Z" fill="#bbb"/></svg>
<svg class="a" style="left:0;top:191px" width="3" height="3" viewBox="0 0 3 3"><path d="M3 0 V3 H0 Z" fill="#bbb"/></svg>
<svg class="a" style="left:0;top:208.8px" width="3" height="3" viewBox="0 0 3 3"><path d="M3 0 V3 H0 Z" fill="#bbb"/></svg>
<svg class="a" style="left:0;top:226px" width="3" height="3" viewBox="0 0 3 3"><path d="M3 0 V3 H0 Z" fill="#bbb"/></svg>
<svg class="a" style="left:0;top:279px" width="3" height="3" viewBox="0 0 3 3"><path d="M3 0 V3 H0 Z" fill="#bbb"/></svg>
<svg class="a" style="left:0;top:296.8px" width="3" height="3" viewBox="0 0 3 3"><path d="M3 0 V3 H0 Z" fill="#bbb"/></svg>
<svg class="a" style="left:0;top:313.3px" width="3" height="3" viewBox="0 0 3 3"><path d="M3 0 V3 H0 Z" fill="#bbb"/></svg>
<div class="a" style="left:0;top:112px;width:1.2px;height:9px;background:#9a9a9a"></div>
<div class="a" style="left:0;top:147px;width:1.2px;height:9px;background:#9a9a9a"></div>
<div class="a" style="left:0;top:165px;width:1.2px;height:7px;background:#9a9a9a"></div>
<div class="a" style="left:0;top:181px;width:1.2px;height:10px;background:#9a9a9a"></div>
<div class="a" style="left:0;top:199px;width:1.2px;height:8px;background:#9a9a9a"></div>
<div class="a" style="left:0;top:234px;width:1.2px;height:9px;background:#9a9a9a"></div>
<div class="a" style="left:0;top:271px;width:1.2px;height:6px;background:#9a9a9a"></div>
<div class="a" style="left:0;top:288px;width:1.2px;height:7px;background:#9a9a9a"></div>
<div class="a" style="left:0;top:304px;width:1.2px;height:6px;background:#9a9a9a"></div>
<div class="a" style="left:0;top:335px;width:27px;height:1px;background:#626262"></div>
<svg class="a" style="left:0;top:338px" width="30" height="42" viewBox="0 338 30 42"><rect x="-8" y="353.6" width="30.4" height="24" fill="#fff"/><rect x="-2" y="359.6" width="18.4" height="12" fill="#535353"/><path d="M-4 379.6 L22.4 353.6" stroke="#ee1111" stroke-width="1.8"/><rect x="-8" y="341" width="17.4" height="23.3" fill="#c4c8cd" stroke="#8a8a8a" stroke-width=".8"/><path d="M16.5 342.5 Q21.8 342.2 22 347.6 M20.2 346 L22 348.2 L23.8 346 M18.2 340.8 L16.2 342.5 L18.2 344.3" fill="none" stroke="#d4d4d4" stroke-width="1.2"/></svg>
<div class="a" style="left:0;top:386.5px;width:9.5px;height:9.5px;background:linear-gradient(90deg,#eee,#222);box-shadow:0 0 0 1px #444"></div>
<svg class="a" style="left:14.5px;top:386.5px" width="10.5" height="9.5" viewBox="0 0 10.5 9.5"><rect width="10.5" height="9.5" fill="#fff"/><path d="M.5 9 L10 .5" stroke="#ee1111" stroke-width="1.8"/></svg>
<div class="a" style="left:14px;top:386px;width:11.5px;height:10.5px;border:1px solid #3a3a3a;box-sizing:border-box"></div>
<div class="a" style="left:-1px;top:402px;width:12px;height:13px;border:1px solid #656565;box-sizing:border-box"></div>
<div class="a" style="left:13px;top:402px;width:13px;height:13px;border:1px solid #656565;box-sizing:border-box"></div>
<svg class="a" style="left:-1.5px;top:402.7px" width="12" height="12" viewBox="-6.0 -6.0 12 12"><circle cx="-1.6" cy="-.6" r="2.8" fill="#9a9a9a"/><circle cx="1" cy="1" r="2.8" fill="none" stroke="#d4d4d4" stroke-width="1"/></svg>
<svg class="a" style="left:13.5px;top:402.7px" width="12" height="12" viewBox="-6.0 -6.0 12 12"><circle cx="0" cy="0" r="2.6" fill="none" stroke="#6e6e6e" stroke-width="1"/><circle cx="0" cy="0" r="1" fill="#6e6e6e"/></svg>
<svg class="a" style="left:-5.0px;top:418.5px" width="26" height="16" viewBox="-13.0 -8.0 26 16"><rect x="-12" y="-1" width="9" height="6.5" fill="none" stroke="#d4d4d4" stroke-width="1.1"/><rect x="-4.5" y="-5.5" width="10" height="7.5" fill="#8a8a8a" stroke="#d4d4d4" stroke-width="1.1"/></svg>
<div class="a" style="left:-1.0px;top:449.3px;width:2px;height:2px;border-radius:1px;background:#d4d4d4"></div>
<div class="a" style="left:2.4px;top:449.3px;width:2px;height:2px;border-radius:1px;background:#d4d4d4"></div>
<div class="a" style="left:5.8px;top:449.3px;width:2px;height:2px;border-radius:1px;background:#d4d4d4"></div>
<div class="a" style="left:9.2px;top:449.3px;width:2px;height:2px;border-radius:1px;background:#d4d4d4"></div>
<div class="a" style="left:1101px;top:71px;width:12px;height:715px;background:#4a4a4a"></div>
<svg class="a" style="left:1102px;top:72px" width="10" height="10" viewBox="-5 -5 10 10"><path d="M-3 1.5 L0 -1.5 L3 1.5" fill="none" stroke="#8a8a8a" stroke-width="1.3"/></svg>
<svg class="a" style="left:1102px;top:771px" width="10" height="10" viewBox="-5 -5 10 10"><path d="M-3 -1.5 L0 1.5 L3 -1.5" fill="none" stroke="#8a8a8a" stroke-width="1.3"/></svg>
<div class="a" style="left:1102.3px;top:424.8px;width:10px;height:18.2px;border-radius:4px;background:#636363"></div>
<div class="a" style="left:1112.5px;top:49px;width:2.5px;height:737px;background:#404040"></div>
<div class="a" style="left:1115px;top:49px;width:165px;height:737px;background:#535353"></div>
<div class="a" style="left:1115px;top:49px;width:165px;height:10px;background:#454545"></div>
<div class="a" style="left:1115px;top:59px;width:165px;height:19.5px;background:#424242"></div>
<div class="a" style="left:1115px;top:59px;width:36px;height:19.5px;background:#535353"></div>
<div class="a" style="left:1205px;top:59px;width:1px;height:19.5px;background:#4d4d4d"></div>
<svg class="a" style="left:1117.3px;top:63.5px" width="6" height="10" viewBox="-3 -5 6 10"><path d="M-1.8 -1.3 L0 -3.3 L1.8 -1.3 M-1.8 1.3 L0 3.3 L1.8 1.3" fill="none" stroke="#bbb" stroke-width="1"/></svg>
<span class="t" style="left:1125.80px;top:62.90px;font-size:9px;line-height:10.8px;color:#f0f0f0;font-weight:700;transform:scaleX(0.7873);">Color</span>
<span class="t" style="left:1157.80px;top:62.90px;font-size:9px;line-height:10.8px;color:#c4c4c4;transform:scaleX(0.8433);">Color Guide</span>
<svg class="a" style="left:1118.5px;top:85.5px" width="29.5" height="10" viewBox="0 0 29.5 10"><rect width="29.5" height="10" fill="#fff"/><rect x="10" width="9.5" height="10" fill="#050505"/><path d="M.6 9.4 L9.4 .6" stroke="#ee1111" stroke-width="1.6"/><rect x=".25" y=".25" width="29" height="9.5" fill="none" stroke="#3a3a3a" stroke-width=".5"/></svg>
<div class="a" style="left:1118.5px;top:102px;width:162px;height:215px;background:#3f3f3f"></div>
<div class="a" id="spec" style="left:1119.8px;top:103.2px;width:161px;height:212.5px;background:linear-gradient(180deg,#fff 0%,rgba(255,255,255,0) 50%,rgba(0,0,0,0) 50%,#000 100%),linear-gradient(90deg,#ff0000 0px,#ffff00 37px,#00ff00 74.5px,#00ffff 111.5px,#0000ff 148.5px,#ff00ff 185.5px,#ff0000 222px)"></div>
<div class="a" style="left:1115px;top:320.5px;width:165px;height:2.5px;background:#454545"></div>
<div class="a" style="left:1115px;top:323px;width:165px;height:19px;background:#424242"></div>
<div class="a" style="left:1115px;top:323px;width:41px;height:19px;background:#535353"></div>
<div class="a" style="left:1199px;top:323px;width:1px;height:19px;background:#4d4d4d"></div>
<div class="a" style="left:1255px;top:323px;width:1px;height:19px;background:#4d4d4d"></div>
<svg class="a" style="left:1117.3px;top:327.3px" width="6" height="10" viewBox="-3 -5 6 10"><path d="M-1.8 -1.3 L0 -3.3 L1.8 -1.3 M-1.8 1.3 L0 3.3 L1.8 1.3" fill="none" stroke="#bbb" stroke-width="1"/></svg>
<span class="t" style="left:1125.80px;top:326.80px;font-size:9px;line-height:10.8px;color:#f0f0f0;font-weight:700;transform:scaleX(0.8211);">Stroke</span>
<span class="t" style="left:1162.00px;top:326.80px;font-size:9px;line-height:10.8px;color:#c4c4c4;transform:scaleX(0.8546);">Gradient</span>
<span class="t" style="left:1205.30px;top:326.80px;font-size:9px;line-height:10.8px;color:#c4c4c4;transform:scaleX(0.8228);">Transparency</span>
<span class="t" style="left:1118.70px;top:350.50px;font-size:9px;line-height:10.8px;color:#c4c4c4;transform:scaleX(0.8402);">Weight:</span>
<div class="a" style="left:1146.5px;top:347.5px;width:12.5px;height:14px;border:1px solid #484848;box-sizing:border-box"></div>
<svg class="a" style="left:1148px;top:347.5px" width="10" height="14" viewBox="0 1 10 14"><path d="M2 6 L5 3 L8 6 M2 10 L5 13 L8 10" fill="none" stroke="#ddd" stroke-width="1.3"/></svg>
<div class="a" style="left:1160px;top:347.5px;width:36px;height:14px;background:#444"></div>
<div class="a" style="left:1196.5px;top:347.5px;width:12.5px;height:14px;border:1px solid #484848;box-sizing:border-box"></div>
<svg class="a" style="left:1197.5px;top:349.5px" width="10" height="10" viewBox="-5 -5 10 10"><path d="M-3 -1.7 L0 1.7 L3 -1.7" fill="none" stroke="#ddd" stroke-width="1.4"/></svg>
<div class="a" style="left:1115px;top:363.5px;width:165px;height:4.5px;background:#464646"></div>
<div class="a" style="left:1115px;top:368px;width:165px;height:19.5px;background:#424242"></div>
<div class="a" style="left:1115px;top:368px;width:34px;height:19.5px;background:#535353"></div>
<div class="a" style="left:1204.5px;top:368px;width:1px;height:19.5px;background:#4d4d4d"></div>
<div class="a" style="left:1252px;top:368px;width:1px;height:19.5px;background:#4d4d4d"></div>
<span class="t" style="left:1121.30px;top:371.90px;font-size:9px;line-height:10.8px;color:#f0f0f0;font-weight:700;transform:scaleX(0.7236);">Layers</span>
<span class="t" style="left:1155.70px;top:371.90px;font-size:9px;line-height:10.8px;color:#c4c4c4;transform:scaleX(0.8232);">Asset Export</span>
<span class="t" style="left:1211.70px;top:371.90px;font-size:9px;line-height:10.8px;color:#c4c4c4;transform:scaleX(0.8585);">Artboards</span>
<div class="a" style="left:1123.5px;top:395px;width:160px;height:17px;background:#454545;border:1px solid #5e5e5e;border-radius:2px;box-sizing:border-box"></div>
<svg class="a" style="left:1127px;top:398px" width="11" height="11" viewBox="0 0 11 11"><circle cx="4.2" cy="4.2" r="2.8" fill="none" stroke="#ddd" stroke-width="1.2"/><path d="M6.4 6.4 L9.4 9.4" stroke="#ddd" stroke-width="1.4"/></svg>
<span class="t" style="left:1144.00px;top:397.90px;font-size:9.5px;line-height:11.4px;color:#666;transform:scaleX(0.9118);">Search All</span>
<div class="a" style="left:1118.5px;top:414px;width:162px;height:367px;background:#505050"></div>
<div class="a" style="left:1118.5px;top:428.6px;width:162px;height:1px;background:#595959"></div>
<svg class="a" style="left:1120.8px;top:416.8px" width="11" height="8" viewBox="-5.5 -4 11 8"><path d="M-4.8 0 Q0 -5.6 4.8 0 Q0 5.6 -4.8 0 Z" fill="none" stroke="#d2d2d2" stroke-width="1.2"/><circle r="1.7" fill="#d2d2d2"/><circle r=".6" cx="-.2" fill="#535353"/></svg>
<div class="a" style="left:1150.8px;top:414.3px;width:2px;height:14.6px;background:#4f80ff"></div>
<svg class="a" style="left:1173px;top:416.3px" width="8" height="10" viewBox="-4 -5 8 10"><path d="M-1.5 -3 L1.5 0 L-1.5 3" fill="none" stroke="#ddd" stroke-width="1.4"/></svg>
<div class="a" style="left:1188px;top:414.8px;width:13px;height:13px;background:#fff;border:1px solid #1a1a1a;border-radius:1.5px;box-sizing:border-box"></div>
<div class="a" style="left:1189px;top:420.1px;width:11px;height:2.4px;background:#777"></div>
<div class="a" style="left:1192.7px;top:420.8px;width:3.6px;height:1px;background:rgba(30,30,30,.55)"></div>
<span class="t" style="left:1205.50px;top:415.90px;font-size:9px;line-height:10.8px;color:#e0e0e0;transform:scaleX(0.8304);">&lt;Group&gt;</span>
<div class="a" style="left:1118.5px;top:443.9px;width:162px;height:1px;background:#595959"></div>
<svg class="a" style="left:1120.8px;top:432.07px" width="11" height="8" viewBox="-5.5 -4 11 8"><path d="M-4.8 0 Q0 -5.6 4.8 0 Q0 5.6 -4.8 0 Z" fill="none" stroke="#d2d2d2" stroke-width="1.2"/><circle r="1.7" fill="#d2d2d2"/><circle r=".6" cx="-.2" fill="#535353"/></svg>
<div class="a" style="left:1150.8px;top:429.6px;width:2px;height:14.6px;background:#4f80ff"></div>
<svg class="a" style="left:1173px;top:431.57px" width="8" height="10" viewBox="-4 -5 8 10"><path d="M-1.5 -3 L1.5 0 L-1.5 3" fill="none" stroke="#ddd" stroke-width="1.4"/></svg>
<div class="a" style="left:1188px;top:430.1px;width:13px;height:13px;background:#fff;border:1px solid #1a1a1a;border-radius:1.5px;box-sizing:border-box"></div>
<div class="a" style="left:1189px;top:435.4px;width:11px;height:2.4px;background:#f6b93b"></div>
<div class="a" style="left:1192.7px;top:436.1px;width:3.6px;height:1px;background:rgba(30,30,30,.55)"></div>
<span class="t" style="left:1205.50px;top:431.17px;font-size:9px;line-height:10.8px;color:#e0e0e0;transform:scaleX(0.8304);">&lt;Group&gt;</span>
<div class="a" style="left:1118.5px;top:459.1px;width:162px;height:1px;background:#595959"></div>
<svg class="a" style="left:1120.8px;top:447.34000000000003px" width="11" height="8" viewBox="-5.5 -4 11 8"><path d="M-4.8 0 Q0 -5.6 4.8 0 Q0 5.6 -4.8 0 Z" fill="none" stroke="#d2d2d2" stroke-width="1.2"/><circle r="1.7" fill="#d2d2d2"/><circle r=".6" cx="-.2" fill="#535353"/></svg>
<div class="a" style="left:1150.8px;top:444.8px;width:2px;height:14.6px;background:#4f80ff"></div>
<svg class="a" style="left:1173px;top:446.84000000000003px" width="8" height="10" viewBox="-4 -5 8 10"><path d="M-1.5 -3 L1.5 0 L-1.5 3" fill="none" stroke="#ddd" stroke-width="1.4"/></svg>
<div class="a" style="left:1188px;top:445.3px;width:13px;height:13px;background:#fff;border:1px solid #1a1a1a;border-radius:1.5px;box-sizing:border-box"></div>
<div class="a" style="left:1189px;top:450.6px;width:11px;height:2.4px;background:#ffe000"></div>
<div class="a" style="left:1192.7px;top:451.3px;width:3.6px;height:1px;background:rgba(30,30,30,.55)"></div>
<span class="t" style="left:1205.50px;top:446.44px;font-size:9px;line-height:10.8px;color:#e0e0e0;transform:scaleX(0.8304);">&lt;Group&gt;</span>
<div class="a" style="left:1118.5px;top:474.4px;width:162px;height:1px;background:#595959"></div>
<svg class="a" style="left:1120.8px;top:462.61px" width="11" height="8" viewBox="-5.5 -4 11 8"><path d="M-4.8 0 Q0 -5.6 4.8 0 Q0 5.6 -4.8 0 Z" fill="none" stroke="#d2d2d2" stroke-width="1.2"/><circle r="1.7" fill="#d2d2d2"/><circle r=".6" cx="-.2" fill="#535353"/></svg>
<div class="a" style="left:1150.8px;top:460.1px;width:2px;height:14.6px;background:#4f80ff"></div>
<svg class="a" style="left:1173px;top:462.11px" width="8" height="10" viewBox="-4 -5 8 10"><path d="M-1.5 -3 L1.5 0 L-1.5 3" fill="none" stroke="#ddd" stroke-width="1.4"/></svg>
<div class="a" style="left:1188px;top:460.6px;width:13px;height:13px;background:#fff;border:1px solid #1a1a1a;border-radius:1.5px;box-sizing:border-box"></div>
<div class="a" style="left:1189px;top:465.9px;width:11px;height:2.4px;background:#d9a520"></div>
<div class="a" style="left:1192.7px;top:466.6px;width:3.6px;height:1px;background:rgba(30,30,30,.55)"></div>
<span class="t" style="left:1205.50px;top:461.71px;font-size:9px;line-height:10.8px;color:#e0e0e0;transform:scaleX(0.8304);">&lt;Group&gt;</span>
<div class="a" style="left:1118.5px;top:489.7px;width:162px;height:1px;background:#595959"></div>
<svg class="a" style="left:1120.8px;top:477.88px" width="11" height="8" viewBox="-5.5 -4 11 8"><path d="M-4.8 0 Q0 -5.6 4.8 0 Q0 5.6 -4.8 0 Z" fill="none" stroke="#d2d2d2" stroke-width="1.2"/><circle r="1.7" fill="#d2d2d2"/><circle r=".6" cx="-.2" fill="#535353"/></svg>
<div class="a" style="left:1150.8px;top:475.4px;width:2px;height:14.6px;background:#4f80ff"></div>
<svg class="a" style="left:1173px;top:477.38px" width="8" height="10" viewBox="-4 -5 8 10"><path d="M-1.5 -3 L1.5 0 L-1.5 3" fill="none" stroke="#ddd" stroke-width="1.4"/></svg>
<div class="a" style="left:1188px;top:475.9px;width:13px;height:13px;background:#fff;border:1px solid #1a1a1a;border-radius:1.5px;box-sizing:border-box"></div>
<div class="a" style="left:1189px;top:481.2px;width:11px;height:2.4px;background:#e8ac1e"></div>
<div class="a" style="left:1192.7px;top:481.9px;width:3.6px;height:1px;background:rgba(30,30,30,.55)"></div>
<span class="t" style="left:1205.50px;top:476.98px;font-size:9px;line-height:10.8px;color:#e0e0e0;transform:scaleX(0.8304);">&lt;Group&gt;</span>
<div class="a" style="left:1118.5px;top:504.9px;width:162px;height:1px;background:#595959"></div>
<svg class="a" style="left:1120.8px;top:493.15px" width="11" height="8" viewBox="-5.5 -4 11 8"><path d="M-4.8 0 Q0 -5.6 4.8 0 Q0 5.6 -4.8 0 Z" fill="none" stroke="#d2d2d2" stroke-width="1.2"/><circle r="1.7" fill="#d2d2d2"/><circle r=".6" cx="-.2" fill="#535353"/></svg>
<div class="a" style="left:1150.8px;top:490.6px;width:2px;height:14.6px;background:#4f80ff"></div>
<svg class="a" style="left:1173px;top:492.65px" width="8" height="10" viewBox="-4 -5 8 10"><path d="M-1.5 -3 L1.5 0 L-1.5 3" fill="none" stroke="#ddd" stroke-width="1.4"/></svg>
<div class="a" style="left:1188px;top:491.1px;width:13px;height:13px;background:#fff;border:1px solid #1a1a1a;border-radius:1.5px;box-sizing:border-box"></div>
<div class="a" style="left:1189px;top:496.4px;width:11px;height:2.4px;background:#6b3d12"></div>
<div class="a" style="left:1192.7px;top:497.1px;width:3.6px;height:1px;background:rgba(30,30,30,.55)"></div>
<span class="t" style="left:1205.50px;top:492.25px;font-size:9px;line-height:10.8px;color:#e0e0e0;transform:scaleX(0.8304);">&lt;Group&gt;</span>
<div class="a" style="left:1118.5px;top:520.2px;width:162px;height:1px;background:#595959"></div>
<svg class="a" style="left:1120.8px;top:508.4200000000001px" width="11" height="8" viewBox="-5.5 -4 11 8"><path d="M-4.8 0 Q0 -5.6 4.8 0 Q0 5.6 -4.8 0 Z" fill="none" stroke="#d2d2d2" stroke-width="1.2"/><circle r="1.7" fill="#d2d2d2"/><circle r=".6" cx="-.2" fill="#535353"/></svg>
<div class="a" style="left:1150.8px;top:505.9px;width:2px;height:14.6px;background:#4f80ff"></div>
<svg class="a" style="left:1173px;top:507.9200000000001px" width="8" height="10" viewBox="-4 -5 8 10"><path d="M-1.5 -3 L1.5 0 L-1.5 3" fill="none" stroke="#ddd" stroke-width="1.4"/></svg>
<div class="a" style="left:1188px;top:506.4px;width:13px;height:13px;background:#fff;border:1px solid #1a1a1a;border-radius:1.5px;box-sizing:border-box"></div>
<div class="a" style="left:1189px;top:511.7px;width:11px;height:2.4px;background:#3a1018"></div>
<div class="a" style="left:1192.7px;top:512.4px;width:3.6px;height:1px;background:rgba(30,30,30,.55)"></div>
<span class="t" style="left:1205.50px;top:507.52px;font-size:9px;line-height:10.8px;color:#e0e0e0;transform:scaleX(0.8304);">&lt;Group&gt;</span>
<div class="a" style="left:1118.5px;top:535.5px;width:162px;height:1px;background:#595959"></div>
<svg class="a" style="left:1120.8px;top:523.69px" width="11" height="8" viewBox="-5.5 -4 11 8"><path d="M-4.8 0 Q0 -5.6 4.8 0 Q0 5.6 -4.8 0 Z" fill="none" stroke="#d2d2d2" stroke-width="1.2"/><circle r="1.7" fill="#d2d2d2"/><circle r=".6" cx="-.2" fill="#535353"/></svg>
<div class="a" style="left:1150.8px;top:521.2px;width:2px;height:14.6px;background:#4f80ff"></div>
<svg class="a" style="left:1173px;top:523.19px" width="8" height="10" viewBox="-4 -5 8 10"><path d="M-1.5 -3 L1.5 0 L-1.5 3" fill="none" stroke="#ddd" stroke-width="1.4"/></svg>
<div class="a" style="left:1188px;top:521.7px;width:13px;height:13px;background:#fff;border:1px solid #1a1a1a;border-radius:1.5px;box-sizing:border-box"></div>
<div class="a" style="left:1189px;top:527.0px;width:11px;height:2.4px;background:#f26522"></div>
<div class="a" style="left:1192.7px;top:527.7px;width:3.6px;height:1px;background:rgba(30,30,30,.55)"></div>
<span class="t" style="left:1205.50px;top:522.79px;font-size:9px;line-height:10.8px;color:#e0e0e0;transform:scaleX(0.8304);">&lt;Group&gt;</span>
<div class="a" style="left:1118.5px;top:550.8px;width:162px;height:1px;background:#595959"></div>
<svg class="a" style="left:1120.8px;top:538.96px" width="11" height="8" viewBox="-5.5 -4 11 8"><path d="M-4.8 0 Q0 -5.6 4.8 0 Q0 5.6 -4.8 0 Z" fill="none" stroke="#d2d2d2" stroke-width="1.2"/><circle r="1.7" fill="#d2d2d2"/><circle r=".6" cx="-.2" fill="#535353"/></svg>
<div class="a" style="left:1150.8px;top:536.5px;width:2px;height:14.6px;background:#4f80ff"></div>
<svg class="a" style="left:1173px;top:538.46px" width="8" height="10" viewBox="-4 -5 8 10"><path d="M-1.5 -3 L1.5 0 L-1.5 3" fill="none" stroke="#ddd" stroke-width="1.4"/></svg>
<div class="a" style="left:1188px;top:537.0px;width:13px;height:13px;background:#fff;border:1px solid #1a1a1a;border-radius:1.5px;box-sizing:border-box"></div>
<div class="a" style="left:1189px;top:542.3px;width:11px;height:2.4px;background:#f7a95c"></div>
<div class="a" style="left:1192.7px;top:543.0px;width:3.6px;height:1px;background:rgba(30,30,30,.55)"></div>
<span class="t" style="left:1205.50px;top:538.06px;font-size:9px;line-height:10.8px;color:#e0e0e0;transform:scaleX(0.8304);">&lt;Group&gt;</span>
<div class="a" style="left:1118.5px;top:566.0px;width:162px;height:1px;background:#595959"></div>
<svg class="a" style="left:1120.8px;top:554.23px" width="11" height="8" viewBox="-5.5 -4 11 8"><path d="M-4.8 0 Q0 -5.6 4.8 0 Q0 5.6 -4.8 0 Z" fill="none" stroke="#d2d2d2" stroke-width="1.2"/><circle r="1.7" fill="#d2d2d2"/><circle r=".6" cx="-.2" fill="#535353"/></svg>
<div class="a" style="left:1150.8px;top:551.7px;width:2px;height:14.6px;background:#4f80ff"></div>
<svg class="a" style="left:1173px;top:553.73px" width="8" height="10" viewBox="-4 -5 8 10"><path d="M-1.5 -3 L1.5 0 L-1.5 3" fill="none" stroke="#ddd" stroke-width="1.4"/></svg>
<div class="a" style="left:1188px;top:552.2px;width:13px;height:13px;background:#fff;border:1px solid #1a1a1a;border-radius:1.5px;box-sizing:border-box"></div>
<div class="a" style="left:1189px;top:557.5px;width:11px;height:2.4px;background:#f8d5de"></div>
<div class="a" style="left:1192.7px;top:558.2px;width:3.6px;height:1px;background:rgba(30,30,30,.55)"></div>
<span class="t" style="left:1205.50px;top:553.33px;font-size:9px;line-height:10.8px;color:#e0e0e0;transform:scaleX(0.8304);">&lt;Group&gt;</span>
<div class="a" style="left:1118.5px;top:581.3px;width:162px;height:1px;background:#595959"></div>
<svg class="a" style="left:1120.8px;top:569.5px" width="11" height="8" viewBox="-5.5 -4 11 8"><path d="M-4.8 0 Q0 -5.6 4.8 0 Q0 5.6 -4.8 0 Z" fill="none" stroke="#d2d2d2" stroke-width="1.2"/><circle r="1.7" fill="#d2d2d2"/><circle r=".6" cx="-.2" fill="#535353"/></svg>
<div class="a" style="left:1150.8px;top:567.0px;width:2px;height:14.6px;background:#4f80ff"></div>
<svg class="a" style="left:1173px;top:569.0px" width="8" height="10" viewBox="-4 -5 8 10"><path d="M-1.5 -3 L1.5 0 L-1.5 3" fill="none" stroke="#ddd" stroke-width="1.4"/></svg>
<div class="a" style="left:1188px;top:567.5px;width:13px;height:13px;background:#fff;border:1px solid #1a1a1a;border-radius:1.5px;box-sizing:border-box"></div>
<div class="a" style="left:1189px;top:572.8px;width:11px;height:2.4px;background:#e070b5"></div>
<div class="a" style="left:1192.7px;top:573.5px;width:3.6px;height:1px;background:rgba(30,30,30,.55)"></div>
<span class="t" style="left:1205.50px;top:568.60px;font-size:9px;line-height:10.8px;color:#e0e0e0;transform:scaleX(0.8304);">&lt;Group&gt;</span>
<div class="a" style="left:1118.5px;top:596.6px;width:162px;height:1px;background:#595959"></div>
<svg class="a" style="left:1120.8px;top:584.77px" width="11" height="8" viewBox="-5.5 -4 11 8"><path d="M-4.8 0 Q0 -5.6 4.8 0 Q0 5.6 -4.8 0 Z" fill="none" stroke="#d2d2d2" stroke-width="1.2"/><circle r="1.7" fill="#d2d2d2"/><circle r=".6" cx="-.2" fill="#535353"/></svg>
<div class="a" style="left:1150.8px;top:582.3px;width:2px;height:14.6px;background:#4f80ff"></div>
<svg class="a" style="left:1173px;top:584.27px" width="8" height="10" viewBox="-4 -5 8 10"><path d="M-1.5 -3 L1.5 0 L-1.5 3" fill="none" stroke="#ddd" stroke-width="1.4"/></svg>
<div class="a" style="left:1188px;top:582.8px;width:13px;height:13px;background:#fff;border:1px solid #1a1a1a;border-radius:1.5px;box-sizing:border-box"></div>
<div class="a" style="left:1189px;top:588.1px;width:11px;height:2.4px;background:#d8225a"></div>
<div class="a" style="left:1192.7px;top:588.8px;width:3.6px;height:1px;background:rgba(30,30,30,.55)"></div>
<span class="t" style="left:1205.50px;top:583.87px;font-size:9px;line-height:10.8px;color:#e0e0e0;transform:scaleX(0.8304);">&lt;Group&gt;</span>
<div class="a" style="left:1118.5px;top:611.8px;width:162px;height:1px;background:#595959"></div>
<svg class="a" style="left:1120.8px;top:600.04px" width="11" height="8" viewBox="-5.5 -4 11 8"><path d="M-4.8 0 Q0 -5.6 4.8 0 Q0 5.6 -4.8 0 Z" fill="none" stroke="#d2d2d2" stroke-width="1.2"/><circle r="1.7" fill="#d2d2d2"/><circle r=".6" cx="-.2" fill="#535353"/></svg>
<div class="a" style="left:1150.8px;top:597.5px;width:2px;height:14.6px;background:#4f80ff"></div>
<svg class="a" style="left:1173px;top:599.54px" width="8" height="10" viewBox="-4 -5 8 10"><path d="M-1.5 -3 L1.5 0 L-1.5 3" fill="none" stroke="#ddd" stroke-width="1.4"/></svg>
<div class="a" style="left:1188px;top:598.0px;width:13px;height:13px;background:#fff;border:1px solid #1a1a1a;border-radius:1.5px;box-sizing:border-box"></div>
<div class="a" style="left:1189px;top:603.3px;width:11px;height:2.4px;background:#b30838"></div>
<div class="a" style="left:1192.7px;top:604.0px;width:3.6px;height:1px;background:rgba(30,30,30,.55)"></div>
<span class="t" style="left:1205.50px;top:599.14px;font-size:9px;line-height:10.8px;color:#e0e0e0;transform:scaleX(0.8304);">&lt;Group&gt;</span>
<div class="a" style="left:1118.5px;top:627.1px;width:162px;height:1px;background:#595959"></div>
<svg class="a" style="left:1120.8px;top:615.31px" width="11" height="8" viewBox="-5.5 -4 11 8"><path d="M-4.8 0 Q0 -5.6 4.8 0 Q0 5.6 -4.8 0 Z" fill="none" stroke="#d2d2d2" stroke-width="1.2"/><circle r="1.7" fill="#d2d2d2"/><circle r=".6" cx="-.2" fill="#535353"/></svg>
<div class="a" style="left:1150.8px;top:612.8px;width:2px;height:14.6px;background:#4f80ff"></div>
<svg class="a" style="left:1173px;top:614.81px" width="8" height="10" viewBox="-4 -5 8 10"><path d="M-1.5 -3 L1.5 0 L-1.5 3" fill="none" stroke="#ddd" stroke-width="1.4"/></svg>
<div class="a" style="left:1188px;top:613.3px;width:13px;height:13px;background:#fff;border:1px solid #1a1a1a;border-radius:1.5px;box-sizing:border-box"></div>
<div class="a" style="left:1189px;top:618.6px;width:11px;height:2.4px;background:#8c0a2e"></div>
<div class="a" style="left:1192.7px;top:619.3px;width:3.6px;height:1px;background:rgba(30,30,30,.55)"></div>
<span class="t" style="left:1205.50px;top:614.41px;font-size:9px;line-height:10.8px;color:#e0e0e0;transform:scaleX(0.8304);">&lt;Group&gt;</span>
<div class="a" style="left:1118.5px;top:642.4px;width:162px;height:1px;background:#595959"></div>
<svg class="a" style="left:1120.8px;top:630.58px" width="11" height="8" viewBox="-5.5 -4 11 8"><path d="M-4.8 0 Q0 -5.6 4.8 0 Q0 5.6 -4.8 0 Z" fill="none" stroke="#d2d2d2" stroke-width="1.2"/><circle r="1.7" fill="#d2d2d2"/><circle r=".6" cx="-.2" fill="#535353"/></svg>
<div class="a" style="left:1150.8px;top:628.1px;width:2px;height:14.6px;background:#4f80ff"></div>
<svg class="a" style="left:1173px;top:630.08px" width="8" height="10" viewBox="-4 -5 8 10"><path d="M-1.5 -3 L1.5 0 L-1.5 3" fill="none" stroke="#ddd" stroke-width="1.4"/></svg>
<div class="a" style="left:1188px;top:628.6px;width:13px;height:13px;background:#fff;border:1px solid #1a1a1a;border-radius:1.5px;box-sizing:border-box"></div>
<div class="a" style="left:1189px;top:633.9px;width:11px;height:2.4px;background:#6a0a20"></div>
<div class="a" style="left:1192.7px;top:634.6px;width:3.6px;height:1px;background:rgba(30,30,30,.55)"></div>
<span class="t" style="left:1205.50px;top:629.68px;font-size:9px;line-height:10.8px;color:#e0e0e0;transform:scaleX(0.8304);">&lt;Group&gt;</span>
<div class="a" style="left:1118.5px;top:657.6px;width:162px;height:1px;background:#595959"></div>
<svg class="a" style="left:1120.8px;top:645.85px" width="11" height="8" viewBox="-5.5 -4 11 8"><path d="M-4.8 0 Q0 -5.6 4.8 0 Q0 5.6 -4.8 0 Z" fill="none" stroke="#d2d2d2" stroke-width="1.2"/><circle r="1.7" fill="#d2d2d2"/><circle r=".6" cx="-.2" fill="#535353"/></svg>
<div class="a" style="left:1150.8px;top:643.4px;width:2px;height:14.6px;background:#4f80ff"></div>
<svg class="a" style="left:1173px;top:645.35px" width="8" height="10" viewBox="-4 -5 8 10"><path d="M-1.5 -3 L1.5 0 L-1.5 3" fill="none" stroke="#ddd" stroke-width="1.4"/></svg>
<div class="a" style="left:1188px;top:643.9px;width:13px;height:13px;background:#fff;border:1px solid #1a1a1a;border-radius:1.5px;box-sizing:border-box"></div>
<div class="a" style="left:1189px;top:649.1px;width:11px;height:2.4px;background:#aeb2b6"></div>
<div class="a" style="left:1192.7px;top:649.9px;width:3.6px;height:1px;background:rgba(30,30,30,.55)"></div>
<span class="t" style="left:1205.50px;top:644.95px;font-size:9px;line-height:10.8px;color:#e0e0e0;transform:scaleX(0.8304);">&lt;Group&gt;</span>
<div class="a" style="left:1118.5px;top:672.9px;width:162px;height:1px;background:#595959"></div>
<svg class="a" style="left:1120.8px;top:661.12px" width="11" height="8" viewBox="-5.5 -4 11 8"><path d="M-4.8 0 Q0 -5.6 4.8 0 Q0 5.6 -4.8 0 Z" fill="none" stroke="#d2d2d2" stroke-width="1.2"/><circle r="1.7" fill="#d2d2d2"/><circle r=".6" cx="-.2" fill="#535353"/></svg>
<div class="a" style="left:1150.8px;top:658.6px;width:2px;height:14.6px;background:#4f80ff"></div>
<svg class="a" style="left:1173px;top:660.62px" width="8" height="10" viewBox="-4 -5 8 10"><path d="M-1.5 -3 L1.5 0 L-1.5 3" fill="none" stroke="#ddd" stroke-width="1.4"/></svg>
<div class="a" style="left:1188px;top:659.1px;width:13px;height:13px;background:#fff;border:1px solid #1a1a1a;border-radius:1.5px;box-sizing:border-box"></div>
<div class="a" style="left:1189px;top:664.4px;width:11px;height:2.4px;background:#9da1a5"></div>
<div class="a" style="left:1192.7px;top:665.1px;width:3.6px;height:1px;background:rgba(30,30,30,.55)"></div>
<span class="t" style="left:1205.50px;top:660.22px;font-size:9px;line-height:10.8px;color:#e0e0e0;transform:scaleX(0.8304);">&lt;Group&gt;</span>
<div class="a" style="left:1118.5px;top:688.2px;width:162px;height:1px;background:#595959"></div>
<svg class="a" style="left:1120.8px;top:676.39px" width="11" height="8" viewBox="-5.5 -4 11 8"><path d="M-4.8 0 Q0 -5.6 4.8 0 Q0 5.6 -4.8 0 Z" fill="none" stroke="#d2d2d2" stroke-width="1.2"/><circle r="1.7" fill="#d2d2d2"/><circle r=".6" cx="-.2" fill="#535353"/></svg>
<div class="a" style="left:1150.8px;top:673.9px;width:2px;height:14.6px;background:#4f80ff"></div>
<svg class="a" style="left:1173px;top:675.89px" width="8" height="10" viewBox="-4 -5 8 10"><path d="M-1.5 -3 L1.5 0 L-1.5 3" fill="none" stroke="#ddd" stroke-width="1.4"/></svg>
<div class="a" style="left:1188px;top:674.4px;width:13px;height:13px;background:#fff;border:1px solid #1a1a1a;border-radius:1.5px;box-sizing:border-box"></div>
<div class="a" style="left:1189px;top:679.7px;width:11px;height:2.4px;background:#8a8d91"></div>
<div class="a" style="left:1192.7px;top:680.4px;width:3.6px;height:1px;background:rgba(30,30,30,.55)"></div>
<span class="t" style="left:1205.50px;top:675.49px;font-size:9px;line-height:10.8px;color:#e0e0e0;transform:scaleX(0.8304);">&lt;Group&gt;</span>
<div class="a" style="left:1118.5px;top:703.5px;width:162px;height:1px;background:#595959"></div>
<svg class="a" style="left:1120.8px;top:691.6600000000001px" width="11" height="8" viewBox="-5.5 -4 11 8"><path d="M-4.8 0 Q0 -5.6 4.8 0 Q0 5.6 -4.8 0 Z" fill="none" stroke="#d2d2d2" stroke-width="1.2"/><circle r="1.7" fill="#d2d2d2"/><circle r=".6" cx="-.2" fill="#535353"/></svg>
<div class="a" style="left:1150.8px;top:689.2px;width:2px;height:14.6px;background:#4f80ff"></div>
<svg class="a" style="left:1173px;top:691.1600000000001px" width="8" height="10" viewBox="-4 -5 8 10"><path d="M-1.5 -3 L1.5 0 L-1.5 3" fill="none" stroke="#ddd" stroke-width="1.4"/></svg>
<div class="a" style="left:1188px;top:689.7px;width:13px;height:13px;background:#fff;border:1px solid #1a1a1a;border-radius:1.5px;box-sizing:border-box"></div>
<div class="a" style="left:1189px;top:695.0px;width:11px;height:2.4px;background:#2a3a5a"></div>
<div class="a" style="left:1192.7px;top:695.7px;width:3.6px;height:1px;background:rgba(30,30,30,.55)"></div>
<span class="t" style="left:1205.50px;top:690.76px;font-size:9px;line-height:10.8px;color:#e0e0e0;transform:scaleX(0.8304);">&lt;Group&gt;</span>
<div class="a" style="left:1118.5px;top:718.7px;width:162px;height:1px;background:#595959"></div>
<svg class="a" style="left:1120.8px;top:706.9300000000001px" width="11" height="8" viewBox="-5.5 -4 11 8"><path d="M-4.8 0 Q0 -5.6 4.8 0 Q0 5.6 -4.8 0 Z" fill="none" stroke="#d2d2d2" stroke-width="1.2"/><circle r="1.7" fill="#d2d2d2"/><circle r=".6" cx="-.2" fill="#535353"/></svg>
<div class="a" style="left:1150.8px;top:704.4px;width:2px;height:14.6px;background:#4f80ff"></div>
<svg class="a" style="left:1173px;top:706.4300000000001px" width="8" height="10" viewBox="-4 -5 8 10"><path d="M-1.5 -3 L1.5 0 L-1.5 3" fill="none" stroke="#ddd" stroke-width="1.4"/></svg>
<div class="a" style="left:1188px;top:704.9px;width:13px;height:13px;background:#fff;border:1px solid #1a1a1a;border-radius:1.5px;box-sizing:border-box"></div>
<div class="a" style="left:1189px;top:710.2px;width:11px;height:2.4px;background:#fdc41f"></div>
<div class="a" style="left:1192.7px;top:710.9px;width:3.6px;height:1px;background:rgba(30,30,30,.55)"></div>
<span class="t" style="left:1205.50px;top:706.03px;font-size:9px;line-height:10.8px;color:#e0e0e0;transform:scaleX(0.8304);">&lt;Group&gt;</span>
<div class="a" style="left:1118.5px;top:734.0px;width:162px;height:1px;background:#595959"></div>
<svg class="a" style="left:1120.8px;top:722.2px" width="11" height="8" viewBox="-5.5 -4 11 8"><path d="M-4.8 0 Q0 -5.6 4.8 0 Q0 5.6 -4.8 0 Z" fill="none" stroke="#d2d2d2" stroke-width="1.2"/><circle r="1.7" fill="#d2d2d2"/><circle r=".6" cx="-.2" fill="#535353"/></svg>
<div class="a" style="left:1150.8px;top:719.7px;width:2px;height:14.6px;background:#4f80ff"></div>
<svg class="a" style="left:1173px;top:721.7px" width="8" height="10" viewBox="-4 -5 8 10"><path d="M-1.5 -3 L1.5 0 L-1.5 3" fill="none" stroke="#ddd" stroke-width="1.4"/></svg>
<div class="a" style="left:1188px;top:720.2px;width:13px;height:13px;background:#111;border:1px solid #1a1a1a;border-radius:1.5px;box-sizing:border-box"></div>
<div class="a" style="left:1189px;top:724.5px;width:11px;height:4px;background:#fff"></div>
<div class="a" style="left:1192.5px;top:725.7px;width:4px;height:2px;background:#557"></div>
<span class="t" style="left:1205.50px;top:721.30px;font-size:9px;line-height:10.8px;color:#e0e0e0;transform:scaleX(0.8304);">&lt;Group&gt;</span>
<div class="a" style="left:1118.5px;top:749.3px;width:162px;height:1px;background:#595959"></div>
<svg class="a" style="left:1120.8px;top:737.47px" width="11" height="8" viewBox="-5.5 -4 11 8"><path d="M-4.8 0 Q0 -5.6 4.8 0 Q0 5.6 -4.8 0 Z" fill="none" stroke="#d2d2d2" stroke-width="1.2"/><circle r="1.7" fill="#d2d2d2"/><circle r=".6" cx="-.2" fill="#535353"/></svg>
<div class="a" style="left:1150.8px;top:735.0px;width:2px;height:14.6px;background:#4f80ff"></div>
<svg class="a" style="left:1173px;top:736.97px" width="8" height="10" viewBox="-4 -5 8 10"><path d="M-1.5 -3 L1.5 0 L-1.5 3" fill="none" stroke="#ddd" stroke-width="1.4"/></svg>
<div class="a" style="left:1188px;top:735.5px;width:13px;height:13px;background:#111;border:1px solid #1a1a1a;border-radius:1.5px;box-sizing:border-box"></div>
<div class="a" style="left:1189px;top:739.8px;width:11px;height:4px;background:#fff"></div>
<div class="a" style="left:1192.5px;top:741.0px;width:4px;height:2px;background:#557"></div>
<span class="t" style="left:1205.50px;top:736.57px;font-size:9px;line-height:10.8px;color:#e0e0e0;transform:scaleX(0.8304);">&lt;Group&gt;</span>
<div class="a" style="left:1118.5px;top:764.5px;width:162px;height:1px;background:#595959"></div>
<svg class="a" style="left:1120.8px;top:752.74px" width="11" height="8" viewBox="-5.5 -4 11 8"><path d="M-4.8 0 Q0 -5.6 4.8 0 Q0 5.6 -4.8 0 Z" fill="none" stroke="#d2d2d2" stroke-width="1.2"/><circle r="1.7" fill="#d2d2d2"/><circle r=".6" cx="-.2" fill="#535353"/></svg>
<svg class="a" style="left:1173px;top:752.24px" width="8" height="10" viewBox="-4 -5 8 10"><path d="M-1.5 -3 L1.5 0 L-1.5 3" fill="none" stroke="#ddd" stroke-width="1.4"/></svg>
<div class="a" style="left:1188px;top:750.7px;width:13px;height:13px;background:#fff;border:1px solid #1a1a1a;border-radius:1.5px;box-sizing:border-box"></div>
<div class="a" style="left:1189px;top:756.0px;width:11px;height:2.4px;background:#999"></div>
<div class="a" style="left:1192.7px;top:756.7px;width:3.6px;height:1px;background:rgba(30,30,30,.55)"></div>
<span class="t" style="left:1205.50px;top:751.84px;font-size:9px;line-height:10.8px;color:#e0e0e0;transform:scaleX(0.8304);">&lt;Group&gt;</span>
<div class="a" style="left:1134.5px;top:414px;width:1px;height:367px;background:#585858"></div>
<div class="a" style="left:1147.5px;top:414px;width:1px;height:367px;background:#585858"></div>
<div class="a" style="left:1118.5px;top:765.7px;width:162px;height:15px;background:#4b6380"></div>
<svg class="a" style="left:1120.8px;top:768.01px" width="11" height="8" viewBox="-5.5 -4 11 8"><path d="M-4.8 0 Q0 -5.6 4.8 0 Q0 5.6 -4.8 0 Z" fill="none" stroke="#d2d2d2" stroke-width="1.2"/><circle r="1.7" fill="#d2d2d2"/><circle r=".6" cx="-.2" fill="#535353"/></svg>
<svg class="a" style="left:1156.3px;top:767.51px" width="8" height="10" viewBox="-4 -5 8 10"><path d="M-1.5 -3 L1.5 0 L-1.5 3" fill="none" stroke="#ddd" stroke-width="1.4"/></svg>
<div class="a" style="left:1171.5px;top:766.0px;width:13.5px;height:13px;background:#fff;border:1px solid #1a1a1a;border-radius:1.5px;box-sizing:border-box"></div>
<div class="a" style="left:1172.5px;top:773.5px;width:11.5px;height:4.5px;background:#222"></div>
<div class="a" style="left:1180px;top:774.5px;width:3px;height:3px;background:#2a7"></div>
<span class="t" style="left:1188.40px;top:767.11px;font-size:9px;line-height:10.8px;color:#e8e8e8;transform:scaleX(0.7482);">DO NOT UNLOCK</span>
<div class="a" style="left:1115px;top:781px;width:165px;height:5px;background:#535353"></div>
<span class="t" style="left:1119.00px;top:781.10px;font-size:9px;line-height:10.8px;color:#ccc;transform:scaleX(0.8327);">10 La...</span>
<div class="a" style="left:1212px;top:783.5px;width:7px;height:3px;border:1px solid #aaa;border-bottom:0;box-sizing:border-box"></div>
<div class="a" style="left:1229px;top:783.5px;width:7px;height:3px;border:1px solid #aaa;border-bottom:0;box-sizing:border-box"></div>
<div class="a" style="left:1247px;top:783.5px;width:7px;height:3px;border:1px solid #aaa;border-bottom:0;box-sizing:border-box"></div>
<div class="a" style="left:1265px;top:783.5px;width:7px;height:3px;border:1px solid #aaa;border-bottom:0;box-sizing:border-box"></div>
</body></html>
